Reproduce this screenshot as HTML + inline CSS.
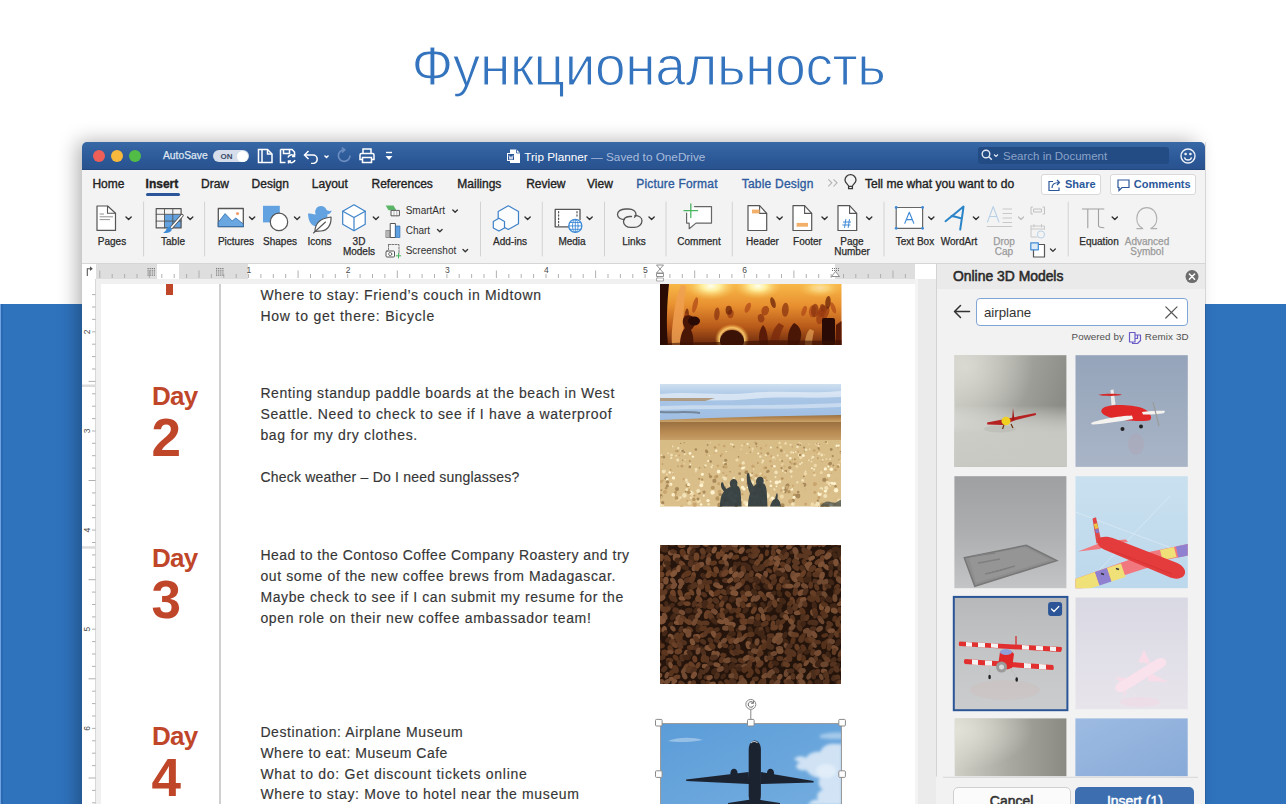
<!DOCTYPE html>
<html><head><meta charset="utf-8">
<style>
*{margin:0;padding:0;box-sizing:border-box}
html,body{width:1286px;height:804px;overflow:hidden;background:#fff;font-family:"Liberation Sans",sans-serif}
.a{position:absolute}
.t{position:absolute;white-space:nowrap;line-height:1}
#band{left:0;top:304px;width:1286px;height:500px;background:#2f73bd}
#title{left:0;top:39px;width:1286px;text-align:center;font-size:55px;color:#3473bd;line-height:55px;letter-spacing:-0.4px;-webkit-text-stroke:1.2px #fff;padding-left:11px}
#win{left:82px;top:142px;width:1123px;height:700px;border-radius:5px 5px 0 0;background:#f3f3f3;box-shadow:-7px -3px 20px -3px rgba(0,0,0,.32);overflow:hidden}
#tb{left:0;top:0;width:1123px;height:28px;background:linear-gradient(#3868a6,#2b5796 70%,#29538f);border-bottom:1px solid #22487f}
.tab{font-size:12px;color:#222;-webkit-text-stroke:0.35px #222}
.rl{font-size:10px;color:#2a2a2a;text-align:center;-webkit-text-stroke:0.25px #2a2a2a}
.sep{width:1px;background:#d4d4d4;top:60px;height:54px}
.chev{width:5px;height:5px;border-right:1.4px solid #444;border-bottom:1.4px solid #444;transform:rotate(45deg)}
.body{font-size:14px;color:#363636;line-height:20.9px;white-space:nowrap;-webkit-text-stroke:0.15px #363636}
.day{font-size:26px;font-weight:bold;color:#c0462a;letter-spacing:-0.8px;line-height:1}
.dig{font-size:53px;font-weight:bold;color:#c0462a;line-height:1}
</style></head>
<body>
<div id="band" class="a"></div>
<div class="a" style="left:0;top:304px;width:1px;height:500px;background:#6fa3e2"></div>
<div class="a" style="left:1px;top:304px;width:1.5px;height:500px;background:#2b68b2"></div>
<div id="title" class="a">Функциональность</div>

<div id="win" class="a">
  <!-- title bar -->
  <div id="tb" class="a"></div>
  <!-- tabs row + ribbon share bg #f3f3f3 -->
  <div class="a" style="left:0;top:121px;width:1123px;height:1px;background:#d9d9d9"></div>
</div>

<!-- ===== TITLE BAR ===== -->
<div class="a" style="left:93px;top:150px;width:12px;height:12px;border-radius:50%;background:#ee5f58"></div>
<div class="a" style="left:110.5px;top:150px;width:12px;height:12px;border-radius:50%;background:#f6b83d"></div>
<div class="a" style="left:128.5px;top:150px;width:12px;height:12px;border-radius:50%;background:#52bd46"></div>
<div class="t" style="left:163px;top:151px;font-size:10.3px;color:#dfe6f1;-webkit-text-stroke:0.25px #dfe6f1">AutoSave</div>
<div class="a" style="left:212.5px;top:150.3px;width:36px;height:12px;border-radius:6px;background:#d5deea"></div>
<div class="t" style="left:220.5px;top:152.5px;font-size:8px;font-weight:bold;color:#3a4a66">ON</div>
<div class="a" style="left:236.5px;top:150.5px;width:11.5px;height:11.5px;border-radius:50%;background:#fff"></div>
<svg class="a" style="left:255px;top:146px" width="145" height="18" viewBox="0 0 145 18" fill="none" stroke="#fff" stroke-width="1.5">
  <!-- sidebar icon x 258-272.7 -->
  <path d="M3.5 3.5h9l4.5 4.5v8.5h-13.5z M7 3.5v13"/>
  <path d="M12.5 3.5v4.5h4.5"/>
  <!-- save icon 280-296 -->
  <path d="M25.5 3.5h11.5l2.5 2.5v3 M25.5 3.5v13h5 M28.5 3.5v4h6v-4"/>
  <path d="M33 11.5a3.5 3.5 0 0 1 6.2 -1.2 M40 14a3.5 3.5 0 0 1 -6.2 1.2"/>
  <path d="M39.5 8v2.5h-2.5 M33.5 17.5v-2.5h2.5"/>
  <!-- undo 304.5-318 -->
  <path d="M50 9h8a4.2 4.2 0 0 1 0 8.4h-2" />
  <path d="M53.5 5l-4 4l4 4"/>
  <path d="M69.5 9.5l2 2l2 -2" stroke-width="1.3"/>
  <!-- redo faded 337-350 -->
  <path d="M89.5 3.8A5.8 5.8 0 1 0 95 9.5" stroke="#6a8cc0" stroke-width="1.7"/>
  <path d="M86.8 1.6l2.9 2.2l-2.6 2.7" stroke="#6a8cc0" stroke-width="1.7"/>
  <!-- print 360-374 -->
  <path d="M108 7.5v-4.5h8v4.5 M106.5 7.5h11a1.5 1.5 0 0 1 1.5 1.5v4.5h-2.5 M106.5 7.5a1.5 1.5 0 0 0 -1.5 1.5v4.5h2.5 M107.5 11.5h9v5h-9z"/>
  <!-- customize -->
  <path d="M131 6.5h6" stroke-width="1.4"/>
  <path d="M130.5 10h7l-3.5 4z" fill="#fff" stroke="none"/>
</svg>
<svg class="a" style="left:506px;top:148px" width="16" height="16" viewBox="0 0 16 16">
  <path d="M4 1.5h6.5l3.5 3.5v10h-10z" fill="#fff"/>
  <path d="M10.5 1.5v3.5h3.5" fill="none" stroke="#2b579a" stroke-width="0.8"/>
  <rect x="1.5" y="5.5" width="7" height="7" fill="#2b579a" stroke="#fff" stroke-width="1"/>
  <path d="M3 7.5l1 4l1-3l1 3l1-4" fill="none" stroke="#fff" stroke-width="0.8"/>
</svg>
<div class="t" style="left:524.2px;top:150.5px;font-size:11.75px;color:#fff">Trip Planner <span style="color:#a9bcdb">— Saved to OneDrive</span></div>
<div class="a" style="left:977.8px;top:147.4px;width:191.4px;height:16.8px;border-radius:3px;background:#234b84"></div>
<svg class="a" style="left:980px;top:148px" width="22" height="15" viewBox="0 0 22 15" fill="none" stroke="#dfe7f3" stroke-width="1.4">
  <circle cx="6" cy="6" r="3.8"/><path d="M8.8 8.8l3 3"/>
  <path d="M14 6.5l2 2l2-2" stroke-width="1.1"/>
</svg>
<div class="t" style="left:1003px;top:150.5px;font-size:11.5px;color:#8aa3c8">Search in Document</div>
<svg class="a" style="left:1179px;top:146.5px" width="18" height="18" viewBox="0 0 18 18" fill="none" stroke="#eef2f8" stroke-width="1.4">
  <circle cx="9" cy="9" r="7"/><circle cx="6.6" cy="7" r="0.6" fill="#fff"/><circle cx="11.4" cy="7" r="0.6" fill="#fff"/>
  <path d="M5.5 10.3a3.6 3.6 0 0 0 7 0"/>
</svg>

<!-- ===== TABS ===== -->
<div class="t tab" style="left:92.4px;top:178.3px">Home</div>
<div class="t tab" style="left:145.6px;top:178.3px;font-weight:bold">Insert</div>
<div class="a" style="left:145.6px;top:192.6px;width:34.6px;height:3px;border-radius:1.5px;background:#2b579a"></div>
<div class="t tab" style="left:201px;top:178.3px">Draw</div>
<div class="t tab" style="left:251.6px;top:178.3px">Design</div>
<div class="t tab" style="left:311.8px;top:178.3px">Layout</div>
<div class="t tab" style="left:371.5px;top:178.3px">References</div>
<div class="t tab" style="left:457.3px;top:178.3px">Mailings</div>
<div class="t tab" style="left:526.2px;top:178.3px">Review</div>
<div class="t tab" style="left:587px;top:178.3px">View</div>
<div class="t tab" style="left:636.2px;top:178.3px;color:#2e5c9e;-webkit-text-stroke-color:#2e5c9e;letter-spacing:0.2px">Picture Format</div>
<div class="t tab" style="left:741.8px;top:178.3px;color:#2e5c9e;-webkit-text-stroke-color:#2e5c9e;letter-spacing:0.2px">Table Design</div>
<svg class="a" style="left:824px;top:172px" width="36" height="20" viewBox="0 0 36 20" fill="none" stroke="#b5b5b5" stroke-width="1.2">
  <path d="M4.3 7.3l3.5 3.5l-3.5 3.5 M9.5 7.3l3.5 3.5l-3.5 3.5"/>
  <path d="M24.6 16.6v-2.4c0-1.4-3.6-3.4-3.6-6a5.5 5.5 0 0 1 11 0c0 2.6-3.6 4.6-3.6 6v2.4z M24.6 14.4h3.8" stroke="#3a3a3a" stroke-width="1.3"/>
</svg>
<div class="t tab" style="left:864.9px;top:178.3px;font-size:12.1px">Tell me what you want to do</div>
<div class="a" style="left:1041.3px;top:174px;width:60px;height:21.3px;border:1px solid #d8d8d8;border-radius:3px;background:#fff"></div>
<svg class="a" style="left:1047px;top:178px" width="16" height="14" viewBox="0 0 16 14" fill="none" stroke="#2b579a" stroke-width="1.2">
  <path d="M6 3.5h-4v9h10v-3"/><path d="M5 10c0-4 3-5.5 7-5.5 M10 2l2.5 2.5l-2.5 2.5"/>
</svg>
<div class="t" style="left:1065px;top:179px;font-size:11px;font-weight:bold;color:#2b579a">Share</div>
<div class="a" style="left:1110.1px;top:174px;width:86.3px;height:21.3px;border:1px solid #d8d8d8;border-radius:3px;background:#fff"></div>
<svg class="a" style="left:1116px;top:178px" width="16" height="14" viewBox="0 0 16 14" fill="none" stroke="#2b579a" stroke-width="1.2">
  <path d="M2 2h11v7.5h-7l-3 3v-3h-1z"/>
</svg>
<div class="t" style="left:1133.8px;top:179px;font-size:11px;font-weight:bold;color:#2b579a">Comments</div>

<!-- ===== RIBBON ===== -->
<svg class="a" style="left:82px;top:198px" width="1123" height="65" viewBox="82 198 1123 65" fill="none" stroke-linejoin="round" stroke-linecap="round">
 <g stroke="#d2d2d2" stroke-width="1">
  <path d="M143.6 202v54 M204.6 202v54 M480.5 202v54 M542.3 202v54 M604.5 202v54 M666 202v54 M732.3 202v54 M884 202v54 M1068.2 202v54"/>
 </g>
 <g stroke="#333" stroke-width="1.4">
  <path d="M126 217l2.6 2.6l2.6-2.6 M187.6 217l2.6 2.6l2.6-2.6 M249.5 217l2.6 2.6l2.6-2.6 M294.5 217l2.6 2.6l2.6-2.6 M373.3 217l2.6 2.6l2.6-2.6 M525 217l2.6 2.6l2.6-2.6 M587 217l2.6 2.6l2.6-2.6 M649 217l2.6 2.6l2.6-2.6 M777 217l2.6 2.6l2.6-2.6 M822 217l2.6 2.6l2.6-2.6 M866.6 217l2.6 2.6l2.6-2.6 M928.7 217l2.6 2.6l2.6-2.6 M973.4 217l2.6 2.6l2.6-2.6 M1112.2 217l2.6 2.6l2.6-2.6" />
  <path d="M452.8 210l2.3 2.3l2.3-2.3 M437.5 229.5l2.3 2.3l2.3-2.3 M463 249.5l2.3 2.3l2.3-2.3 M1050.5 249l2.4 2.4l2.4-2.4" stroke-width="1.3"/>
  <path d="M1018.5 217l2.5 2.5l2.5-2.5" stroke="#bbb" stroke-width="1.2"/>
 </g>
 <!-- Pages -->
 <path d="M97 206h10.7l7.8 7.2v17.2h-18.5z" fill="#fff" stroke="#555" stroke-width="1.2"/>
 <path d="M107.5 206.3v7h7.8" stroke="#555" stroke-width="1.1"/>
 <path d="M100 214h3.6 M100 216.8h12.6 M100 219.6h9.6" stroke="#888" stroke-width="0.9"/>
 <!-- Table -->
 <rect x="164.3" y="214.3" width="16.8" height="13.6" fill="#62a2e0"/>
 <path d="M156.2 208.6h24.9v19.3h-24.9z" fill="none" stroke="#555" stroke-width="1.2"/>
 <path d="M156.2 214.3h24.9 M156.2 221.1h24.9 M164.5 208.6v19.3 M172.8 208.6v19.3" stroke="#555" stroke-width="0.9"/>
 <path d="M182 215.5l-10.5 12" stroke="#555" stroke-width="3.4"/>
 <path d="M182 215.5l-10.5 12" stroke="#fff" stroke-width="1.6"/>
 <path d="M170.5 226.5c-3 0-4 2-4.5 3.5c-0.6 1.6-2 2.3-3 2.4c3 1.2 7.5 0.5 8.8-2.3z" fill="#3f8ad3" stroke="none"/>
 <!-- Pictures -->
 <rect x="218.3" y="208.5" width="25" height="18.2" fill="#fff" stroke="#555" stroke-width="1.3"/>
 <path d="M218.5 222l6.6-8.4l7 7.4l3.7-3l7.5 6v2.6h-24.8z" fill="#6aa6e0" stroke="#2f6fb3" stroke-width="0.8"/>
 <circle cx="237.5" cy="213.6" r="1.6" fill="#f0a070"/>
 <!-- Shapes -->
 <rect x="263" y="205.8" width="16.8" height="16.6" fill="#62a2e0"/>
 <circle cx="279" cy="221.9" r="8.7" fill="#fff" stroke="#555" stroke-width="1.2"/>
 <!-- Icons -->
 <path d="M308 213.5c2 0 5 .5 8 1c-1.5-2-1-6 2.5-8c3-1.6 7 .2 7.7 2.8c.5 1.6 2.5 1.8 5.5 1.5c-.5 2.5-3 3.5-4.5 3.7c1 4 -1 9-4.5 10.5l-6 1.5c-5 0-8.5-5-8.7-13z" fill="#62a2e0" stroke="none"/>
 <path d="M315 231.5c0-7 4-13 16-14.5c0.5 8-3.5 13.5-10 14c-2.5.2-4.5 0-6 .5z" fill="#fff" stroke="#555" stroke-width="1.2"/>
 <path d="M313.5 233l12-11" stroke="#555" stroke-width="1.1"/>
 <!-- 3D Models cube -->
 <path d="M354 204.8l11.2 6.4v13l-11.2 6.5l-11.3-6.5v-13z" fill="#fff" stroke="#3d82c8" stroke-width="1.2"/>
 <path d="M342.8 211.2l11.2 6.3l11.2-6.3 M354 217.5v13" stroke="#3d82c8" stroke-width="1.2"/>
 <!-- SmartArt -->
 <path d="M385.7 205.6h7.8l2.8 4.7h-7.8z" fill="#5ab567"/>
 <rect x="391.4" y="210.4" width="8" height="5.4" fill="#fff" stroke="#555" stroke-width="1"/>
 <path d="M394 210.4v5.4 M396.8 210.4v5.4" stroke="#888" stroke-width="0.7"/>
 <!-- Chart -->
 <rect x="386.2" y="230.5" width="4.1" height="7" fill="#b5b5b5" stroke="#777" stroke-width="0.7"/>
 <rect x="390.6" y="223.5" width="4.8" height="14" fill="#fff" stroke="#555" stroke-width="1"/>
 <rect x="395.8" y="226" width="4.1" height="11.5" fill="#5ea0e0" stroke="#2f6fb3" stroke-width="0.7"/>
 <!-- Screenshot -->
 <path d="M388.5 244.5h10.5v9.5" stroke="#777" stroke-width="1" stroke-dasharray="2 1.3"/>
 <path d="M388.5 244.5v5" stroke="#777" stroke-width="1" stroke-dasharray="2 1.3"/>
 <rect x="386" y="251" width="8.5" height="6" rx="1" fill="#fff" stroke="#555" stroke-width="1"/>
 <circle cx="390.2" cy="254" r="1.6" stroke="#555" stroke-width="0.8"/>
 <path d="M398.5 253.5v4.5 M396.3 255.8h4.4" stroke="#4bb35c" stroke-width="1"/>
 <!-- Add-ins -->
 <path d="M508.3 205.8l10.2 5.8v12.1l-10.2 5.8l-10.1-5.8v-12.1z" fill="#fafcfe" stroke="#3d82c8" stroke-width="1.2"/>
 <path d="M498.9 218.3l5.6 3.2v6.4l-5.6 3.2l-5.6-3.2v-6.4z" fill="#fafcfe" stroke="#3d82c8" stroke-width="1.2"/>
 <!-- Media -->
 <path d="M570 226.8h-14.8v-17.4h24.8v10" fill="#fff" stroke="#555" stroke-width="1.3"/>
 <path d="M558.6 211.5v14 M577 211.5v5" stroke="#555" stroke-width="1.2" stroke-dasharray="1.3 2"/>
 <circle cx="575.3" cy="225.9" r="6.5" fill="#fff" stroke="#3e8ad6" stroke-width="1.3"/>
 <path d="M568.8 225.9h13 M575.3 219.4v13 M569.8 222.5h11 M569.8 229.3h11" stroke="#3e8ad6" stroke-width="0.9"/>
 <ellipse cx="575.3" cy="225.9" rx="2.8" ry="6.5" stroke="#3e8ad6" stroke-width="0.9"/>
 <!-- Links -->
 <path d="M624.5 219.5c-3.5 0-7-1.8-7-5c0-3 3-5.5 8-5.5h3c4.5 0 7.5 2.4 7.5 5.2c0 1.5-0.5 2.2-1.5 3" stroke="#555" stroke-width="1.3"/>
 <path d="M635 215.5c3.8 0 7 2 7 5.3c0 3.5-3.5 6.6-8 6.6h-3c-4.5 0-7.5-2.7-7.5-5.7c0-3 2.5-5 6-5.2h2" stroke="#555" stroke-width="1.3"/>
 <!-- Comment -->
 <path d="M694.5 206.6h17v16.5h-15.5l-6.8 5.6v-5.6h-2.6v-10" fill="#fff" stroke="#666" stroke-width="1.2"/>
 <path d="M690.8 203.8v13.8 M684 210.7h13.6" stroke="#4cb560" stroke-width="1.3"/>
 <!-- Header -->
 <path d="M748 205.6h11.6l7.1 7.8v17.1h-18.7z" fill="#fff" stroke="#555" stroke-width="1.2"/>
 <path d="M759.6 205.8v7.6h7" stroke="#555" stroke-width="1.1"/>
 <rect x="752" y="209.6" width="7.6" height="3.8" fill="#f2b06b"/>
 <!-- Footer -->
 <path d="M793 205.6h11.6l7.1 7.8v17.1h-18.7z" fill="#fff" stroke="#555" stroke-width="1.2"/>
 <path d="M804.6 205.8v7.6h7" stroke="#555" stroke-width="1.1"/>
 <rect x="796.6" y="222.9" width="11.4" height="3.8" fill="#f2b06b"/>
 <!-- Page number -->
 <path d="M838 205.6h11.6l7.1 7.8v17.1h-18.7z" fill="#fff" stroke="#555" stroke-width="1.2"/>
 <path d="M849.6 205.8v7.6h7" stroke="#555" stroke-width="1.1"/>
 <path d="M845.8 219.5l-1.2 8 M849.4 219.5l-1.2 8 M843.4 222h7.2 M842.8 225h7.2" stroke="#3e8ad6" stroke-width="1"/>
 <!-- Text box -->
 <rect x="896.2" y="207.5" width="26.4" height="20.8" fill="#fff" stroke="#666" stroke-width="1.2"/>
 <circle cx="896.2" cy="207.5" r="1.4" fill="#3e8ad6"/><circle cx="922.6" cy="207.5" r="1.4" fill="#3e8ad6"/>
 <circle cx="896.2" cy="228.3" r="1.4" fill="#3e8ad6"/><circle cx="922.6" cy="228.3" r="1.4" fill="#3e8ad6"/>
 <path d="M904.8 223.3l4.5-11l4.5 11 M906.3 219.6h6" stroke="#3e8ad6" stroke-width="1.1"/>
 <!-- WordArt -->
 <path d="M945.5 221.2c4-3 12-9.5 18-14.6c-1 8-2.3 16-3.3 23 M951.5 216c3 0.5 6 1.3 9.3 2.2" stroke="#2a84c8" stroke-width="2"/>
 <!-- Drop cap -->
 <path d="M987.5 222l5.7-15.5l5.7 15.5 M989.8 216.5h6.8" stroke="#b8d0e6" stroke-width="1.1"/>
 <path d="M1003 209h8.6 M1003 213.5h8.6 M1003 218h8.6 M1003 222.5h8.6 M987.2 226.5h24.6" stroke="#c8c8c8" stroke-width="1"/>
 <!-- small 3 icons -->
 <path d="M1032.5 207h-1.5v7h1.5 M1043 207h1.5v7h-1.5" stroke="#c0c0c0" stroke-width="1"/>
 <rect x="1034" y="209" width="7.5" height="3" stroke="#c0c0c0" stroke-width="1"/>
 <path d="M1031 226h13.5v3 M1031 226v11h6 M1031 229h13.5 M1034 224.5v2.5 M1041.5 224.5v2.5" stroke="#c8c8c8" stroke-width="1"/>
 <circle cx="1041" cy="234.5" r="3.6" stroke="#b8d0e6" stroke-width="1" fill="#f3f3f3"/>
 <rect x="1033.5" y="244.5" width="11" height="12.5" fill="#fff" stroke="#555" stroke-width="1.2"/>
 <rect x="1030.8" y="242.8" width="7.5" height="7" fill="#dceaf7" stroke="#3e8ad6" stroke-width="1.2"/>
 <!-- Equation -->
 <path d="M1082.4 209h21.5 M1087.8 209v18.7 M1098.5 209v16.5c0 1.6 1.5 2.2 5.4 2.2" stroke="#a0a0a0" stroke-width="1.1"/>
 <!-- Omega -->
 <path d="M1136.8 228.6h6c-4-2-6-5.5-6-10c0-6.3 4.5-11 10-11s10 4.7 10 11c0 4.5-2 8-6 10h6" stroke="#b0b0b0" stroke-width="1.1"/>
</svg>
<div class="t rl" style="left:96px;width:32px;top:236.5px">Pages</div>
<div class="t rl" style="left:157px;width:32px;top:236.5px">Table</div>
<div class="t rl" style="left:210px;width:52px;top:236.5px">Pictures</div>
<div class="t rl" style="left:260px;width:40px;top:236.5px">Shapes</div>
<div class="t rl" style="left:302px;width:35px;top:236.5px">Icons</div>
<div class="t rl" style="left:339px;width:40px;top:236.5px;line-height:10.4px">3D<br>Models</div>
<div class="t" style="left:405.7px;top:206px;font-size:10px;color:#303030">SmartArt</div>
<div class="t" style="left:405.7px;top:225.5px;font-size:10px;color:#303030">Chart</div>
<div class="t" style="left:405.7px;top:245.5px;font-size:10px;color:#303030">Screenshot</div>
<div class="t rl" style="left:490px;width:40px;top:236.5px">Add-ins</div>
<div class="t rl" style="left:552px;width:40px;top:236.5px">Media</div>
<div class="t rl" style="left:614px;width:40px;top:236.5px">Links</div>
<div class="t rl" style="left:674px;width:50px;top:236.5px">Comment</div>
<div class="t rl" style="left:742px;width:41px;top:236.5px">Header</div>
<div class="t rl" style="left:787px;width:41px;top:236.5px">Footer</div>
<div class="t rl" style="left:830px;width:44px;top:236.5px;line-height:10.4px">Page<br>Number</div>
<div class="t rl" style="left:890px;width:50px;top:236.5px">Text Box</div>
<div class="t rl" style="left:936px;width:46px;top:236.5px">WordArt</div>
<div class="t rl" style="left:983px;width:42px;top:236.5px;line-height:10.4px;color:#9a9a9a;-webkit-text-stroke-color:#9a9a9a">Drop<br>Cap</div>
<div class="t rl" style="left:1074px;width:50px;top:236.5px">Equation</div>
<div class="t rl" style="left:1121px;width:52px;top:236.5px;line-height:10.4px;color:#9a9a9a;-webkit-text-stroke-color:#9a9a9a">Advanced<br>Symbol</div>

<!-- ===== RULER ===== -->
<div class="a" style="left:82px;top:263px;width:1123px;height:1px;background:#d6d6d6"></div>
<div class="a" style="left:82px;top:264px;width:854px;height:14.5px;background:#fff"></div>
<div class="a" style="left:96px;top:264px;width:61px;height:14.5px;background:#dedede"></div>
<div class="a" style="left:179px;top:264px;width:68.5px;height:14.5px;background:#dedede"></div>
<div class="a" style="left:835px;top:264px;width:80px;height:14.5px;background:#dedede"></div>
<div class="a" style="left:82px;top:278.5px;width:854px;height:526px;background:#f0f0f0"></div>
<div class="a" style="left:82px;top:278.5px;width:14px;height:526px;background:#fff"></div>
<div class="a" style="left:95.3px;top:278.5px;width:0.8px;height:526px;background:#d8d8d8"></div>
<!-- page -->
<div class="a" style="left:101px;top:284px;width:814px;height:520px;background:#fff"></div>
<div class="a" style="left:915px;top:278.5px;width:21px;height:526px;background:#ebebeb"></div>
<div class="a" style="left:915px;top:278.5px;width:3px;height:526px;background:#f4f4f4"></div>
<svg class="a" style="left:82px;top:262px" width="854" height="542" viewBox="82 262 854 542">
 <path d="M99.8 270.5v7.5 M112.2 274v4 M124.6 274v4 M137.0 274v4 M149.4 270.5v7.5 M161.8 274v4 M174.2 274v4 M186.6 274v4 M199.0 270.5v7.5 M211.4 274v4 M223.8 274v4 M236.2 274v4 M248.6 274v4 M260.9 274v4 M273.3 274v4 M285.7 274v4 M298.1 270.5v7.5 M310.5 274v4 M322.9 274v4 M335.3 274v4 M347.7 274v4 M360.1 274v4 M372.5 274v4 M384.9 274v4 M397.3 270.5v7.5 M409.7 274v4 M422.1 274v4 M434.5 274v4 M446.9 274v4 M459.2 274v4 M471.6 274v4 M484.0 274v4 M496.4 270.5v7.5 M508.8 274v4 M521.2 274v4 M533.6 274v4 M546.0 274v4 M558.4 274v4 M570.8 274v4 M583.2 274v4 M595.6 270.5v7.5 M608.0 274v4 M620.4 274v4 M632.8 274v4 M645.1 274v4 M657.5 274v4 M669.9 274v4 M682.3 274v4 M694.7 270.5v7.5 M707.1 274v4 M719.5 274v4 M731.9 274v4 M744.3 274v4 M756.7 274v4 M769.1 274v4 M781.5 274v4 M793.9 270.5v7.5 M806.3 274v4 M818.7 274v4 M831.1 274v4 M843.5 274v4 M855.8 274v4 M868.2 274v4 M880.6 274v4 M893.0 270.5v7.5 M905.4 274v4" stroke="#a8a8a8" stroke-width="0.9"/>
 <g font-family="Liberation Sans" font-size="8.5" fill="#4a4a4a"><text x="246.6" y="272.8">1</text><text x="345.7" y="272.8">2</text><text x="444.9" y="272.8">3</text><text x="544.0" y="272.8">4</text><text x="643.1" y="272.8">5</text><text x="742.3" y="272.8">6</text></g>
 <path d="M92 294.6h3.5 M92 307.0h3.5 M92 319.4h3.5 M92 331.8h3.5 M92 344.2h3.5 M92 356.6h3.5 M92 369.0h3.5 M88.5 381.4h7 M92 393.8h3.5 M92 406.2h3.5 M92 418.6h3.5 M92 431.0h3.5 M92 443.3h3.5 M92 455.7h3.5 M92 468.1h3.5 M88.5 480.5h7 M92 492.9h3.5 M92 505.3h3.5 M92 517.7h3.5 M92 530.1h3.5 M92 542.5h3.5 M92 554.9h3.5 M92 567.3h3.5 M88.5 579.7h7 M92 592.1h3.5 M92 604.5h3.5 M92 616.9h3.5 M92 629.2h3.5 M92 641.6h3.5 M92 654.0h3.5 M92 666.4h3.5 M88.5 678.8h7 M92 691.2h3.5 M92 703.6h3.5 M92 716.0h3.5 M92 728.4h3.5 M92 740.8h3.5 M92 753.2h3.5 M92 765.6h3.5 M88.5 778.0h7 M92 790.4h3.5 M92 802.8h3.5" stroke="#a8a8a8" stroke-width="0.9"/>
 <g font-family="Liberation Sans" font-size="8.5" fill="#4a4a4a"><text transform="translate(87.5 331.8) rotate(-90)" text-anchor="middle" y="2.5">2</text><text transform="translate(87.5 431.0) rotate(-90)" text-anchor="middle" y="2.5">3</text><text transform="translate(87.5 530.1) rotate(-90)" text-anchor="middle" y="2.5">4</text><text transform="translate(87.5 629.2) rotate(-90)" text-anchor="middle" y="2.5">5</text><text transform="translate(87.5 728.4) rotate(-90)" text-anchor="middle" y="2.5">6</text><text transform="translate(87.5 827.6) rotate(-90)" text-anchor="middle" y="2.5">7</text></g>
 <!-- margin markers -->
 <g fill="#777">
  <path d="M147.5 268h1.2v1.2h-1.2z M149.6 268h1.2v1.2h-1.2z M151.7 268h1.2v1.2h-1.2z M153.8 268h1.2v1.2h-1.2z M147.5 270.2h1.2v1.2h-1.2z M149.6 270.2h1.2v1.2h-1.2z M151.7 270.2h1.2v1.2h-1.2z M153.8 270.2h1.2v1.2h-1.2z M147.5 272.4h1.2v1.2h-1.2z M149.6 272.4h1.2v1.2h-1.2z M151.7 272.4h1.2v1.2h-1.2z M153.8 272.4h1.2v1.2h-1.2z M147.5 274.6h1.2v1.2h-1.2z M149.6 274.6h1.2v1.2h-1.2z M151.7 274.6h1.2v1.2h-1.2z M153.8 274.6h1.2v1.2h-1.2z"/>
  <path d="M216 268h1.2v1.2h-1.2z M218.1 268h1.2v1.2h-1.2z M220.2 268h1.2v1.2h-1.2z M222.3 268h1.2v1.2h-1.2z M216 270.2h1.2v1.2h-1.2z M218.1 270.2h1.2v1.2h-1.2z M220.2 270.2h1.2v1.2h-1.2z M222.3 270.2h1.2v1.2h-1.2z M216 272.4h1.2v1.2h-1.2z M218.1 272.4h1.2v1.2h-1.2z M220.2 272.4h1.2v1.2h-1.2z M222.3 272.4h1.2v1.2h-1.2z M216 274.6h1.2v1.2h-1.2z M218.1 274.6h1.2v1.2h-1.2z M220.2 274.6h1.2v1.2h-1.2z M222.3 274.6h1.2v1.2h-1.2z"/>
 </g>
 <path d="M87.3 276v-7.3h3" stroke="#555" stroke-width="1.1" fill="none"/><path d="M90 266.3l2.8 2.4l-2.8 2.4z" fill="#555"/>
 <!-- indent markers at 660 and 835 -->
 <path d="M656.5 265h7l-3.5 4l3.5 4h-7l3.5-4z" fill="#fff" stroke="#777" stroke-width="0.8"/>
 <path d="M656.5 273.5h7v3h-7z" fill="#fff" stroke="#777" stroke-width="0.8"/>
 <path d="M656.5 278h7v3h-7z" fill="#fff" stroke="#999" stroke-width="0.8"/>
 <path d="M832 268h1v1h-1z M834 268h1v1h-1z M836 268h1v1h-1z M838 268h1v1h-1z M832 270h1v1h-1z M834 270h1v1h-1z M836 270h1v1h-1z M838 270h1v1h-1z" fill="#777"/>
 <path d="M835.5 271.5l4 5h-8z" fill="#fff" stroke="#777" stroke-width="0.8"/>
 <!-- left ruler margin markers -->
 <rect x="82" y="384.5" width="14" height="2.5" fill="#dcdcdc"/><rect x="82" y="546.2" width="14" height="2.5" fill="#dcdcdc"/>
</svg>

<!-- ===== DOCUMENT CONTENT ===== -->
<div class="body a" style="left:260.4px;top:284.6px;letter-spacing:0.636px">Where to stay: Friend’s couch in Midtown</div>
<div class="body a" style="left:260.4px;top:305.5px;letter-spacing:0.792px">How to get there: Bicycle</div>
<div class="body a" style="left:260.4px;top:383.0px;letter-spacing:0.573px">Renting standup paddle boards at the beach in West</div>
<div class="body a" style="left:260.4px;top:403.9px;letter-spacing:0.661px">Seattle. Need to check to see if I have a waterproof</div>
<div class="body a" style="left:260.4px;top:424.8px;letter-spacing:0.691px">bag for my dry clothes.</div>
<div class="body a" style="left:260.4px;top:466.6px;letter-spacing:0.206px">Check weather – Do I need sunglasses?</div>
<div class="body a" style="left:260.4px;top:545.2px;letter-spacing:0.5px">Head to the Contoso Coffee Company Roastery and try</div>
<div class="body a" style="left:260.4px;top:566.1px;letter-spacing:0.623px">out some of the new coffee brews from Madagascar.</div>
<div class="body a" style="left:260.4px;top:587.0px;letter-spacing:0.614px">Maybe check to see if I can submit my resume for the</div>
<div class="body a" style="left:260.4px;top:607.9px;letter-spacing:0.673px">open role on their new coffee ambassador team!</div>
<div class="body a" style="left:260.4px;top:721.7px;letter-spacing:0.604px">Destination: Airplane Museum</div>
<div class="body a" style="left:260.4px;top:742.6px;letter-spacing:0.496px">Where to eat: Museum Cafe</div>
<div class="body a" style="left:260.4px;top:763.5px;letter-spacing:0.724px">What to do: Get discount tickets online</div>
<div class="body a" style="left:260.4px;top:784.4px;letter-spacing:0.64px">Where to stay: Move to hotel near the museum</div>
<div class="a" style="left:219.3px;top:284px;width:2px;height:520px;background:#d0d0d0"></div>
<div class="a" style="left:166px;top:284px;width:7px;height:11px;background:#c0462a"></div>
<div class="t day" style="left:152px;top:382.9px">Day</div>
<div class="t dig" style="left:151.5px;top:410.8px">2</div>
<div class="t day" style="left:152px;top:544.5px">Day</div>
<div class="t dig" style="left:151.5px;top:572.5px">3</div>
<div class="t day" style="left:152px;top:722.9px">Day</div>
<div class="t dig" style="left:151.5px;top:751px">4</div>

<!-- ===== PANEL ===== -->
<div class="a" style="left:936px;top:264px;width:269px;height:540px;background:#f2f2f2"></div>
<div class="a" style="left:936px;top:264px;width:269px;height:24.5px;background:#eaeaea"></div>
<div class="a" style="left:935.5px;top:264px;width:1px;height:540px;background:#d3d3d3"></div>
<div class="t" style="left:953px;top:270.2px;font-size:13.9px;color:#2a2a2a;-webkit-text-stroke:0.55px #2a2a2a">Online 3D Models</div>
<svg class="a" style="left:1185px;top:270px" width="14" height="14" viewBox="0 0 14 14">
 <circle cx="7" cy="6.6" r="6.5" fill="#6d6d6d"/>
 <path d="M4.4 4l5.2 5.2 M9.6 4l-5.2 5.2" stroke="#fff" stroke-width="1.5" stroke-linecap="round"/>
</svg>
<svg class="a" style="left:950px;top:302px" width="24" height="20" viewBox="0 0 24 20" fill="none" stroke="#333" stroke-width="1.5" stroke-linecap="round" stroke-linejoin="round">
 <path d="M19.5 9.5h-14.5 M10.5 3.5l-6 6l6 6"/>
</svg>
<div class="a" style="left:976px;top:297.8px;width:211.5px;height:28.4px;border:1.6px solid #80a6d6;border-radius:4px;background:#fff"></div>
<div class="t" style="left:983.9px;top:305.8px;font-size:13.3px;color:#333">airplane</div>
<svg class="a" style="left:1164px;top:304.5px" width="15" height="15" viewBox="0 0 15 15">
 <path d="M1.8 1.8l11.2 11.2 M13 1.8l-11.2 11.2" stroke="#555" stroke-width="1.2" stroke-linecap="round"/>
</svg>
<div class="t" style="left:1071.6px;top:332.4px;font-size:9.8px;color:#505050;letter-spacing:0.05px">Powered by</div>
<svg class="a" style="left:1128px;top:330.5px" width="14" height="14" viewBox="0 0 14 14" fill="none" stroke="#6a5cc8" stroke-width="1.2" stroke-linejoin="round">
 <path d="M1.5 1.5h5.5v9.5h-5.5z M7 4l5.5 0v5.5l-3 3h-5v-2"/>
 <path d="M9.5 4v3.5h-2.5"/>
</svg>
<div class="t" style="left:1144.8px;top:332.4px;font-size:9.8px;color:#505050;letter-spacing:0.1px">Remix 3D</div>

<svg class="a" style="left:936px;top:345px" width="269" height="459" viewBox="936 345 269 459">
 <defs>
  <linearGradient id="t1" x1="0" y1="0" x2="1" y2="0.3"><stop offset="0" stop-color="#c6c6c0"/><stop offset="1" stop-color="#8c8c86"/></linearGradient>
  <linearGradient id="t1b" x1="0" y1="0" x2="0" y2="1"><stop offset="0" stop-color="#fff" stop-opacity="0"/><stop offset="0.45" stop-color="#fff" stop-opacity="0"/><stop offset="0.7" stop-color="#cfcfca" stop-opacity="0.9"/><stop offset="1" stop-color="#c9c9c4" stop-opacity="1"/></linearGradient>
  <radialGradient id="t1c" cx="0.1" cy="0.1" r="0.6"><stop offset="0" stop-color="#e0e0d8" stop-opacity=".8"/><stop offset="1" stop-color="#e0e0d8" stop-opacity="0"/></radialGradient>
  <linearGradient id="t2" x1="0" y1="0" x2="0" y2="1"><stop offset="0" stop-color="#95a4ba"/><stop offset="1" stop-color="#a9b5c7"/></linearGradient>
  <linearGradient id="t3" x1="0" y1="0" x2="0" y2="1"><stop offset="0" stop-color="#9ea0a2"/><stop offset="0.5" stop-color="#acaeb0"/><stop offset="1" stop-color="#c2c4c5"/></linearGradient>
  <linearGradient id="t4" x1="0" y1="0" x2="0" y2="1"><stop offset="0" stop-color="#c9e0ef"/><stop offset="1" stop-color="#bcd8ec"/></linearGradient>
  <linearGradient id="t5" x1="0" y1="0" x2="0" y2="1"><stop offset="0" stop-color="#b6b8ba"/><stop offset="0.5" stop-color="#c3c5c6"/><stop offset="1" stop-color="#cbcccd"/></linearGradient>
  <linearGradient id="t6" x1="0" y1="0" x2="0" y2="1"><stop offset="0" stop-color="#d9d9e3"/><stop offset="1" stop-color="#e8e4ec"/></linearGradient>
  <linearGradient id="t7" x1="0" y1="0" x2="1" y2="0"><stop offset="0" stop-color="#cfcfc6"/><stop offset="0.5" stop-color="#a8a8a0"/><stop offset="1" stop-color="#8a8a82"/></linearGradient>
  <radialGradient id="t7b" cx="0" cy="0.2" r="0.7"><stop offset="0" stop-color="#e4e4da" stop-opacity=".9"/><stop offset="1" stop-color="#e4e4da" stop-opacity="0"/></radialGradient>
  <linearGradient id="t8" x1="0" y1="0" x2="1" y2="1"><stop offset="0" stop-color="#9dbbe2"/><stop offset="1" stop-color="#88aad8"/></linearGradient>
 </defs>
 <!-- thumb1 -->
 <rect x="954.4" y="355.2" width="112" height="111.7" fill="url(#t1)"/>
 <rect x="954.4" y="355.2" width="112" height="111.7" fill="url(#t1c)"/>
 <rect x="954.4" y="355.2" width="112" height="111.7" fill="url(#t1b)"/>
 <ellipse cx="1000" cy="429" rx="16" ry="3.5" fill="#a8a8a2" opacity=".3"/>
 <path d="M987 422.5l48.7-9.5l.3 2l-20 5l-13 5l-15.6 -0.5z" fill="#b52222"/>
 <path d="M1013 408l1.5 12l-2.5 0z" fill="#a01818"/>
 <ellipse cx="1006" cy="421" rx="4.5" ry="4.2" fill="#f0d020"/>
 <path d="M1004 425l-1.5 4 M1011 424l2 4" stroke="#6a3010" stroke-width="1.2"/>
 <!-- thumb2 -->
 <rect x="1075.5" y="355.2" width="112.3" height="111.7" fill="url(#t2)"/>
 <ellipse cx="1136" cy="444" rx="8" ry="11" fill="#c89098" opacity=".14"/>
 <path d="M1110.5 390l3-.5l2 15l-4 1z" fill="#ecebe8"/>
 <path d="M1098 394.8c4-1.3 20-1.7 24 0c-4 1.5-20 1.6-24 0z" fill="#d42a2a"/>
 <path d="M1102 409c6-6 30-4 40-1c8 3 11 10 8 12c-3 2-28 1-38-2c-10-3-12-6-10-9z" fill="#e02828"/>
 <path d="M1091 423c6-3 28-7 41-7.5l1 3.5c-12 2-28 5-41 5.5z" fill="#f4f2ee"/>
 <path d="M1142 412c6-1 17-1.5 23-1.3l-1 2.5c-6 1-15 1.5-21 1.3z" fill="#f4f2ee"/>
 <path d="M1153 402l6 24" stroke="#9a9a9a" stroke-width="1.2"/>
 <circle cx="1122.5" cy="429" r="2" fill="#222"/><circle cx="1141" cy="426.5" r="2" fill="#222"/>
 <!-- thumb3 -->
 <rect x="954.4" y="476.2" width="112" height="112" fill="url(#t3)"/>
 <path d="M964.3 557.7l62-12.4l30.5 15.3l-82 25.7z" fill="#8d8d8d" stroke="#777" stroke-width="1.5"/>
 <path d="M969 558l56-11l25 13l-74 23z" fill="#959595"/>
 <path d="M975 556c5-1 12-2 20-3 M978 563c8-1 15-3 22-4 M985 574c10-2 20-5 30-8" stroke="#808080" stroke-width="1.5"/>
 <!-- thumb4 -->
 <clipPath id="c4"><rect x="1075.5" y="476.2" width="112.3" height="112"/></clipPath>
 <rect x="1075.5" y="476.2" width="112.3" height="112" fill="url(#t4)"/>
 <g clip-path="url(#c4)">
 <path d="M1075.5 512l112 42 M1082 588l88-92" stroke="#e8f3fb" stroke-width="0.6" opacity=".8"/>
 <path d="M1092.5 518.5l3.5-1.2l5.5 25l-5 1.2z" fill="#e04848"/>
 <path d="M1093.8 524l3.2-.8l1.3 5l-3.2.8z" fill="#e8c840"/>
 <path d="M1095 529.5l3.2-.8l1.1 3.8l-3.2.8z" fill="#8a78c8"/>
 <path d="M1078 551.5l22-8.5l6 .5l-6 5.5z" fill="#f07a80"/>
 <path d="M1106 541l20-1.5l2 2.5l-20 2z" fill="#f07a80"/>
 <path d="M1144 553l43.8-9v11.5l-40 8z" fill="#f07a80"/>
 <path d="M1160 550l14-3l2.5 10l-14 3z" fill="#f0e078"/>
 <path d="M1176 546.5l11.8-2.5v11.5l-9.5 2z" fill="#9080d0"/>
 <path d="M1072 580l68-24l10 11l-78 25z" fill="#f27880"/>
 <path d="M1072 580l23-8l4.5 13.5l-27.5 8.5z" fill="#f0e078"/>
 <path d="M1095 572l12-4l4.5 13.5l-12 4z" fill="#9080d0"/>
 <path d="M1107 568l14-4.5l4.5 13.5l-14 4.5z" fill="#f0e078"/>
 <path d="M1101 573.5l3 1 M1116 568.5l3 1" stroke="#333" stroke-width="1.5"/>
 <path d="M1098 539c3-3 10-3 16-.5l62 24c8 3 11 9 8 13c-3 4-10 4-16 1l-64-27c-5-2-8-7-6-10.5z" fill="#e43c3c"/>
 <path d="M1110 550l62 24" stroke="#c82828" stroke-width="1" opacity=".5"/>
 </g>
 <!-- thumb5 selected -->
 <rect x="953.8" y="596.9" width="113.6" height="113.3" fill="url(#t5)"/>
 <ellipse cx="1005" cy="690" rx="35" ry="10" fill="#d8b4b4" opacity=".18"/>
 <path d="M959.5 641.5l102 5.5c1 2 0 4-1 5l-101-6c-1-1-1-3 0-4.5z" fill="#e23030"/>
 <path d="M966 642l6 .4v4.4l-6-.4z M978 642.6l7 .4v4.4l-7-.4z M991 643.3l7 .4v4.3l-7-.4z M1022 645l7 .4v4.4l-7-.4z M1036 645.8l7 .4v4.3l-7-.4z M1050 646.5l6 .4v4.3l-6-.4z" fill="#f4f4f4"/>
 <path d="M965 659l88 6c1 2 1 4 0 5l-88-6c-1.5-1-1.5-3.5 0-5z" fill="#e23030"/>
 <path d="M972 659.5l6 .4v5l-6-.4z M985 660.4l7 .4v5l-7-.4z M1024 663l7 .4v5l-7-.4z M1039 664l7 .4v5l-7-.4z" fill="#f4f4f4"/>
 <path d="M1000 652c4-3 12-2 14 2l-2 14c-4 2-12 2-14-2z" fill="#e02828"/>
 <ellipse cx="1006" cy="652" rx="6" ry="3" fill="#8fa0d8"/>
 <circle cx="1001.5" cy="667" r="5.5" fill="#9a9a9a"/>
 <circle cx="1001.5" cy="667" r="2.5" fill="#d8d8d8"/>
 <path d="M1016 636v9" stroke="#d04040" stroke-width="1.5"/>
 <path d="M990 668l-1 9 M1010 668l7 10" stroke="#bbb" stroke-width="0.9"/>
 <ellipse cx="989.6" cy="677" rx="1.3" ry="2.2" fill="#222"/><ellipse cx="1016.7" cy="679.5" rx="1.3" ry="2.2" fill="#222"/>
 <rect x="953.8" y="596.9" width="113.6" height="113.3" fill="none" stroke="#2b5597" stroke-width="2"/>
 <rect x="1048.1" y="601.9" width="14" height="14" rx="3" fill="#2b5597"/>
 <path d="M1051.5 609l2.5 2.5l4.8-5" fill="none" stroke="#fff" stroke-width="1.2" stroke-linecap="round" stroke-linejoin="round"/>
 <!-- thumb6 -->
 <rect x="1075.5" y="597.5" width="112.3" height="111.8" fill="url(#t6)"/>
 <ellipse cx="1140" cy="702" rx="20" ry="5" fill="#f0d8e4" opacity=".6"/>
 <path d="M1138 662l6-12l7 14z M1148 672l20 10l-20-1z M1128 686l-5 13l1-13z M1115 677l11 1l-6 4z" fill="#f8dce8"/>
 <path d="M1116 690c-2-3 0-6 4-8l37-23c4-2 8-1 9 2c1 3-1 5-4 7l-37 23c-4 2-8 1-9-1z" fill="#fae2ec"/>
 <!-- thumb7 -->
 <rect x="954.7" y="718.4" width="111.7" height="58" fill="url(#t7)"/>
 <rect x="954.7" y="718.4" width="111.7" height="58" fill="url(#t7b)"/>
 <!-- thumb8 -->
 <rect x="1075.4" y="718.4" width="112.3" height="58" fill="url(#t8)"/>
 <!-- separator -->
 <rect x="936" y="776.5" width="269" height="28" fill="#f2f2f2"/>
 <path d="M943 777.3h255" stroke="#d6d6d6" stroke-width="1"/>
</svg>
<div class="a" style="left:952.6px;top:787.3px;width:118px;height:30px;border:1px solid #d0d0d0;border-radius:5px;background:#fbfbfb"></div>
<div class="t" style="left:952.6px;width:118px;text-align:center;top:793.5px;font-size:14px;color:#333;-webkit-text-stroke:0.55px #333">Cancel</div>
<div class="a" style="left:1075.4px;top:786.9px;width:119px;height:30px;border-radius:5px;background:#3d6fb0"></div>
<div class="t" style="left:1075.4px;width:119px;text-align:center;top:793.5px;font-size:14px;color:#fff;-webkit-text-stroke:0.5px #fff">Insert (1)</div>
<div class="a" style="left:1204.5px;top:142px;width:1px;height:662px;background:rgba(0,0,0,0.12)"></div>

<!-- images -->
<svg class="a" style="left:660px;top:284px" width="181.5" height="61" viewBox="0 0 181.5 61">
<defs>
<linearGradient id="cg" x1="0" y1="0" x2="0" y2="1"><stop offset="0" stop-color="#f8b848"/><stop offset="0.35" stop-color="#e89030"/><stop offset="0.7" stop-color="#b85a1a"/><stop offset="1" stop-color="#6a2a0e"/></linearGradient>
<radialGradient id="l1"><stop offset="0" stop-color="#fffff0"/><stop offset="0.35" stop-color="#fff0a0" stop-opacity=".95"/><stop offset="1" stop-color="#f8c050" stop-opacity="0"/></radialGradient>
<radialGradient id="rim"><stop offset="0.55" stop-color="#ffe090" stop-opacity="0"/><stop offset="0.75" stop-color="#ffd070" stop-opacity=".9"/><stop offset="1" stop-color="#ffb040" stop-opacity="0"/></radialGradient>
</defs>
<rect width="181.5" height="61" fill="url(#cg)"/>
<ellipse cx="51" cy="2" rx="26" ry="14" fill="url(#l1)"/>
<ellipse cx="98" cy="2" rx="24" ry="13" fill="url(#l1)"/>
<ellipse cx="160" cy="4" rx="22" ry="10" fill="url(#l1)" opacity=".55"/>
<ellipse cx="56.9" cy="30.0" rx="2.7" ry="6.4" transform="rotate(5 56.9 30.0)" fill="#8a3410" opacity=".75"/><ellipse cx="160.9" cy="28.3" rx="3.1" ry="4.8" transform="rotate(2 160.9 28.3)" fill="#b04a18" opacity=".75"/><ellipse cx="105.2" cy="26.7" rx="3.7" ry="4.9" transform="rotate(18 105.2 26.7)" fill="#9a3c12" opacity=".75"/><ellipse cx="101.1" cy="34.3" rx="3.3" ry="4.3" transform="rotate(-10 101.1 34.3)" fill="#8a3410" opacity=".75"/><ellipse cx="24.8" cy="37.0" rx="2.9" ry="6.9" transform="rotate(11 24.8 37.0)" fill="#b04a18" opacity=".75"/><ellipse cx="162.8" cy="26.7" rx="3.6" ry="5.8" transform="rotate(19 162.8 26.7)" fill="#9a3c12" opacity=".75"/><ellipse cx="35.1" cy="21.0" rx="2.4" ry="7.9" transform="rotate(14 35.1 21.0)" fill="#b04a18" opacity=".75"/><ellipse cx="152.6" cy="27.3" rx="3.7" ry="6.3" transform="rotate(4 152.6 27.3)" fill="#b04a18" opacity=".75"/><ellipse cx="160.2" cy="33.0" rx="3.9" ry="7.4" transform="rotate(10 160.2 33.0)" fill="#9a3c12" opacity=".75"/><ellipse cx="70.6" cy="29.9" rx="3.1" ry="4.4" transform="rotate(7 70.6 29.9)" fill="#9a3c12" opacity=".75"/><ellipse cx="173.2" cy="23.9" rx="2.2" ry="5.9" transform="rotate(-21 173.2 23.9)" fill="#b04a18" opacity=".75"/><ellipse cx="144.1" cy="27.0" rx="2.3" ry="5.2" transform="rotate(19 144.1 27.0)" fill="#b04a18" opacity=".75"/><ellipse cx="26.8" cy="31.5" rx="2.1" ry="6.9" transform="rotate(3 26.8 31.5)" fill="#6a2208" opacity=".75"/><ellipse cx="162.9" cy="24.1" rx="2.5" ry="4.1" transform="rotate(-21 162.9 24.1)" fill="#8a3410" opacity=".75"/><ellipse cx="113.0" cy="18.7" rx="2.4" ry="5.6" transform="rotate(-17 113.0 18.7)" fill="#6a2208" opacity=".75"/><ellipse cx="26.6" cy="37.1" rx="2.6" ry="7.8" transform="rotate(-6 26.6 37.1)" fill="#b04a18" opacity=".75"/><ellipse cx="154.8" cy="26.5" rx="3.7" ry="6.7" transform="rotate(6 154.8 26.5)" fill="#8a3410" opacity=".75"/><ellipse cx="165.8" cy="29.2" rx="2.9" ry="6.9" transform="rotate(22 165.8 29.2)" fill="#9a3c12" opacity=".75"/><ellipse cx="87.8" cy="23.7" rx="2.6" ry="5.4" transform="rotate(24 87.8 23.7)" fill="#b04a18" opacity=".75"/><ellipse cx="68.8" cy="26.3" rx="3.2" ry="4.5" transform="rotate(-2 68.8 26.3)" fill="#6a2208" opacity=".75"/><ellipse cx="125.3" cy="25.8" rx="3.4" ry="7.0" transform="rotate(4 125.3 25.8)" fill="#8a3410" opacity=".75"/><ellipse cx="168.0" cy="18.5" rx="2.7" ry="6.5" transform="rotate(5 168.0 18.5)" fill="#6a2208" opacity=".75"/>
<path d="M0 0h9c-2 20-3 40-1 61h-8z" fill="#2a0c04"/>
<path d="M12 61c-1-12 1-25 3-38c1-8 3-15 6-22l5 1c-2 12-3 30-2 59z" fill="#f0a050" opacity=".85"/>
<path d="M20 61c0-8 2-14 5-17c-3-4-3-9 0-12c5-2 10 1 10 6c0 4-2 6-4 8c2 4 3 10 2 15z" fill="#4a1606"/>
<ellipse cx="34" cy="37" rx="6" ry="4.5" fill="#2a0a04"/>
<ellipse cx="72" cy="55" rx="17" ry="15" fill="url(#rim)"/>
<ellipse cx="72" cy="57" rx="12" ry="11" fill="#3a1206"/>
<path d="M100 61c-2-8-1-15 3-20c3 3 5 9 5 20z" fill="#5a1c08"/>
<path d="M110 61c1-10 4-18 9-22l5 3c-3 5-5 11-5 19z" fill="#7a2a0c" opacity=".8"/>
<path d="M128 61c-1-10 1-17 6-22c5 2 8 8 7 14l-2 8z" fill="#4a1606"/>
<path d="M145 61c0-8 2-13 5-16l4 2c-1 5-2 9-2 14z" fill="#f0b060" opacity=".6"/>
<rect x="162" y="34" width="13" height="27" rx="2" fill="#2a0a04"/>
<path d="M176 61v-20l5.5-4v24z" fill="#5a1a06"/>
<path d="M0 61h181.5v-5c-30 2-60-1-90 1s-60 0-91 3z" fill="#3a1004" opacity=".6"/>
</svg>
<svg class="a" style="left:660px;top:384px" width="181" height="122.5" viewBox="0 0 181 122.5">
<defs>
<linearGradient id="sea" x1="0" y1="0" x2="0" y2="1"><stop offset="0" stop-color="#cfe0f0"/><stop offset="0.3" stop-color="#a9c6e6"/><stop offset="1" stop-color="#9dbde2"/></linearGradient>
<linearGradient id="sand" x1="0" y1="0" x2="0" y2="1"><stop offset="0" stop-color="#9a7040"/><stop offset="0.5" stop-color="#b88a52"/><stop offset="1" stop-color="#c9a46c"/></linearGradient>
<linearGradient id="peb" x1="0" y1="0" x2="0" y2="1"><stop offset="0" stop-color="#d8bc86"/><stop offset="1" stop-color="#dcc08c"/></linearGradient>
</defs>
<rect width="181" height="40" fill="url(#sea)"/>
<path d="M0 10c30-3 60 2 90-1s60 1 91-2v6c-30 2-60-1-91 2s-60 0-90 2z" fill="#e8f0f8" opacity=".7"/>
<path d="M0 22c40-2 80 1 181-3v4c-60 3-120 1-181 3z" fill="#dfe9f5" opacity=".6"/>
<path d="M0 14h55l-10 3h-45z" fill="#a88b68" opacity=".8"/>
<path d="M0 28c15 1 25-1 40 1" stroke="#56606a" stroke-width="2" opacity=".6"/>
<path d="M0 36c60-3 120-4 181-5v7h-181z" fill="url(#sand)"/>
<rect y="38" width="181" height="20" fill="url(#sand)"/>
<rect y="56" width="181" height="66.5" fill="url(#peb)"/>
<circle cx="143.3" cy="71.6" r="1.5" fill="#fff3d0"/><circle cx="165.4" cy="84.9" r="1.6" fill="#fff3d0"/><circle cx="111.4" cy="72.2" r="1.1" fill="#c9a670"/><circle cx="171.3" cy="85.3" r="1.8" fill="#fff3d0"/><circle cx="91.1" cy="102.4" r="2.0" fill="#fff3d0"/><circle cx="82.0" cy="61.5" r="1.1" fill="#efd9a8"/><circle cx="121.8" cy="112.6" r="2.1" fill="#efd9a8"/><circle cx="137.9" cy="60.8" r="1.1" fill="#a88a5a"/><circle cx="101.2" cy="69.3" r="0.7" fill="#a88a5a"/><circle cx="115.4" cy="93.1" r="1.1" fill="#f2e2b8"/><circle cx="30.4" cy="80.4" r="0.8" fill="#fff3d0"/><circle cx="56.2" cy="66.8" r="1.2" fill="#fff3d0"/><circle cx="87.4" cy="103.5" r="0.8" fill="#fff3d0"/><circle cx="80.6" cy="118.4" r="1.5" fill="#c9a670"/><circle cx="24.1" cy="103.6" r="1.7" fill="#d9bd88"/><circle cx="60.4" cy="110.6" r="1.7" fill="#a88a5a"/><circle cx="170.4" cy="101.7" r="1.0" fill="#efd9a8"/><circle cx="151.9" cy="84.2" r="0.9" fill="#fff3d0"/><circle cx="52.4" cy="81.3" r="0.9" fill="#f2e2b8"/><circle cx="162.1" cy="77.6" r="0.7" fill="#c9a670"/><circle cx="81.1" cy="65.3" r="0.8" fill="#efd9a8"/><circle cx="103.0" cy="76.7" r="1.2" fill="#f2e2b8"/><circle cx="2.0" cy="122.0" r="2.2" fill="#f2e2b8"/><circle cx="135.3" cy="79.4" r="1.5" fill="#c9a670"/><circle cx="19.7" cy="89.5" r="1.3" fill="#d9bd88"/><circle cx="141.9" cy="78.8" r="1.0" fill="#f2e2b8"/><circle cx="116.7" cy="98.5" r="2.1" fill="#fff3d0"/><circle cx="126.6" cy="100.1" r="0.9" fill="#fff3d0"/><circle cx="5.0" cy="108.0" r="2.1" fill="#c9a670"/><circle cx="66.6" cy="120.1" r="1.8" fill="#fff3d0"/><circle cx="30.5" cy="108.6" r="2.1" fill="#fff3d0"/><circle cx="111.6" cy="82.5" r="1.4" fill="#c9a670"/><circle cx="57.9" cy="81.8" r="1.3" fill="#c9a670"/><circle cx="151.6" cy="74.4" r="0.7" fill="#f2e2b8"/><circle cx="102.6" cy="98.5" r="1.9" fill="#fff3d0"/><circle cx="73.0" cy="61.3" r="0.7" fill="#efd9a8"/><circle cx="90.4" cy="68.2" r="0.8" fill="#b89660"/><circle cx="113.4" cy="67.2" r="0.8" fill="#d9bd88"/><circle cx="80.2" cy="120.6" r="1.1" fill="#f2e2b8"/><circle cx="154.0" cy="88.9" r="1.0" fill="#c9a670"/><circle cx="0.5" cy="112.2" r="2.2" fill="#a88a5a"/><circle cx="92.5" cy="67.2" r="0.6" fill="#f2e2b8"/><circle cx="93.1" cy="85.2" r="1.1" fill="#efd9a8"/><circle cx="1.6" cy="119.7" r="1.2" fill="#fff3d0"/><circle cx="29.8" cy="77.1" r="1.1" fill="#b89660"/><circle cx="122.2" cy="94.6" r="1.4" fill="#b89660"/><circle cx="58.6" cy="87.7" r="1.9" fill="#fff3d0"/><circle cx="156.6" cy="120.8" r="2.6" fill="#b89660"/><circle cx="14.7" cy="110.2" r="2.0" fill="#c9a670"/><circle cx="110.3" cy="77.2" r="1.2" fill="#c9a670"/><circle cx="87.0" cy="99.8" r="1.2" fill="#c9a670"/><circle cx="96.0" cy="98.9" r="2.0" fill="#d9bd88"/><circle cx="122.8" cy="86.9" r="0.8" fill="#fff3d0"/><circle cx="104.8" cy="93.8" r="2.0" fill="#c9a670"/><circle cx="95.9" cy="94.4" r="1.3" fill="#f2e2b8"/><circle cx="41.1" cy="120.5" r="1.3" fill="#fff3d0"/><circle cx="20.3" cy="113.6" r="1.3" fill="#f2e2b8"/><circle cx="33.9" cy="101.2" r="1.8" fill="#d9bd88"/><circle cx="100.3" cy="72.6" r="1.2" fill="#f2e2b8"/><circle cx="133.1" cy="116.6" r="1.8" fill="#a88a5a"/><circle cx="73.9" cy="62.7" r="0.9" fill="#a88a5a"/><circle cx="91.1" cy="90.7" r="1.8" fill="#f2e2b8"/><circle cx="113.4" cy="119.9" r="1.8" fill="#efd9a8"/><circle cx="150.3" cy="83.3" r="0.9" fill="#d9bd88"/><circle cx="101.9" cy="108.0" r="1.1" fill="#a88a5a"/><circle cx="112.0" cy="84.1" r="0.7" fill="#f2e2b8"/><circle cx="2.7" cy="96.3" r="1.1" fill="#c9a670"/><circle cx="21.8" cy="66.7" r="1.4" fill="#f2e2b8"/><circle cx="112.4" cy="114.3" r="1.8" fill="#fff3d0"/><circle cx="157.6" cy="68.8" r="1.3" fill="#c9a670"/><circle cx="145.5" cy="105.5" r="0.9" fill="#c9a670"/><circle cx="22.2" cy="82.1" r="1.5" fill="#c9a670"/><circle cx="130.6" cy="60.8" r="1.0" fill="#f2e2b8"/><circle cx="64.4" cy="79.1" r="1.3" fill="#f2e2b8"/><circle cx="167.5" cy="101.6" r="1.2" fill="#d9bd88"/><circle cx="125.6" cy="59.4" r="1.3" fill="#efd9a8"/><circle cx="20.6" cy="59.4" r="0.6" fill="#a88a5a"/><circle cx="46.8" cy="67.7" r="1.5" fill="#a88a5a"/><circle cx="124.4" cy="82.6" r="0.8" fill="#c9a670"/><circle cx="97.5" cy="102.5" r="2.0" fill="#efd9a8"/><circle cx="2.5" cy="80.1" r="0.8" fill="#b89660"/><circle cx="87.6" cy="60.0" r="1.2" fill="#f2e2b8"/><circle cx="33.0" cy="110.8" r="1.9" fill="#efd9a8"/><circle cx="152.6" cy="120.4" r="2.1" fill="#efd9a8"/><circle cx="71.2" cy="114.3" r="1.9" fill="#f2e2b8"/><circle cx="65.3" cy="92.1" r="1.1" fill="#d9bd88"/><circle cx="106.6" cy="60.8" r="0.6" fill="#c9a670"/><circle cx="131.6" cy="79.4" r="1.2" fill="#c9a670"/><circle cx="56.9" cy="79.6" r="1.2" fill="#d9bd88"/><circle cx="3.7" cy="87.6" r="1.9" fill="#f2e2b8"/><circle cx="114.2" cy="104.9" r="1.0" fill="#efd9a8"/><circle cx="49.5" cy="90.3" r="1.1" fill="#b89660"/><circle cx="103.8" cy="95.7" r="0.9" fill="#fff3d0"/><circle cx="6.2" cy="94.2" r="1.8" fill="#a88a5a"/><circle cx="36.1" cy="85.5" r="1.4" fill="#f2e2b8"/><circle cx="65.7" cy="76.2" r="1.5" fill="#a88a5a"/><circle cx="144.2" cy="67.1" r="0.6" fill="#a88a5a"/><circle cx="61.8" cy="81.4" r="1.6" fill="#d9bd88"/><circle cx="63.4" cy="93.5" r="1.3" fill="#f2e2b8"/><circle cx="127.5" cy="101.3" r="2.0" fill="#a88a5a"/><circle cx="87.1" cy="81.7" r="0.9" fill="#d9bd88"/><circle cx="180.4" cy="67.7" r="0.8" fill="#a88a5a"/><circle cx="121.5" cy="84.1" r="1.1" fill="#a88a5a"/><circle cx="54.7" cy="68.9" r="0.6" fill="#c9a670"/><circle cx="130.3" cy="74.3" r="1.2" fill="#fff3d0"/><circle cx="169.7" cy="80.0" r="1.7" fill="#b89660"/><circle cx="167.4" cy="95.7" r="1.2" fill="#c9a670"/><circle cx="178.7" cy="81.0" r="1.5" fill="#efd9a8"/><circle cx="130.5" cy="117.5" r="2.3" fill="#c9a670"/><circle cx="162.7" cy="75.8" r="0.9" fill="#f2e2b8"/><circle cx="137.3" cy="98.4" r="1.1" fill="#f2e2b8"/><circle cx="39.5" cy="83.8" r="0.9" fill="#b89660"/><circle cx="51.2" cy="90.4" r="0.8" fill="#d9bd88"/><circle cx="132.8" cy="120.1" r="1.9" fill="#f2e2b8"/><circle cx="13.3" cy="110.7" r="1.8" fill="#fff3d0"/><circle cx="24.7" cy="70.1" r="1.1" fill="#f2e2b8"/><circle cx="115.8" cy="117.5" r="1.3" fill="#c9a670"/><circle cx="157.1" cy="59.7" r="0.9" fill="#b89660"/><circle cx="122.9" cy="79.8" r="0.7" fill="#efd9a8"/><circle cx="144.1" cy="63.6" r="1.1" fill="#a88a5a"/><circle cx="89.5" cy="96.6" r="1.1" fill="#efd9a8"/><circle cx="158.1" cy="59.7" r="0.8" fill="#fff3d0"/><circle cx="178.7" cy="61.6" r="1.1" fill="#fff3d0"/><circle cx="151.1" cy="68.1" r="0.6" fill="#d9bd88"/><circle cx="25.8" cy="107.5" r="1.0" fill="#a88a5a"/><circle cx="65.5" cy="80.2" r="1.4" fill="#a88a5a"/><circle cx="100.5" cy="100.4" r="1.6" fill="#c9a670"/><circle cx="41.6" cy="97.9" r="1.9" fill="#efd9a8"/><circle cx="138.2" cy="108.1" r="1.3" fill="#a88a5a"/><circle cx="99.5" cy="103.6" r="1.6" fill="#c9a670"/><circle cx="94.7" cy="118.7" r="1.2" fill="#f2e2b8"/><circle cx="101.0" cy="64.4" r="1.3" fill="#c9a670"/><circle cx="27.3" cy="98.6" r="1.3" fill="#f2e2b8"/><circle cx="169.6" cy="98.3" r="0.9" fill="#b89660"/><circle cx="90.8" cy="93.8" r="1.0" fill="#b89660"/><circle cx="66.2" cy="67.6" r="0.7" fill="#fff3d0"/><circle cx="154.9" cy="108.3" r="1.6" fill="#c9a670"/><circle cx="140.8" cy="73.6" r="1.6" fill="#efd9a8"/><circle cx="38.6" cy="116.8" r="2.4" fill="#efd9a8"/><circle cx="83.3" cy="78.9" r="1.6" fill="#f2e2b8"/><circle cx="119.5" cy="59.0" r="1.2" fill="#efd9a8"/><circle cx="122.0" cy="80.6" r="0.9" fill="#efd9a8"/><circle cx="74.2" cy="117.3" r="2.5" fill="#fff3d0"/><circle cx="155.7" cy="60.0" r="0.5" fill="#fff3d0"/><circle cx="78.5" cy="72.9" r="0.8" fill="#a88a5a"/><circle cx="77.0" cy="76.0" r="1.6" fill="#efd9a8"/><circle cx="39.2" cy="94.7" r="1.0" fill="#a88a5a"/><circle cx="169.0" cy="107.6" r="2.3" fill="#d9bd88"/><circle cx="148.9" cy="76.2" r="1.0" fill="#efd9a8"/><circle cx="157.9" cy="74.1" r="0.9" fill="#b89660"/><circle cx="108.2" cy="87.2" r="1.4" fill="#a88a5a"/><circle cx="38.0" cy="115.0" r="1.5" fill="#a88a5a"/><circle cx="140.1" cy="86.3" r="1.2" fill="#d9bd88"/><circle cx="180.1" cy="77.2" r="0.7" fill="#f2e2b8"/><circle cx="27.5" cy="116.9" r="1.1" fill="#c9a670"/><circle cx="27.3" cy="105.5" r="1.0" fill="#d9bd88"/><circle cx="84.1" cy="83.6" r="1.2" fill="#fff3d0"/><circle cx="166.2" cy="104.2" r="2.1" fill="#f2e2b8"/><circle cx="105.9" cy="71.0" r="1.2" fill="#f2e2b8"/><circle cx="6.9" cy="90.6" r="1.0" fill="#efd9a8"/><circle cx="126.4" cy="105.0" r="0.9" fill="#c9a670"/><circle cx="11.7" cy="65.1" r="1.4" fill="#d9bd88"/><circle cx="95.1" cy="58.2" r="0.7" fill="#b89660"/><circle cx="26.8" cy="105.6" r="1.6" fill="#f2e2b8"/><circle cx="95.9" cy="112.2" r="2.4" fill="#f2e2b8"/><circle cx="63.2" cy="71.9" r="1.6" fill="#d9bd88"/><circle cx="132.4" cy="75.6" r="0.8" fill="#c9a670"/><circle cx="48.7" cy="120.3" r="1.3" fill="#f2e2b8"/><circle cx="73.9" cy="93.9" r="1.2" fill="#f2e2b8"/><circle cx="59.0" cy="60.7" r="0.9" fill="#c9a670"/><circle cx="99.3" cy="102.5" r="2.2" fill="#a88a5a"/><circle cx="134.9" cy="75.3" r="1.1" fill="#b89660"/><circle cx="75.9" cy="120.8" r="1.6" fill="#efd9a8"/><circle cx="159.6" cy="109.8" r="2.2" fill="#fff3d0"/><circle cx="1.0" cy="97.2" r="2.0" fill="#c9a670"/><circle cx="125.6" cy="105.1" r="2.3" fill="#a88a5a"/><circle cx="35.9" cy="65.5" r="1.3" fill="#a88a5a"/><circle cx="6.1" cy="104.2" r="1.4" fill="#b89660"/><circle cx="58.7" cy="99.7" r="1.6" fill="#c9a670"/><circle cx="82.4" cy="95.3" r="1.4" fill="#fff3d0"/><circle cx="154.5" cy="90.9" r="1.5" fill="#efd9a8"/><circle cx="42.4" cy="98.6" r="1.8" fill="#efd9a8"/><circle cx="64.3" cy="62.1" r="1.4" fill="#c9a670"/><circle cx="110.9" cy="101.7" r="1.3" fill="#fff3d0"/><circle cx="144.3" cy="100.8" r="2.1" fill="#a88a5a"/><circle cx="48.0" cy="116.6" r="1.7" fill="#fff3d0"/><circle cx="62.9" cy="96.0" r="1.5" fill="#d9bd88"/><circle cx="11.9" cy="106.8" r="1.4" fill="#d9bd88"/><circle cx="95.5" cy="110.5" r="1.2" fill="#d9bd88"/><circle cx="27.6" cy="100.7" r="1.0" fill="#a88a5a"/><circle cx="154.9" cy="100.1" r="2.1" fill="#c9a670"/><circle cx="69.0" cy="111.7" r="2.1" fill="#f2e2b8"/><circle cx="74.2" cy="103.3" r="1.4" fill="#c9a670"/><circle cx="64.6" cy="109.8" r="1.7" fill="#efd9a8"/><circle cx="119.9" cy="75.7" r="0.9" fill="#efd9a8"/><circle cx="125.8" cy="87.0" r="1.3" fill="#a88a5a"/><circle cx="31.6" cy="91.4" r="0.7" fill="#d9bd88"/><circle cx="66.4" cy="91.6" r="1.0" fill="#c9a670"/><circle cx="94.7" cy="109.7" r="1.3" fill="#b89660"/><circle cx="36.4" cy="94.8" r="0.8" fill="#d9bd88"/><circle cx="55.5" cy="93.1" r="1.9" fill="#c9a670"/><circle cx="43.8" cy="111.8" r="1.0" fill="#fff3d0"/><circle cx="89.3" cy="63.7" r="0.6" fill="#a88a5a"/><circle cx="52.6" cy="108.4" r="2.2" fill="#fff3d0"/><circle cx="80.1" cy="81.7" r="1.5" fill="#c9a670"/><circle cx="175.5" cy="85.8" r="1.4" fill="#c9a670"/><circle cx="63.8" cy="82.9" r="1.3" fill="#b89660"/><circle cx="34.7" cy="120.7" r="2.1" fill="#c9a670"/><circle cx="11.5" cy="71.1" r="1.4" fill="#f2e2b8"/><circle cx="136.8" cy="82.5" r="1.3" fill="#efd9a8"/><circle cx="169.4" cy="99.5" r="1.9" fill="#f2e2b8"/><circle cx="107.3" cy="87.8" r="1.3" fill="#a88a5a"/><circle cx="78.9" cy="122.2" r="1.3" fill="#f2e2b8"/><circle cx="79.6" cy="89.7" r="1.4" fill="#a88a5a"/><circle cx="1.7" cy="73.0" r="0.8" fill="#b89660"/><circle cx="7.3" cy="101.8" r="1.6" fill="#a88a5a"/><circle cx="70.1" cy="87.7" r="0.8" fill="#a88a5a"/><circle cx="14.0" cy="110.7" r="1.0" fill="#f2e2b8"/><circle cx="153.5" cy="71.9" r="1.0" fill="#a88a5a"/><circle cx="123.3" cy="103.9" r="1.5" fill="#f2e2b8"/><circle cx="99.6" cy="106.2" r="2.1" fill="#d9bd88"/><circle cx="180.7" cy="110.7" r="2.2" fill="#d9bd88"/><circle cx="58.0" cy="70.3" r="1.6" fill="#d9bd88"/><circle cx="179.0" cy="75.7" r="0.9" fill="#c9a670"/><circle cx="69.5" cy="100.8" r="1.2" fill="#efd9a8"/><circle cx="92.5" cy="85.1" r="0.7" fill="#c9a670"/><circle cx="45.0" cy="82.5" r="1.2" fill="#b89660"/><circle cx="46.5" cy="71.0" r="0.6" fill="#b89660"/><circle cx="118.1" cy="118.1" r="2.0" fill="#fff3d0"/><circle cx="105.7" cy="81.6" r="1.6" fill="#d9bd88"/><circle cx="82.6" cy="103.6" r="1.8" fill="#fff3d0"/><circle cx="56.9" cy="92.4" r="1.3" fill="#b89660"/><circle cx="149.0" cy="60.3" r="0.7" fill="#efd9a8"/><circle cx="52.8" cy="103.8" r="2.0" fill="#b89660"/><circle cx="110.5" cy="84.2" r="1.5" fill="#d9bd88"/><circle cx="158.9" cy="61.7" r="0.9" fill="#fff3d0"/><circle cx="22.5" cy="66.8" r="1.4" fill="#a88a5a"/><circle cx="107.9" cy="69.6" r="1.5" fill="#b89660"/><circle cx="133.4" cy="68.6" r="0.8" fill="#fff3d0"/><circle cx="122.2" cy="77.0" r="0.9" fill="#a88a5a"/><circle cx="28.8" cy="108.2" r="1.9" fill="#b89660"/><circle cx="18.3" cy="64.1" r="1.2" fill="#f2e2b8"/><circle cx="75.1" cy="100.5" r="1.2" fill="#efd9a8"/><circle cx="124.2" cy="68.0" r="0.6" fill="#fff3d0"/><circle cx="24.1" cy="68.3" r="1.0" fill="#a88a5a"/><circle cx="42.1" cy="95.5" r="1.2" fill="#b89660"/><circle cx="130.2" cy="78.0" r="0.9" fill="#b89660"/><circle cx="152.3" cy="67.8" r="1.3" fill="#d9bd88"/><circle cx="70.9" cy="60.1" r="0.8" fill="#fff3d0"/><circle cx="52.7" cy="100.2" r="1.8" fill="#d9bd88"/><circle cx="84.1" cy="105.0" r="1.5" fill="#fff3d0"/><circle cx="72.6" cy="60.5" r="0.8" fill="#fff3d0"/><circle cx="167.1" cy="122.3" r="2.5" fill="#b89660"/><circle cx="13.2" cy="89.6" r="0.7" fill="#a88a5a"/><circle cx="89.9" cy="118.0" r="1.1" fill="#efd9a8"/><circle cx="50.7" cy="77.5" r="1.3" fill="#a88a5a"/><circle cx="16.0" cy="67.0" r="0.8" fill="#a88a5a"/><circle cx="153.0" cy="72.7" r="1.5" fill="#f2e2b8"/><circle cx="105.0" cy="64.5" r="0.5" fill="#d9bd88"/><circle cx="170.9" cy="100.3" r="0.9" fill="#c9a670"/><circle cx="63.4" cy="89.0" r="1.1" fill="#c9a670"/><circle cx="32.4" cy="108.8" r="1.3" fill="#f2e2b8"/><circle cx="131.0" cy="87.3" r="1.6" fill="#f2e2b8"/><circle cx="142.6" cy="96.4" r="1.4" fill="#f2e2b8"/><circle cx="7.2" cy="95.4" r="1.3" fill="#fff3d0"/><circle cx="23.9" cy="95.3" r="1.2" fill="#c9a670"/><circle cx="131.7" cy="105.4" r="1.4" fill="#fff3d0"/><circle cx="170.4" cy="79.4" r="1.6" fill="#a88a5a"/><circle cx="151.5" cy="77.6" r="0.9" fill="#f2e2b8"/><circle cx="159.1" cy="65.6" r="1.0" fill="#b89660"/><circle cx="97.9" cy="78.9" r="0.9" fill="#b89660"/><circle cx="96.9" cy="90.7" r="1.2" fill="#d9bd88"/><circle cx="51.3" cy="93.8" r="2.0" fill="#d9bd88"/><circle cx="131.5" cy="92.5" r="1.0" fill="#f2e2b8"/><circle cx="2.7" cy="118.8" r="1.7" fill="#a88a5a"/><circle cx="127.0" cy="71.6" r="1.3" fill="#f2e2b8"/><circle cx="135.8" cy="67.9" r="0.8" fill="#f2e2b8"/><circle cx="76.7" cy="98.3" r="0.9" fill="#b89660"/><circle cx="161.2" cy="63.4" r="1.0" fill="#d9bd88"/><circle cx="44.1" cy="108.0" r="1.6" fill="#a88a5a"/><circle cx="11.2" cy="73.9" r="1.2" fill="#f2e2b8"/><circle cx="7.5" cy="97.9" r="1.7" fill="#a88a5a"/><circle cx="55.0" cy="63.4" r="1.2" fill="#b89660"/><circle cx="166.7" cy="58.7" r="1.3" fill="#efd9a8"/><circle cx="142.4" cy="60.1" r="1.2" fill="#d9bd88"/><circle cx="132.8" cy="101.8" r="1.0" fill="#c9a670"/><circle cx="139.4" cy="71.1" r="1.5" fill="#fff3d0"/><circle cx="59.9" cy="121.0" r="2.6" fill="#a88a5a"/><circle cx="159.4" cy="60.4" r="1.0" fill="#c9a670"/><circle cx="164.4" cy="106.5" r="1.8" fill="#d9bd88"/><circle cx="156.9" cy="61.2" r="0.8" fill="#efd9a8"/><circle cx="16.7" cy="104.3" r="1.3" fill="#d9bd88"/><circle cx="145.4" cy="89.8" r="1.7" fill="#efd9a8"/><circle cx="24.4" cy="111.4" r="2.3" fill="#f2e2b8"/><circle cx="134.8" cy="111.7" r="2.1" fill="#b89660"/><circle cx="29.8" cy="82.9" r="1.4" fill="#a88a5a"/><circle cx="92.8" cy="106.2" r="1.7" fill="#fff3d0"/><circle cx="171.2" cy="65.5" r="1.4" fill="#a88a5a"/><circle cx="145.2" cy="106.4" r="2.1" fill="#d9bd88"/><circle cx="35.8" cy="87.5" r="1.0" fill="#efd9a8"/><circle cx="104.1" cy="118.2" r="2.4" fill="#f2e2b8"/><circle cx="71.0" cy="108.6" r="2.1" fill="#fff3d0"/><circle cx="140.1" cy="80.1" r="1.1" fill="#f2e2b8"/><circle cx="41.3" cy="101.3" r="1.9" fill="#fff3d0"/><circle cx="107.7" cy="111.9" r="2.1" fill="#f2e2b8"/><circle cx="54.4" cy="96.9" r="2.1" fill="#a88a5a"/><circle cx="86.0" cy="84.5" r="1.0" fill="#d9bd88"/><circle cx="60.7" cy="71.8" r="0.9" fill="#a88a5a"/><circle cx="84.3" cy="60.1" r="0.8" fill="#c9a670"/><circle cx="33.9" cy="115.4" r="1.6" fill="#b89660"/><circle cx="146.1" cy="65.8" r="1.2" fill="#f2e2b8"/><circle cx="68.0" cy="115.8" r="1.5" fill="#c9a670"/><circle cx="173.3" cy="81.4" r="0.9" fill="#a88a5a"/><circle cx="110.5" cy="115.7" r="1.5" fill="#efd9a8"/><circle cx="57.6" cy="114.5" r="2.2" fill="#b89660"/><circle cx="34.3" cy="111.6" r="1.1" fill="#b89660"/><circle cx="1.6" cy="113.1" r="1.1" fill="#d9bd88"/><circle cx="82.3" cy="110.2" r="1.3" fill="#c9a670"/><circle cx="122.4" cy="121.5" r="2.2" fill="#a88a5a"/><circle cx="93.0" cy="82.3" r="1.7" fill="#c9a670"/><circle cx="120.6" cy="62.9" r="1.1" fill="#efd9a8"/><circle cx="48.2" cy="77.1" r="1.0" fill="#fff3d0"/><circle cx="114.4" cy="82.2" r="1.3" fill="#fff3d0"/><circle cx="10.8" cy="100.2" r="1.5" fill="#fff3d0"/><circle cx="176.7" cy="61.7" r="1.2" fill="#fff3d0"/><circle cx="21.5" cy="82.3" r="1.0" fill="#b89660"/><circle cx="161.3" cy="105.0" r="1.9" fill="#f2e2b8"/><circle cx="171.6" cy="89.1" r="0.7" fill="#c9a670"/><circle cx="26.2" cy="95.9" r="1.5" fill="#f2e2b8"/><circle cx="180.6" cy="69.2" r="1.1" fill="#c9a670"/><circle cx="113.5" cy="73.6" r="1.4" fill="#f2e2b8"/><circle cx="76.1" cy="121.1" r="2.0" fill="#a88a5a"/><circle cx="172.0" cy="99.2" r="1.5" fill="#fff3d0"/><circle cx="65.2" cy="116.2" r="1.4" fill="#a88a5a"/><circle cx="104.1" cy="111.3" r="2.1" fill="#c9a670"/><circle cx="161.8" cy="71.0" r="1.4" fill="#f2e2b8"/><circle cx="29.3" cy="105.6" r="1.1" fill="#c9a670"/><circle cx="164.3" cy="95.9" r="2.1" fill="#a88a5a"/><circle cx="175.0" cy="120.1" r="1.3" fill="#c9a670"/><circle cx="161.3" cy="88.6" r="1.5" fill="#efd9a8"/><circle cx="73.0" cy="102.0" r="1.3" fill="#c9a670"/><circle cx="69.8" cy="120.2" r="1.4" fill="#d9bd88"/><circle cx="167.6" cy="98.2" r="1.5" fill="#efd9a8"/><circle cx="115.3" cy="108.2" r="1.3" fill="#d9bd88"/><circle cx="50.5" cy="92.6" r="1.6" fill="#a88a5a"/><circle cx="121.4" cy="106.5" r="1.3" fill="#c9a670"/><circle cx="129.8" cy="83.5" r="1.6" fill="#a88a5a"/><circle cx="114.1" cy="74.8" r="1.4" fill="#f2e2b8"/><circle cx="96.3" cy="103.0" r="1.3" fill="#b89660"/><circle cx="170.1" cy="75.1" r="0.9" fill="#f2e2b8"/><circle cx="158.5" cy="64.2" r="1.1" fill="#a88a5a"/><circle cx="74.7" cy="110.1" r="1.0" fill="#c9a670"/><circle cx="30.0" cy="69.4" r="1.3" fill="#fff3d0"/><circle cx="125.3" cy="108.0" r="1.4" fill="#a88a5a"/><circle cx="134.4" cy="80.0" r="1.1" fill="#a88a5a"/><circle cx="61.0" cy="113.8" r="2.0" fill="#d9bd88"/><circle cx="96.3" cy="91.6" r="1.6" fill="#c9a670"/><circle cx="24.2" cy="79.8" r="0.7" fill="#efd9a8"/><circle cx="12.1" cy="58.2" r="1.0" fill="#d9bd88"/><circle cx="104.6" cy="84.0" r="1.4" fill="#c9a670"/><circle cx="142.1" cy="101.8" r="2.0" fill="#d9bd88"/><circle cx="27.4" cy="101.3" r="1.9" fill="#b89660"/><circle cx="22.6" cy="76.2" r="0.7" fill="#a88a5a"/><circle cx="168.4" cy="82.6" r="1.0" fill="#fff3d0"/><circle cx="127.4" cy="103.4" r="1.7" fill="#c9a670"/><circle cx="128.9" cy="107.8" r="1.8" fill="#b89660"/><circle cx="49.4" cy="71.7" r="0.8" fill="#f2e2b8"/><circle cx="65.1" cy="94.7" r="1.9" fill="#f2e2b8"/><circle cx="65.1" cy="103.1" r="0.9" fill="#a88a5a"/><circle cx="172.7" cy="72.1" r="1.1" fill="#a88a5a"/><circle cx="25.1" cy="75.7" r="0.7" fill="#efd9a8"/><circle cx="106.8" cy="96.4" r="0.8" fill="#b89660"/><circle cx="149.8" cy="65.1" r="0.7" fill="#fff3d0"/><circle cx="169.5" cy="120.2" r="1.8" fill="#d9bd88"/><circle cx="39.4" cy="109.2" r="1.2" fill="#a88a5a"/><circle cx="176.3" cy="95.3" r="1.7" fill="#d9bd88"/><circle cx="140.8" cy="59.8" r="0.9" fill="#efd9a8"/><circle cx="67.8" cy="119.6" r="1.4" fill="#f2e2b8"/><circle cx="105.9" cy="83.8" r="1.3" fill="#b89660"/><circle cx="74.0" cy="101.0" r="2.0" fill="#f2e2b8"/><circle cx="145.6" cy="120.0" r="1.5" fill="#c9a670"/><circle cx="12.9" cy="88.8" r="0.9" fill="#efd9a8"/><circle cx="175.4" cy="114.8" r="1.9" fill="#d9bd88"/><circle cx="61.8" cy="70.2" r="1.0" fill="#c9a670"/><circle cx="137.5" cy="62.9" r="1.3" fill="#f2e2b8"/><circle cx="79.4" cy="70.8" r="1.3" fill="#d9bd88"/><circle cx="140.0" cy="71.0" r="1.3" fill="#a88a5a"/><circle cx="176.1" cy="106.2" r="2.2" fill="#fff3d0"/><circle cx="130.8" cy="104.4" r="0.9" fill="#d9bd88"/><circle cx="75.6" cy="111.9" r="1.9" fill="#fff3d0"/><circle cx="114.1" cy="75.0" r="1.0" fill="#d9bd88"/><circle cx="102.3" cy="78.4" r="1.0" fill="#f2e2b8"/><circle cx="8.0" cy="69.3" r="0.9" fill="#f2e2b8"/><circle cx="145.6" cy="87.4" r="0.8" fill="#f2e2b8"/><circle cx="155.3" cy="81.5" r="1.7" fill="#efd9a8"/><circle cx="179.3" cy="116.8" r="2.2" fill="#efd9a8"/><circle cx="162.4" cy="121.0" r="2.4" fill="#b89660"/><circle cx="102.0" cy="90.8" r="1.0" fill="#c9a670"/><circle cx="118.8" cy="118.5" r="1.2" fill="#c9a670"/><circle cx="171.1" cy="121.2" r="1.7" fill="#fff3d0"/><circle cx="131.4" cy="68.4" r="1.4" fill="#efd9a8"/><circle cx="24.2" cy="58.8" r="0.7" fill="#b89660"/><circle cx="96.2" cy="59.8" r="1.2" fill="#a88a5a"/><circle cx="15.6" cy="108.3" r="1.2" fill="#b89660"/><circle cx="96.7" cy="62.6" r="0.8" fill="#b89660"/><circle cx="101.3" cy="87.8" r="1.6" fill="#d9bd88"/><circle cx="1.3" cy="71.2" r="0.9" fill="#f2e2b8"/><circle cx="17.7" cy="114.6" r="2.4" fill="#efd9a8"/><circle cx="82.6" cy="95.8" r="1.6" fill="#fff3d0"/><circle cx="165.4" cy="107.1" r="1.7" fill="#fff3d0"/><circle cx="9.7" cy="88.4" r="1.2" fill="#fff3d0"/><circle cx="156.0" cy="121.9" r="2.2" fill="#efd9a8"/><circle cx="125.3" cy="88.4" r="0.9" fill="#efd9a8"/><circle cx="108.4" cy="62.0" r="0.7" fill="#d9bd88"/><circle cx="0.9" cy="94.5" r="1.7" fill="#d9bd88"/><circle cx="114.7" cy="105.8" r="0.9" fill="#f2e2b8"/><circle cx="164.3" cy="70.9" r="0.6" fill="#efd9a8"/><circle cx="8.8" cy="73.5" r="1.6" fill="#d9bd88"/><circle cx="140.3" cy="60.9" r="1.0" fill="#b89660"/><circle cx="166.4" cy="75.0" r="0.8" fill="#f2e2b8"/><circle cx="86.7" cy="119.7" r="2.2" fill="#fff3d0"/><circle cx="17.5" cy="67.2" r="1.1" fill="#b89660"/><circle cx="92.7" cy="64.8" r="1.3" fill="#efd9a8"/><circle cx="165.9" cy="58.1" r="1.2" fill="#b89660"/><circle cx="117.3" cy="63.5" r="1.0" fill="#b89660"/><circle cx="107.6" cy="109.6" r="1.0" fill="#f2e2b8"/><circle cx="119.7" cy="97.7" r="1.4" fill="#fff3d0"/><circle cx="1.4" cy="106.1" r="0.9" fill="#a88a5a"/><circle cx="91.8" cy="112.0" r="1.2" fill="#fff3d0"/><circle cx="117.7" cy="71.4" r="1.0" fill="#f2e2b8"/><circle cx="110.9" cy="63.6" r="1.0" fill="#fff3d0"/><circle cx="17.0" cy="105.1" r="2.1" fill="#a88a5a"/><circle cx="178.0" cy="63.8" r="0.8" fill="#c9a670"/><circle cx="138.0" cy="67.5" r="1.1" fill="#c9a670"/><circle cx="139.2" cy="58.4" r="0.5" fill="#f2e2b8"/><circle cx="123.6" cy="107.5" r="1.2" fill="#efd9a8"/><circle cx="82.5" cy="84.3" r="1.4" fill="#fff3d0"/><circle cx="38.2" cy="106.9" r="2.0" fill="#f2e2b8"/><circle cx="165.2" cy="112.0" r="2.0" fill="#f2e2b8"/><circle cx="121.3" cy="66.7" r="1.4" fill="#a88a5a"/><circle cx="158.9" cy="69.6" r="1.5" fill="#efd9a8"/><circle cx="46.2" cy="66.7" r="1.3" fill="#a88a5a"/><circle cx="63.1" cy="78.9" r="0.7" fill="#efd9a8"/><circle cx="29.5" cy="119.1" r="2.0" fill="#efd9a8"/><circle cx="138.0" cy="112.0" r="2.4" fill="#a88a5a"/><circle cx="59.0" cy="109.8" r="0.9" fill="#b89660"/><circle cx="3.8" cy="72.9" r="1.5" fill="#a88a5a"/><circle cx="59.5" cy="107.7" r="2.0" fill="#c9a670"/><circle cx="143.8" cy="92.3" r="0.9" fill="#a88a5a"/><circle cx="154.1" cy="85.4" r="1.1" fill="#f2e2b8"/><circle cx="97.2" cy="120.3" r="1.2" fill="#b89660"/><circle cx="9.7" cy="100.8" r="1.1" fill="#efd9a8"/><circle cx="168.6" cy="91.5" r="1.7" fill="#fff3d0"/><circle cx="16.2" cy="71.7" r="0.9" fill="#f2e2b8"/><circle cx="129.3" cy="85.8" r="0.8" fill="#d9bd88"/><circle cx="110.5" cy="97.6" r="1.0" fill="#fff3d0"/><circle cx="51.5" cy="83.2" r="1.1" fill="#f2e2b8"/><circle cx="16.6" cy="113.9" r="1.9" fill="#b89660"/><circle cx="174.5" cy="99.5" r="1.6" fill="#fff3d0"/><circle cx="12.6" cy="62.4" r="0.9" fill="#f2e2b8"/><circle cx="11.6" cy="62.3" r="0.5" fill="#c9a670"/><circle cx="13.5" cy="93.9" r="1.7" fill="#fff3d0"/><circle cx="175.5" cy="102.3" r="1.2" fill="#a88a5a"/><circle cx="81.5" cy="116.0" r="1.3" fill="#efd9a8"/><circle cx="74.0" cy="102.5" r="1.4" fill="#fff3d0"/><circle cx="158.9" cy="113.6" r="1.6" fill="#c9a670"/><circle cx="150.6" cy="60.0" r="1.2" fill="#d9bd88"/><circle cx="19.3" cy="71.5" r="0.9" fill="#c9a670"/><circle cx="50.3" cy="58.6" r="0.6" fill="#f2e2b8"/><circle cx="28.6" cy="100.5" r="1.6" fill="#fff3d0"/><circle cx="47.6" cy="60.9" r="0.9" fill="#a88a5a"/><circle cx="177.9" cy="82.7" r="1.4" fill="#b89660"/><circle cx="105.6" cy="62.0" r="0.8" fill="#c9a670"/><circle cx="154.3" cy="66.4" r="1.5" fill="#c9a670"/><circle cx="98.1" cy="69.4" r="0.9" fill="#fff3d0"/><circle cx="45.5" cy="81.6" r="1.3" fill="#f2e2b8"/><circle cx="157.9" cy="116.6" r="1.2" fill="#a88a5a"/><circle cx="68.9" cy="107.3" r="1.2" fill="#d9bd88"/><circle cx="160.5" cy="107.2" r="2.1" fill="#d9bd88"/><circle cx="116.1" cy="88.4" r="1.8" fill="#f2e2b8"/><circle cx="18.0" cy="82.3" r="1.1" fill="#c9a670"/><circle cx="5.3" cy="86.3" r="0.8" fill="#efd9a8"/><circle cx="100.5" cy="89.7" r="1.2" fill="#efd9a8"/><circle cx="86.8" cy="69.2" r="0.8" fill="#efd9a8"/><circle cx="11.0" cy="70.3" r="0.8" fill="#efd9a8"/><circle cx="84.9" cy="118.4" r="1.8" fill="#f2e2b8"/><circle cx="92.2" cy="89.2" r="1.0" fill="#b89660"/><circle cx="157.5" cy="120.1" r="2.4" fill="#f2e2b8"/><circle cx="10.8" cy="85.9" r="0.8" fill="#b89660"/><circle cx="30.9" cy="113.8" r="1.2" fill="#f2e2b8"/><circle cx="86.4" cy="88.2" r="1.9" fill="#a88a5a"/><circle cx="132.4" cy="62.8" r="0.9" fill="#c9a670"/><circle cx="17.7" cy="76.1" r="1.5" fill="#f2e2b8"/><circle cx="21.7" cy="121.5" r="1.8" fill="#d9bd88"/><circle cx="92.2" cy="98.5" r="1.9" fill="#f2e2b8"/><circle cx="116.5" cy="102.3" r="0.9" fill="#fff3d0"/><circle cx="42.4" cy="90.2" r="1.5" fill="#fff3d0"/><circle cx="66.0" cy="83.0" r="1.7" fill="#c9a670"/><circle cx="134.0" cy="113.3" r="1.5" fill="#fff3d0"/><circle cx="32.9" cy="72.6" r="1.2" fill="#fff3d0"/>
<g fill="#2e3a3e" opacity=".92">
<path d="M60 122.5c0-6 1-12 4-15c-2-2-3.5-5-3-8c.6-2 2-1.5 2.6 0.5c.6 2 1.5 4 3 5c1-1 2.5-2 4-2c-1.5-3-1-7 2.5-8c3.5-.5 5 3 4 6.5c2 1 3 3 3.5 6c.5 5 .5 10 1 15z"/>
<path d="M88 122.5c0-6 1-10 2-13c-2-5-4-13-3-19c.3-2 2-2 2.4 0c.8 5 2 9 4.5 12c.5-1 1.5-2 2.5-2.5c-1-3 0-7 3.5-7.3c3.5-.2 4.5 3.5 3.5 6.5c2 1 3 4 3.3 8c.3 5 .5 10 .8 15.3z"/>
<path d="M110 122.5c1-4 3-7 5-7.5c.5-2 1-5 2-6c1 1 .8 4 .5 6c2 1 3 4 3.5 7.5z"/>
<path d="M160 122.5c2-3 5-5 8-5s6 2 8 1l5-3v7z" opacity=".7"/>
</g>
</svg>
<svg class="a" style="left:660px;top:545px" width="181" height="139" viewBox="0 0 181 139"><rect width="181" height="139" fill="#2a170d"/><ellipse cx="-0.2" cy="0.2" rx="4.2" ry="2.8" transform="rotate(91 -0.2 0.2)" fill="#86573a"/><ellipse cx="4.8" cy="1.2" rx="3.8" ry="2.6" transform="rotate(34 4.8 1.2)" fill="#4e2d1a"/><ellipse cx="11.8" cy="-1.6" rx="4.1" ry="2.9" transform="rotate(8 11.8 -1.6)" fill="#4e2d1a"/><ellipse cx="21.5" cy="0.6" rx="3.9" ry="2.4" transform="rotate(3 21.5 0.6)" fill="#86573a"/><ellipse cx="23.4" cy="-1.9" rx="4.2" ry="2.9" transform="rotate(140 23.4 -1.9)" fill="#7a4a2c"/><ellipse cx="31.7" cy="1.4" rx="3.8" ry="2.7" transform="rotate(90 31.7 1.4)" fill="#693d22"/><ellipse cx="36.3" cy="0.6" rx="3.7" ry="2.5" transform="rotate(168 36.3 0.6)" fill="#5e3822"/><ellipse cx="45.8" cy="-0.7" rx="3.5" ry="2.3" transform="rotate(13 45.8 -0.7)" fill="#925f3e"/><ellipse cx="49.2" cy="-1.6" rx="3.6" ry="2.2" transform="rotate(3 49.2 -1.6)" fill="#693d22"/><ellipse cx="55.1" cy="-1.2" rx="4.2" ry="2.8" transform="rotate(176 55.1 -1.2)" fill="#4e2d1a"/><ellipse cx="63.6" cy="0.3" rx="3.5" ry="2.5" transform="rotate(61 63.6 0.3)" fill="#7a4a2c"/><ellipse cx="69.6" cy="1.9" rx="4.1" ry="2.5" transform="rotate(44 69.6 1.9)" fill="#5e3822"/><ellipse cx="74.4" cy="-0.1" rx="3.8" ry="2.7" transform="rotate(34 74.4 -0.1)" fill="#86573a"/><ellipse cx="81.7" cy="0.9" rx="3.4" ry="2.4" transform="rotate(21 81.7 0.9)" fill="#4e2d1a"/><ellipse cx="92.1" cy="-2.0" rx="4.2" ry="3.1" transform="rotate(107 92.1 -2.0)" fill="#5e3822"/><ellipse cx="94.6" cy="-0.4" rx="4.2" ry="2.9" transform="rotate(18 94.6 -0.4)" fill="#6b4026"/><ellipse cx="101.0" cy="-1.0" rx="4.1" ry="2.6" transform="rotate(53 101.0 -1.0)" fill="#5e3822"/><ellipse cx="106.7" cy="-1.2" rx="3.9" ry="2.4" transform="rotate(66 106.7 -1.2)" fill="#86573a"/><ellipse cx="115.0" cy="1.8" rx="3.8" ry="2.6" transform="rotate(156 115.0 1.8)" fill="#6b4026"/><ellipse cx="122.2" cy="-0.8" rx="3.5" ry="2.4" transform="rotate(131 122.2 -0.8)" fill="#6b4026"/><ellipse cx="129.2" cy="1.8" rx="3.5" ry="2.6" transform="rotate(159 129.2 1.8)" fill="#86573a"/><ellipse cx="132.3" cy="-1.8" rx="3.4" ry="2.3" transform="rotate(46 132.3 -1.8)" fill="#693d22"/><ellipse cx="141.8" cy="-1.0" rx="4.1" ry="2.8" transform="rotate(53 141.8 -1.0)" fill="#6b4026"/><ellipse cx="149.3" cy="1.9" rx="3.4" ry="2.3" transform="rotate(118 149.3 1.9)" fill="#86573a"/><ellipse cx="154.2" cy="-0.9" rx="4.2" ry="2.7" transform="rotate(3 154.2 -0.9)" fill="#7a4a2c"/><ellipse cx="159.6" cy="-1.0" rx="3.3" ry="2.1" transform="rotate(96 159.6 -1.0)" fill="#6b4026"/><ellipse cx="164.4" cy="-1.4" rx="3.8" ry="2.4" transform="rotate(132 164.4 -1.4)" fill="#86573a"/><ellipse cx="173.2" cy="-1.4" rx="3.3" ry="2.0" transform="rotate(164 173.2 -1.4)" fill="#693d22"/><ellipse cx="178.3" cy="-1.9" rx="3.9" ry="2.4" transform="rotate(12 178.3 -1.9)" fill="#7a4a2c"/><ellipse cx="184.7" cy="2.0" rx="3.4" ry="2.3" transform="rotate(133 184.7 2.0)" fill="#693d22"/><ellipse cx="4.2" cy="4.5" rx="4.3" ry="2.8" transform="rotate(15 4.2 4.5)" fill="#4e2d1a"/><ellipse cx="11.4" cy="7.5" rx="3.7" ry="2.7" transform="rotate(155 11.4 7.5)" fill="#86573a"/><ellipse cx="13.4" cy="6.6" rx="3.7" ry="2.2" transform="rotate(13 13.4 6.6)" fill="#5e3822"/><ellipse cx="22.9" cy="8.0" rx="4.2" ry="3.0" transform="rotate(70 22.9 8.0)" fill="#693d22"/><ellipse cx="29.6" cy="5.8" rx="3.8" ry="2.6" transform="rotate(93 29.6 5.8)" fill="#86573a"/><ellipse cx="32.6" cy="6.4" rx="3.8" ry="2.4" transform="rotate(126 32.6 6.4)" fill="#4e2d1a"/><ellipse cx="42.8" cy="6.6" rx="3.8" ry="2.8" transform="rotate(66 42.8 6.6)" fill="#6b4026"/><ellipse cx="48.7" cy="4.8" rx="3.5" ry="2.6" transform="rotate(119 48.7 4.8)" fill="#4e2d1a"/><ellipse cx="54.2" cy="5.0" rx="3.7" ry="2.4" transform="rotate(114 54.2 5.0)" fill="#925f3e"/><ellipse cx="62.1" cy="7.7" rx="4.2" ry="2.7" transform="rotate(105 62.1 7.7)" fill="#7a4a2c"/><ellipse cx="65.5" cy="4.5" rx="3.7" ry="2.7" transform="rotate(7 65.5 4.5)" fill="#5e3822"/><ellipse cx="75.7" cy="5.1" rx="3.5" ry="2.3" transform="rotate(50 75.7 5.1)" fill="#6b4026"/><ellipse cx="81.5" cy="5.5" rx="3.8" ry="2.7" transform="rotate(129 81.5 5.5)" fill="#925f3e"/><ellipse cx="88.6" cy="5.8" rx="3.4" ry="2.0" transform="rotate(157 88.6 5.8)" fill="#5e3822"/><ellipse cx="93.5" cy="5.1" rx="3.7" ry="2.5" transform="rotate(102 93.5 5.1)" fill="#693d22"/><ellipse cx="97.2" cy="5.8" rx="3.3" ry="2.4" transform="rotate(43 97.2 5.8)" fill="#6b4026"/><ellipse cx="106.9" cy="7.9" rx="3.4" ry="2.1" transform="rotate(96 106.9 7.9)" fill="#693d22"/><ellipse cx="113.3" cy="7.8" rx="4.0" ry="2.5" transform="rotate(86 113.3 7.8)" fill="#6b4026"/><ellipse cx="119.3" cy="7.0" rx="3.8" ry="2.3" transform="rotate(41 119.3 7.0)" fill="#925f3e"/><ellipse cx="123.8" cy="6.8" rx="3.8" ry="2.6" transform="rotate(136 123.8 6.8)" fill="#4e2d1a"/><ellipse cx="132.7" cy="6.8" rx="3.5" ry="2.3" transform="rotate(161 132.7 6.8)" fill="#4e2d1a"/><ellipse cx="135.5" cy="5.8" rx="3.9" ry="2.9" transform="rotate(68 135.5 5.8)" fill="#86573a"/><ellipse cx="144.6" cy="6.0" rx="4.1" ry="2.7" transform="rotate(59 144.6 6.0)" fill="#6b4026"/><ellipse cx="148.2" cy="7.5" rx="4.1" ry="3.0" transform="rotate(22 148.2 7.5)" fill="#6b4026"/><ellipse cx="158.6" cy="7.9" rx="4.3" ry="2.9" transform="rotate(142 158.6 7.9)" fill="#7a4a2c"/><ellipse cx="161.8" cy="6.9" rx="3.3" ry="2.2" transform="rotate(7 161.8 6.9)" fill="#7a4a2c"/><ellipse cx="169.7" cy="7.1" rx="3.8" ry="2.3" transform="rotate(146 169.7 7.1)" fill="#5e3822"/><ellipse cx="175.4" cy="4.1" rx="3.8" ry="2.7" transform="rotate(165 175.4 4.1)" fill="#4e2d1a"/><ellipse cx="180.4" cy="6.1" rx="4.0" ry="2.9" transform="rotate(124 180.4 6.1)" fill="#4e2d1a"/><ellipse cx="189.0" cy="6.8" rx="4.1" ry="2.7" transform="rotate(101 189.0 6.8)" fill="#925f3e"/><ellipse cx="1.1" cy="12.6" rx="3.8" ry="2.8" transform="rotate(101 1.1 12.6)" fill="#7a4a2c"/><ellipse cx="7.3" cy="13.8" rx="4.2" ry="2.9" transform="rotate(55 7.3 13.8)" fill="#6b4026"/><ellipse cx="15.1" cy="12.1" rx="3.9" ry="2.4" transform="rotate(96 15.1 12.1)" fill="#86573a"/><ellipse cx="16.7" cy="11.5" rx="3.8" ry="2.3" transform="rotate(165 16.7 11.5)" fill="#86573a"/><ellipse cx="27.1" cy="12.3" rx="3.8" ry="2.7" transform="rotate(12 27.1 12.3)" fill="#86573a"/><ellipse cx="31.8" cy="13.7" rx="4.1" ry="2.7" transform="rotate(44 31.8 13.7)" fill="#4e2d1a"/><ellipse cx="36.5" cy="11.7" rx="4.1" ry="3.0" transform="rotate(86 36.5 11.7)" fill="#7a4a2c"/><ellipse cx="42.8" cy="11.7" rx="3.3" ry="2.1" transform="rotate(126 42.8 11.7)" fill="#5e3822"/><ellipse cx="48.9" cy="10.6" rx="3.3" ry="2.1" transform="rotate(130 48.9 10.6)" fill="#6b4026"/><ellipse cx="58.2" cy="10.4" rx="4.0" ry="2.5" transform="rotate(92 58.2 10.4)" fill="#7a4a2c"/><ellipse cx="65.1" cy="12.8" rx="4.2" ry="2.5" transform="rotate(114 65.1 12.8)" fill="#925f3e"/><ellipse cx="70.5" cy="10.6" rx="3.5" ry="2.4" transform="rotate(115 70.5 10.6)" fill="#86573a"/><ellipse cx="75.4" cy="12.2" rx="3.9" ry="2.4" transform="rotate(165 75.4 12.2)" fill="#693d22"/><ellipse cx="84.8" cy="13.6" rx="3.6" ry="2.3" transform="rotate(166 84.8 13.6)" fill="#6b4026"/><ellipse cx="91.0" cy="10.8" rx="3.4" ry="2.5" transform="rotate(24 91.0 10.8)" fill="#5e3822"/><ellipse cx="94.8" cy="10.4" rx="4.1" ry="2.7" transform="rotate(142 94.8 10.4)" fill="#6b4026"/><ellipse cx="100.9" cy="12.5" rx="4.1" ry="2.5" transform="rotate(103 100.9 12.5)" fill="#7a4a2c"/><ellipse cx="110.9" cy="13.9" rx="3.4" ry="2.3" transform="rotate(136 110.9 13.9)" fill="#86573a"/><ellipse cx="117.7" cy="13.3" rx="4.1" ry="2.8" transform="rotate(4 117.7 13.3)" fill="#925f3e"/><ellipse cx="121.9" cy="12.1" rx="3.9" ry="2.4" transform="rotate(33 121.9 12.1)" fill="#6b4026"/><ellipse cx="126.4" cy="10.6" rx="3.6" ry="2.5" transform="rotate(104 126.4 10.6)" fill="#6b4026"/><ellipse cx="136.7" cy="11.8" rx="4.1" ry="2.6" transform="rotate(84 136.7 11.8)" fill="#86573a"/><ellipse cx="140.1" cy="10.8" rx="3.7" ry="2.6" transform="rotate(7 140.1 10.8)" fill="#6b4026"/><ellipse cx="145.6" cy="11.8" rx="4.0" ry="2.7" transform="rotate(35 145.6 11.8)" fill="#6b4026"/><ellipse cx="151.6" cy="13.2" rx="3.6" ry="2.2" transform="rotate(152 151.6 13.2)" fill="#925f3e"/><ellipse cx="162.0" cy="13.8" rx="3.9" ry="2.4" transform="rotate(105 162.0 13.8)" fill="#7a4a2c"/><ellipse cx="167.9" cy="11.0" rx="4.2" ry="3.0" transform="rotate(140 167.9 11.0)" fill="#925f3e"/><ellipse cx="175.0" cy="10.5" rx="3.6" ry="2.5" transform="rotate(67 175.0 10.5)" fill="#4e2d1a"/><ellipse cx="180.5" cy="11.6" rx="4.0" ry="2.5" transform="rotate(62 180.5 11.6)" fill="#4e2d1a"/><ellipse cx="183.6" cy="13.6" rx="4.3" ry="3.2" transform="rotate(9 183.6 13.6)" fill="#7a4a2c"/><ellipse cx="5.2" cy="18.7" rx="3.6" ry="2.5" transform="rotate(103 5.2 18.7)" fill="#86573a"/><ellipse cx="7.3" cy="18.1" rx="3.8" ry="2.4" transform="rotate(22 7.3 18.1)" fill="#4e2d1a"/><ellipse cx="18.2" cy="16.1" rx="3.9" ry="2.8" transform="rotate(46 18.2 16.1)" fill="#4e2d1a"/><ellipse cx="22.2" cy="19.0" rx="3.9" ry="2.4" transform="rotate(47 22.2 19.0)" fill="#7a4a2c"/><ellipse cx="30.6" cy="18.2" rx="3.8" ry="2.8" transform="rotate(102 30.6 18.2)" fill="#5e3822"/><ellipse cx="35.7" cy="19.2" rx="3.4" ry="2.3" transform="rotate(137 35.7 19.2)" fill="#5e3822"/><ellipse cx="40.8" cy="19.8" rx="3.7" ry="2.7" transform="rotate(154 40.8 19.8)" fill="#86573a"/><ellipse cx="48.4" cy="16.2" rx="4.2" ry="2.8" transform="rotate(95 48.4 16.2)" fill="#86573a"/><ellipse cx="53.3" cy="18.1" rx="3.8" ry="2.4" transform="rotate(167 53.3 18.1)" fill="#693d22"/><ellipse cx="61.7" cy="17.2" rx="3.3" ry="2.1" transform="rotate(8 61.7 17.2)" fill="#6b4026"/><ellipse cx="66.5" cy="18.7" rx="3.4" ry="2.2" transform="rotate(72 66.5 18.7)" fill="#86573a"/><ellipse cx="75.8" cy="19.8" rx="3.4" ry="2.5" transform="rotate(77 75.8 19.8)" fill="#4e2d1a"/><ellipse cx="78.6" cy="19.0" rx="3.3" ry="2.1" transform="rotate(146 78.6 19.0)" fill="#4e2d1a"/><ellipse cx="84.4" cy="19.8" rx="3.5" ry="2.5" transform="rotate(9 84.4 19.8)" fill="#4e2d1a"/><ellipse cx="92.4" cy="16.8" rx="3.4" ry="2.3" transform="rotate(22 92.4 16.8)" fill="#4e2d1a"/><ellipse cx="97.2" cy="17.7" rx="3.9" ry="2.7" transform="rotate(123 97.2 17.7)" fill="#7a4a2c"/><ellipse cx="106.8" cy="18.1" rx="4.3" ry="3.2" transform="rotate(132 106.8 18.1)" fill="#6b4026"/><ellipse cx="111.7" cy="18.0" rx="3.6" ry="2.4" transform="rotate(152 111.7 18.0)" fill="#7a4a2c"/><ellipse cx="117.1" cy="18.7" rx="3.9" ry="2.7" transform="rotate(114 117.1 18.7)" fill="#925f3e"/><ellipse cx="123.3" cy="19.8" rx="3.8" ry="2.7" transform="rotate(35 123.3 19.8)" fill="#693d22"/><ellipse cx="128.7" cy="16.2" rx="3.6" ry="2.4" transform="rotate(112 128.7 16.2)" fill="#5e3822"/><ellipse cx="136.0" cy="17.1" rx="4.1" ry="3.0" transform="rotate(29 136.0 17.1)" fill="#6b4026"/><ellipse cx="144.5" cy="17.5" rx="3.8" ry="2.4" transform="rotate(62 144.5 17.5)" fill="#693d22"/><ellipse cx="148.4" cy="19.5" rx="4.1" ry="2.7" transform="rotate(148 148.4 19.5)" fill="#925f3e"/><ellipse cx="157.9" cy="16.9" rx="3.7" ry="2.4" transform="rotate(146 157.9 16.9)" fill="#7a4a2c"/><ellipse cx="161.3" cy="19.3" rx="3.9" ry="2.5" transform="rotate(137 161.3 19.3)" fill="#925f3e"/><ellipse cx="171.5" cy="17.7" rx="3.7" ry="2.3" transform="rotate(158 171.5 17.7)" fill="#5e3822"/><ellipse cx="176.0" cy="17.7" rx="3.9" ry="2.8" transform="rotate(83 176.0 17.7)" fill="#925f3e"/><ellipse cx="183.6" cy="16.3" rx="3.5" ry="2.5" transform="rotate(15 183.6 16.3)" fill="#7a4a2c"/><ellipse cx="188.6" cy="19.1" rx="3.6" ry="2.7" transform="rotate(39 188.6 19.1)" fill="#693d22"/><ellipse cx="1.1" cy="23.5" rx="3.4" ry="2.4" transform="rotate(102 1.1 23.5)" fill="#693d22"/><ellipse cx="8.5" cy="23.8" rx="4.1" ry="2.6" transform="rotate(57 8.5 23.8)" fill="#4e2d1a"/><ellipse cx="15.1" cy="24.9" rx="3.8" ry="2.3" transform="rotate(149 15.1 24.9)" fill="#5e3822"/><ellipse cx="18.5" cy="23.6" rx="3.7" ry="2.3" transform="rotate(101 18.5 23.6)" fill="#925f3e"/><ellipse cx="25.1" cy="22.6" rx="3.9" ry="2.4" transform="rotate(16 25.1 22.6)" fill="#4e2d1a"/><ellipse cx="33.9" cy="23.1" rx="3.3" ry="2.3" transform="rotate(98 33.9 23.1)" fill="#86573a"/><ellipse cx="37.4" cy="22.1" rx="4.1" ry="2.7" transform="rotate(105 37.4 22.1)" fill="#7a4a2c"/><ellipse cx="46.2" cy="22.3" rx="3.4" ry="2.4" transform="rotate(162 46.2 22.3)" fill="#5e3822"/><ellipse cx="48.8" cy="24.6" rx="3.4" ry="2.5" transform="rotate(76 48.8 24.6)" fill="#693d22"/><ellipse cx="56.2" cy="25.1" rx="3.8" ry="2.7" transform="rotate(71 56.2 25.1)" fill="#7a4a2c"/><ellipse cx="65.5" cy="23.3" rx="3.4" ry="2.3" transform="rotate(145 65.5 23.3)" fill="#5e3822"/><ellipse cx="71.4" cy="25.7" rx="3.7" ry="2.7" transform="rotate(120 71.4 25.7)" fill="#925f3e"/><ellipse cx="74.3" cy="23.5" rx="3.4" ry="2.3" transform="rotate(97 74.3 23.5)" fill="#5e3822"/><ellipse cx="83.3" cy="24.8" rx="4.1" ry="2.7" transform="rotate(76 83.3 24.8)" fill="#6b4026"/><ellipse cx="88.3" cy="22.6" rx="3.9" ry="2.8" transform="rotate(58 88.3 22.6)" fill="#4e2d1a"/><ellipse cx="95.6" cy="23.2" rx="4.3" ry="2.6" transform="rotate(56 95.6 23.2)" fill="#5e3822"/><ellipse cx="101.4" cy="22.6" rx="4.2" ry="3.1" transform="rotate(136 101.4 22.6)" fill="#5e3822"/><ellipse cx="109.2" cy="25.6" rx="3.3" ry="2.1" transform="rotate(33 109.2 25.6)" fill="#6b4026"/><ellipse cx="115.6" cy="24.4" rx="3.8" ry="2.6" transform="rotate(80 115.6 24.4)" fill="#7a4a2c"/><ellipse cx="121.1" cy="25.6" rx="4.2" ry="2.9" transform="rotate(170 121.1 25.6)" fill="#86573a"/><ellipse cx="127.9" cy="23.0" rx="4.2" ry="3.1" transform="rotate(62 127.9 23.0)" fill="#86573a"/><ellipse cx="135.8" cy="22.4" rx="4.2" ry="2.7" transform="rotate(39 135.8 22.4)" fill="#6b4026"/><ellipse cx="142.3" cy="23.5" rx="3.8" ry="2.6" transform="rotate(49 142.3 23.5)" fill="#5e3822"/><ellipse cx="148.0" cy="23.0" rx="3.3" ry="2.2" transform="rotate(67 148.0 23.0)" fill="#925f3e"/><ellipse cx="152.3" cy="23.7" rx="4.2" ry="2.8" transform="rotate(139 152.3 23.7)" fill="#6b4026"/><ellipse cx="158.8" cy="25.5" rx="3.8" ry="2.7" transform="rotate(179 158.8 25.5)" fill="#7a4a2c"/><ellipse cx="166.5" cy="22.2" rx="3.9" ry="2.4" transform="rotate(37 166.5 22.2)" fill="#925f3e"/><ellipse cx="171.0" cy="22.5" rx="3.7" ry="2.5" transform="rotate(95 171.0 22.5)" fill="#4e2d1a"/><ellipse cx="180.2" cy="22.3" rx="4.0" ry="2.8" transform="rotate(91 180.2 22.3)" fill="#5e3822"/><ellipse cx="187.0" cy="23.7" rx="4.2" ry="2.6" transform="rotate(149 187.0 23.7)" fill="#6b4026"/><ellipse cx="0.7" cy="29.7" rx="3.8" ry="2.8" transform="rotate(174 0.7 29.7)" fill="#7a4a2c"/><ellipse cx="8.5" cy="28.3" rx="3.6" ry="2.4" transform="rotate(129 8.5 28.3)" fill="#7a4a2c"/><ellipse cx="13.7" cy="28.6" rx="4.0" ry="2.8" transform="rotate(134 13.7 28.6)" fill="#925f3e"/><ellipse cx="23.8" cy="30.6" rx="3.3" ry="2.2" transform="rotate(128 23.8 30.6)" fill="#6b4026"/><ellipse cx="27.6" cy="28.5" rx="4.1" ry="3.0" transform="rotate(152 27.6 28.5)" fill="#693d22"/><ellipse cx="33.5" cy="30.5" rx="3.6" ry="2.4" transform="rotate(97 33.5 30.5)" fill="#7a4a2c"/><ellipse cx="43.7" cy="31.0" rx="3.9" ry="2.4" transform="rotate(34 43.7 31.0)" fill="#4e2d1a"/><ellipse cx="49.0" cy="29.3" rx="4.2" ry="2.9" transform="rotate(130 49.0 29.3)" fill="#7a4a2c"/><ellipse cx="53.9" cy="29.5" rx="3.4" ry="2.4" transform="rotate(24 53.9 29.5)" fill="#693d22"/><ellipse cx="61.6" cy="28.7" rx="3.7" ry="2.7" transform="rotate(107 61.6 28.7)" fill="#5e3822"/><ellipse cx="65.0" cy="28.1" rx="4.3" ry="2.9" transform="rotate(139 65.0 28.1)" fill="#7a4a2c"/><ellipse cx="75.5" cy="29.7" rx="3.8" ry="2.7" transform="rotate(138 75.5 29.7)" fill="#925f3e"/><ellipse cx="80.8" cy="29.9" rx="4.2" ry="2.9" transform="rotate(131 80.8 29.9)" fill="#86573a"/><ellipse cx="87.2" cy="31.9" rx="4.1" ry="2.9" transform="rotate(110 87.2 31.9)" fill="#5e3822"/><ellipse cx="91.4" cy="28.8" rx="3.6" ry="2.4" transform="rotate(100 91.4 28.8)" fill="#6b4026"/><ellipse cx="99.0" cy="31.2" rx="4.1" ry="2.9" transform="rotate(29 99.0 31.2)" fill="#925f3e"/><ellipse cx="105.6" cy="29.2" rx="3.5" ry="2.4" transform="rotate(92 105.6 29.2)" fill="#86573a"/><ellipse cx="112.9" cy="31.9" rx="3.8" ry="2.7" transform="rotate(150 112.9 31.9)" fill="#6b4026"/><ellipse cx="118.5" cy="28.1" rx="4.0" ry="2.8" transform="rotate(25 118.5 28.1)" fill="#4e2d1a"/><ellipse cx="125.0" cy="30.8" rx="3.6" ry="2.7" transform="rotate(65 125.0 30.8)" fill="#4e2d1a"/><ellipse cx="132.9" cy="29.8" rx="4.0" ry="2.6" transform="rotate(102 132.9 29.8)" fill="#86573a"/><ellipse cx="137.7" cy="30.2" rx="3.6" ry="2.6" transform="rotate(179 137.7 30.2)" fill="#925f3e"/><ellipse cx="143.0" cy="28.6" rx="4.2" ry="2.5" transform="rotate(123 143.0 28.6)" fill="#7a4a2c"/><ellipse cx="148.9" cy="30.3" rx="4.1" ry="2.6" transform="rotate(99 148.9 30.3)" fill="#5e3822"/><ellipse cx="156.4" cy="29.6" rx="4.1" ry="3.0" transform="rotate(180 156.4 29.6)" fill="#6b4026"/><ellipse cx="162.0" cy="30.7" rx="4.0" ry="2.7" transform="rotate(107 162.0 30.7)" fill="#925f3e"/><ellipse cx="170.7" cy="28.6" rx="3.7" ry="2.2" transform="rotate(95 170.7 28.6)" fill="#5e3822"/><ellipse cx="176.1" cy="28.7" rx="3.8" ry="2.4" transform="rotate(102 176.1 28.7)" fill="#7a4a2c"/><ellipse cx="180.0" cy="31.1" rx="4.0" ry="2.9" transform="rotate(73 180.0 31.1)" fill="#4e2d1a"/><ellipse cx="189.1" cy="29.9" rx="3.7" ry="2.6" transform="rotate(124 189.1 29.9)" fill="#925f3e"/><ellipse cx="-0.5" cy="35.1" rx="4.2" ry="2.8" transform="rotate(163 -0.5 35.1)" fill="#693d22"/><ellipse cx="5.9" cy="35.7" rx="3.9" ry="2.8" transform="rotate(95 5.9 35.7)" fill="#86573a"/><ellipse cx="12.9" cy="35.7" rx="3.3" ry="2.4" transform="rotate(53 12.9 35.7)" fill="#86573a"/><ellipse cx="21.2" cy="36.9" rx="3.9" ry="2.8" transform="rotate(55 21.2 36.9)" fill="#86573a"/><ellipse cx="27.5" cy="35.0" rx="4.1" ry="2.6" transform="rotate(157 27.5 35.0)" fill="#5e3822"/><ellipse cx="31.9" cy="34.4" rx="4.2" ry="2.9" transform="rotate(118 31.9 34.4)" fill="#6b4026"/><ellipse cx="40.3" cy="38.0" rx="4.0" ry="2.9" transform="rotate(66 40.3 38.0)" fill="#86573a"/><ellipse cx="44.4" cy="37.2" rx="3.5" ry="2.5" transform="rotate(102 44.4 37.2)" fill="#5e3822"/><ellipse cx="49.2" cy="37.2" rx="3.4" ry="2.3" transform="rotate(171 49.2 37.2)" fill="#5e3822"/><ellipse cx="56.6" cy="36.9" rx="3.3" ry="2.1" transform="rotate(79 56.6 36.9)" fill="#4e2d1a"/><ellipse cx="65.6" cy="35.6" rx="3.7" ry="2.5" transform="rotate(8 65.6 35.6)" fill="#5e3822"/><ellipse cx="70.2" cy="35.3" rx="3.6" ry="2.3" transform="rotate(140 70.2 35.3)" fill="#925f3e"/><ellipse cx="76.7" cy="34.8" rx="3.6" ry="2.7" transform="rotate(161 76.7 34.8)" fill="#6b4026"/><ellipse cx="82.3" cy="37.4" rx="4.2" ry="2.5" transform="rotate(114 82.3 37.4)" fill="#693d22"/><ellipse cx="92.1" cy="34.8" rx="3.9" ry="2.5" transform="rotate(158 92.1 34.8)" fill="#5e3822"/><ellipse cx="96.8" cy="35.2" rx="4.1" ry="3.1" transform="rotate(49 96.8 35.2)" fill="#4e2d1a"/><ellipse cx="103.5" cy="34.5" rx="4.0" ry="3.0" transform="rotate(80 103.5 34.5)" fill="#5e3822"/><ellipse cx="107.1" cy="37.4" rx="3.4" ry="2.4" transform="rotate(48 107.1 37.4)" fill="#693d22"/><ellipse cx="113.9" cy="36.7" rx="4.1" ry="2.7" transform="rotate(119 113.9 36.7)" fill="#5e3822"/><ellipse cx="122.0" cy="34.9" rx="3.6" ry="2.7" transform="rotate(120 122.0 34.9)" fill="#7a4a2c"/><ellipse cx="126.2" cy="36.7" rx="3.8" ry="2.3" transform="rotate(165 126.2 36.7)" fill="#5e3822"/><ellipse cx="134.6" cy="34.2" rx="3.9" ry="2.5" transform="rotate(45 134.6 34.2)" fill="#925f3e"/><ellipse cx="141.1" cy="34.7" rx="4.3" ry="2.7" transform="rotate(32 141.1 34.7)" fill="#693d22"/><ellipse cx="147.4" cy="34.7" rx="4.2" ry="3.1" transform="rotate(6 147.4 34.7)" fill="#4e2d1a"/><ellipse cx="155.7" cy="36.3" rx="3.3" ry="2.4" transform="rotate(11 155.7 36.3)" fill="#5e3822"/><ellipse cx="160.3" cy="36.6" rx="3.7" ry="2.6" transform="rotate(141 160.3 36.6)" fill="#86573a"/><ellipse cx="165.4" cy="37.3" rx="3.9" ry="2.9" transform="rotate(134 165.4 37.3)" fill="#86573a"/><ellipse cx="171.2" cy="37.1" rx="3.5" ry="2.4" transform="rotate(42 171.2 37.1)" fill="#4e2d1a"/><ellipse cx="179.4" cy="35.0" rx="4.0" ry="2.8" transform="rotate(47 179.4 35.0)" fill="#86573a"/><ellipse cx="184.2" cy="36.3" rx="3.8" ry="2.3" transform="rotate(107 184.2 36.3)" fill="#693d22"/><ellipse cx="0.8" cy="41.8" rx="4.2" ry="2.7" transform="rotate(109 0.8 41.8)" fill="#86573a"/><ellipse cx="9.4" cy="41.7" rx="3.7" ry="2.4" transform="rotate(144 9.4 41.7)" fill="#5e3822"/><ellipse cx="13.9" cy="40.7" rx="3.9" ry="2.7" transform="rotate(130 13.9 40.7)" fill="#86573a"/><ellipse cx="20.4" cy="41.2" rx="3.3" ry="2.2" transform="rotate(112 20.4 41.2)" fill="#86573a"/><ellipse cx="30.0" cy="43.1" rx="3.8" ry="2.6" transform="rotate(92 30.0 43.1)" fill="#4e2d1a"/><ellipse cx="33.8" cy="40.6" rx="4.0" ry="2.9" transform="rotate(142 33.8 40.6)" fill="#5e3822"/><ellipse cx="40.5" cy="41.9" rx="4.0" ry="2.8" transform="rotate(172 40.5 41.9)" fill="#6b4026"/><ellipse cx="47.7" cy="43.0" rx="4.3" ry="2.7" transform="rotate(82 47.7 43.0)" fill="#693d22"/><ellipse cx="56.6" cy="40.0" rx="3.7" ry="2.5" transform="rotate(16 56.6 40.0)" fill="#86573a"/><ellipse cx="59.6" cy="41.7" rx="3.4" ry="2.0" transform="rotate(179 59.6 41.7)" fill="#925f3e"/><ellipse cx="69.4" cy="42.4" rx="3.6" ry="2.2" transform="rotate(154 69.4 42.4)" fill="#4e2d1a"/><ellipse cx="73.2" cy="43.7" rx="3.7" ry="2.4" transform="rotate(177 73.2 43.7)" fill="#86573a"/><ellipse cx="78.4" cy="40.6" rx="3.9" ry="2.9" transform="rotate(133 78.4 40.6)" fill="#86573a"/><ellipse cx="87.2" cy="43.5" rx="3.9" ry="2.9" transform="rotate(83 87.2 43.5)" fill="#4e2d1a"/><ellipse cx="94.8" cy="40.9" rx="3.7" ry="2.2" transform="rotate(75 94.8 40.9)" fill="#6b4026"/><ellipse cx="97.4" cy="42.2" rx="3.5" ry="2.2" transform="rotate(39 97.4 42.2)" fill="#4e2d1a"/><ellipse cx="106.7" cy="41.9" rx="3.8" ry="2.6" transform="rotate(33 106.7 41.9)" fill="#4e2d1a"/><ellipse cx="110.3" cy="41.5" rx="3.4" ry="2.4" transform="rotate(65 110.3 41.5)" fill="#7a4a2c"/><ellipse cx="118.8" cy="42.1" rx="4.0" ry="2.7" transform="rotate(102 118.8 42.1)" fill="#693d22"/><ellipse cx="125.7" cy="41.1" rx="3.7" ry="2.3" transform="rotate(169 125.7 41.1)" fill="#7a4a2c"/><ellipse cx="129.2" cy="41.0" rx="4.1" ry="2.6" transform="rotate(180 129.2 41.0)" fill="#925f3e"/><ellipse cx="136.8" cy="40.3" rx="4.2" ry="2.7" transform="rotate(139 136.8 40.3)" fill="#86573a"/><ellipse cx="144.6" cy="41.2" rx="3.9" ry="2.6" transform="rotate(34 144.6 41.2)" fill="#86573a"/><ellipse cx="150.7" cy="40.1" rx="3.6" ry="2.4" transform="rotate(98 150.7 40.1)" fill="#6b4026"/><ellipse cx="156.7" cy="42.2" rx="3.6" ry="2.4" transform="rotate(68 156.7 42.2)" fill="#6b4026"/><ellipse cx="164.7" cy="42.1" rx="3.7" ry="2.3" transform="rotate(93 164.7 42.1)" fill="#7a4a2c"/><ellipse cx="168.0" cy="41.2" rx="3.6" ry="2.3" transform="rotate(7 168.0 41.2)" fill="#5e3822"/><ellipse cx="177.0" cy="41.9" rx="3.3" ry="2.4" transform="rotate(134 177.0 41.9)" fill="#693d22"/><ellipse cx="183.1" cy="43.7" rx="3.5" ry="2.5" transform="rotate(120 183.1 43.7)" fill="#925f3e"/><ellipse cx="190.4" cy="40.9" rx="3.9" ry="2.4" transform="rotate(77 190.4 40.9)" fill="#4e2d1a"/><ellipse cx="-0.0" cy="48.0" rx="4.2" ry="2.7" transform="rotate(127 -0.0 48.0)" fill="#6b4026"/><ellipse cx="4.7" cy="47.6" rx="3.8" ry="2.4" transform="rotate(120 4.7 47.6)" fill="#6b4026"/><ellipse cx="12.9" cy="49.0" rx="4.2" ry="3.0" transform="rotate(86 12.9 49.0)" fill="#7a4a2c"/><ellipse cx="20.2" cy="48.2" rx="4.0" ry="2.4" transform="rotate(70 20.2 48.2)" fill="#7a4a2c"/><ellipse cx="27.6" cy="49.6" rx="3.6" ry="2.3" transform="rotate(152 27.6 49.6)" fill="#7a4a2c"/><ellipse cx="31.8" cy="47.3" rx="3.6" ry="2.1" transform="rotate(62 31.8 47.3)" fill="#7a4a2c"/><ellipse cx="38.7" cy="47.0" rx="4.0" ry="2.5" transform="rotate(84 38.7 47.0)" fill="#86573a"/><ellipse cx="44.0" cy="49.6" rx="3.3" ry="2.4" transform="rotate(39 44.0 49.6)" fill="#5e3822"/><ellipse cx="51.8" cy="48.5" rx="3.7" ry="2.5" transform="rotate(50 51.8 48.5)" fill="#925f3e"/><ellipse cx="57.4" cy="47.8" rx="4.3" ry="2.8" transform="rotate(145 57.4 47.8)" fill="#693d22"/><ellipse cx="64.0" cy="47.2" rx="3.7" ry="2.7" transform="rotate(27 64.0 47.2)" fill="#6b4026"/><ellipse cx="69.2" cy="47.0" rx="3.5" ry="2.4" transform="rotate(167 69.2 47.0)" fill="#4e2d1a"/><ellipse cx="74.3" cy="48.2" rx="4.1" ry="3.0" transform="rotate(14 74.3 48.2)" fill="#925f3e"/><ellipse cx="83.5" cy="49.3" rx="4.3" ry="2.8" transform="rotate(62 83.5 49.3)" fill="#5e3822"/><ellipse cx="88.7" cy="48.9" rx="4.0" ry="2.8" transform="rotate(174 88.7 48.9)" fill="#925f3e"/><ellipse cx="94.3" cy="47.3" rx="4.0" ry="2.9" transform="rotate(53 94.3 47.3)" fill="#4e2d1a"/><ellipse cx="101.3" cy="49.0" rx="3.8" ry="2.4" transform="rotate(45 101.3 49.0)" fill="#7a4a2c"/><ellipse cx="109.8" cy="49.7" rx="4.0" ry="3.0" transform="rotate(178 109.8 49.7)" fill="#925f3e"/><ellipse cx="113.2" cy="48.8" rx="3.4" ry="2.3" transform="rotate(139 113.2 48.8)" fill="#4e2d1a"/><ellipse cx="119.3" cy="48.5" rx="3.7" ry="2.5" transform="rotate(62 119.3 48.5)" fill="#4e2d1a"/><ellipse cx="128.0" cy="49.2" rx="3.7" ry="2.6" transform="rotate(45 128.0 49.2)" fill="#693d22"/><ellipse cx="135.3" cy="46.7" rx="4.2" ry="2.6" transform="rotate(101 135.3 46.7)" fill="#6b4026"/><ellipse cx="141.1" cy="47.7" rx="4.0" ry="2.8" transform="rotate(150 141.1 47.7)" fill="#925f3e"/><ellipse cx="145.5" cy="46.8" rx="3.9" ry="2.5" transform="rotate(117 145.5 46.8)" fill="#5e3822"/><ellipse cx="153.5" cy="48.8" rx="4.1" ry="3.0" transform="rotate(48 153.5 48.8)" fill="#7a4a2c"/><ellipse cx="159.6" cy="48.5" rx="3.7" ry="2.7" transform="rotate(178 159.6 48.5)" fill="#5e3822"/><ellipse cx="164.7" cy="50.0" rx="4.2" ry="2.6" transform="rotate(64 164.7 50.0)" fill="#86573a"/><ellipse cx="175.3" cy="46.5" rx="3.6" ry="2.2" transform="rotate(98 175.3 46.5)" fill="#4e2d1a"/><ellipse cx="177.6" cy="46.3" rx="3.7" ry="2.7" transform="rotate(117 177.6 46.3)" fill="#6b4026"/><ellipse cx="185.1" cy="48.5" rx="4.1" ry="3.0" transform="rotate(70 185.1 48.5)" fill="#693d22"/><ellipse cx="1.6" cy="53.1" rx="4.2" ry="2.8" transform="rotate(150 1.6 53.1)" fill="#86573a"/><ellipse cx="11.6" cy="53.0" rx="3.8" ry="2.3" transform="rotate(58 11.6 53.0)" fill="#5e3822"/><ellipse cx="14.7" cy="54.3" rx="3.6" ry="2.4" transform="rotate(58 14.7 54.3)" fill="#5e3822"/><ellipse cx="22.1" cy="53.5" rx="3.6" ry="2.2" transform="rotate(12 22.1 53.5)" fill="#925f3e"/><ellipse cx="27.6" cy="52.3" rx="3.5" ry="2.3" transform="rotate(179 27.6 52.3)" fill="#6b4026"/><ellipse cx="37.5" cy="53.6" rx="3.3" ry="2.2" transform="rotate(101 37.5 53.6)" fill="#86573a"/><ellipse cx="39.2" cy="54.2" rx="4.0" ry="2.7" transform="rotate(50 39.2 54.2)" fill="#7a4a2c"/><ellipse cx="49.6" cy="56.0" rx="3.7" ry="2.7" transform="rotate(130 49.6 56.0)" fill="#6b4026"/><ellipse cx="56.0" cy="55.8" rx="3.8" ry="2.7" transform="rotate(49 56.0 55.8)" fill="#5e3822"/><ellipse cx="61.9" cy="53.2" rx="3.8" ry="2.3" transform="rotate(38 61.9 53.2)" fill="#7a4a2c"/><ellipse cx="64.6" cy="54.1" rx="4.1" ry="3.0" transform="rotate(132 64.6 54.1)" fill="#4e2d1a"/><ellipse cx="72.4" cy="54.1" rx="4.0" ry="2.9" transform="rotate(138 72.4 54.1)" fill="#4e2d1a"/><ellipse cx="79.3" cy="54.8" rx="3.6" ry="2.6" transform="rotate(4 79.3 54.8)" fill="#86573a"/><ellipse cx="84.4" cy="53.3" rx="4.0" ry="2.7" transform="rotate(50 84.4 53.3)" fill="#7a4a2c"/><ellipse cx="93.2" cy="53.8" rx="3.6" ry="2.2" transform="rotate(118 93.2 53.8)" fill="#86573a"/><ellipse cx="97.0" cy="53.3" rx="4.0" ry="2.6" transform="rotate(134 97.0 53.3)" fill="#86573a"/><ellipse cx="104.4" cy="52.8" rx="3.6" ry="2.3" transform="rotate(67 104.4 52.8)" fill="#6b4026"/><ellipse cx="111.5" cy="52.0" rx="3.8" ry="2.5" transform="rotate(58 111.5 52.0)" fill="#86573a"/><ellipse cx="119.9" cy="55.0" rx="3.3" ry="2.1" transform="rotate(12 119.9 55.0)" fill="#86573a"/><ellipse cx="122.6" cy="56.0" rx="3.7" ry="2.8" transform="rotate(40 122.6 56.0)" fill="#4e2d1a"/><ellipse cx="132.4" cy="55.6" rx="4.1" ry="2.5" transform="rotate(70 132.4 55.6)" fill="#7a4a2c"/><ellipse cx="139.3" cy="55.1" rx="3.8" ry="2.3" transform="rotate(131 139.3 55.1)" fill="#693d22"/><ellipse cx="143.2" cy="54.6" rx="3.5" ry="2.4" transform="rotate(160 143.2 54.6)" fill="#925f3e"/><ellipse cx="151.3" cy="53.7" rx="4.3" ry="3.2" transform="rotate(22 151.3 53.7)" fill="#693d22"/><ellipse cx="157.5" cy="53.8" rx="4.0" ry="2.6" transform="rotate(69 157.5 53.8)" fill="#6b4026"/><ellipse cx="162.4" cy="54.2" rx="3.3" ry="2.5" transform="rotate(95 162.4 54.2)" fill="#4e2d1a"/><ellipse cx="169.1" cy="54.4" rx="3.9" ry="2.9" transform="rotate(27 169.1 54.4)" fill="#4e2d1a"/><ellipse cx="174.9" cy="53.0" rx="3.9" ry="2.5" transform="rotate(84 174.9 53.0)" fill="#86573a"/><ellipse cx="181.7" cy="55.5" rx="3.4" ry="2.6" transform="rotate(88 181.7 55.5)" fill="#6b4026"/><ellipse cx="187.0" cy="55.7" rx="4.1" ry="2.5" transform="rotate(21 187.0 55.7)" fill="#5e3822"/><ellipse cx="0.1" cy="62.0" rx="3.4" ry="2.5" transform="rotate(128 0.1 62.0)" fill="#7a4a2c"/><ellipse cx="6.5" cy="59.4" rx="3.5" ry="2.1" transform="rotate(77 6.5 59.4)" fill="#4e2d1a"/><ellipse cx="11.7" cy="60.6" rx="3.4" ry="2.3" transform="rotate(142 11.7 60.6)" fill="#4e2d1a"/><ellipse cx="21.1" cy="58.3" rx="3.8" ry="2.3" transform="rotate(157 21.1 58.3)" fill="#5e3822"/><ellipse cx="27.1" cy="58.6" rx="3.7" ry="2.3" transform="rotate(7 27.1 58.6)" fill="#7a4a2c"/><ellipse cx="34.3" cy="58.9" rx="3.6" ry="2.4" transform="rotate(111 34.3 58.9)" fill="#5e3822"/><ellipse cx="40.1" cy="60.5" rx="4.2" ry="2.6" transform="rotate(178 40.1 60.5)" fill="#6b4026"/><ellipse cx="45.0" cy="59.3" rx="4.3" ry="3.2" transform="rotate(101 45.0 59.3)" fill="#4e2d1a"/><ellipse cx="50.6" cy="61.3" rx="4.0" ry="2.9" transform="rotate(170 50.6 61.3)" fill="#693d22"/><ellipse cx="58.1" cy="60.8" rx="3.5" ry="2.2" transform="rotate(125 58.1 60.8)" fill="#4e2d1a"/><ellipse cx="61.7" cy="59.1" rx="3.6" ry="2.3" transform="rotate(112 61.7 59.1)" fill="#7a4a2c"/><ellipse cx="68.9" cy="62.0" rx="4.0" ry="2.8" transform="rotate(65 68.9 62.0)" fill="#7a4a2c"/><ellipse cx="78.1" cy="58.8" rx="3.4" ry="2.2" transform="rotate(67 78.1 58.8)" fill="#86573a"/><ellipse cx="82.7" cy="59.8" rx="3.8" ry="2.8" transform="rotate(62 82.7 59.8)" fill="#693d22"/><ellipse cx="89.2" cy="60.0" rx="3.4" ry="2.1" transform="rotate(158 89.2 60.0)" fill="#925f3e"/><ellipse cx="93.9" cy="60.6" rx="3.5" ry="2.4" transform="rotate(36 93.9 60.6)" fill="#4e2d1a"/><ellipse cx="102.9" cy="59.8" rx="3.4" ry="2.2" transform="rotate(51 102.9 59.8)" fill="#4e2d1a"/><ellipse cx="109.6" cy="59.1" rx="4.0" ry="2.4" transform="rotate(110 109.6 59.1)" fill="#5e3822"/><ellipse cx="114.8" cy="58.5" rx="4.2" ry="2.7" transform="rotate(76 114.8 58.5)" fill="#7a4a2c"/><ellipse cx="119.6" cy="61.5" rx="4.1" ry="2.5" transform="rotate(118 119.6 61.5)" fill="#4e2d1a"/><ellipse cx="130.0" cy="58.4" rx="3.7" ry="2.4" transform="rotate(130 130.0 58.4)" fill="#693d22"/><ellipse cx="135.4" cy="62.0" rx="4.1" ry="3.0" transform="rotate(120 135.4 62.0)" fill="#6b4026"/><ellipse cx="140.6" cy="59.4" rx="3.8" ry="2.4" transform="rotate(121 140.6 59.4)" fill="#86573a"/><ellipse cx="145.0" cy="58.9" rx="3.3" ry="2.4" transform="rotate(78 145.0 58.9)" fill="#6b4026"/><ellipse cx="154.3" cy="60.8" rx="4.3" ry="2.6" transform="rotate(83 154.3 60.8)" fill="#4e2d1a"/><ellipse cx="161.5" cy="61.7" rx="3.8" ry="2.6" transform="rotate(90 161.5 61.7)" fill="#925f3e"/><ellipse cx="164.6" cy="59.6" rx="4.0" ry="2.5" transform="rotate(30 164.6 59.6)" fill="#693d22"/><ellipse cx="173.8" cy="61.1" rx="4.2" ry="2.9" transform="rotate(175 173.8 61.1)" fill="#4e2d1a"/><ellipse cx="180.6" cy="58.5" rx="3.8" ry="2.3" transform="rotate(155 180.6 58.5)" fill="#925f3e"/><ellipse cx="187.6" cy="58.1" rx="3.7" ry="2.5" transform="rotate(96 187.6 58.1)" fill="#5e3822"/><ellipse cx="4.4" cy="64.4" rx="4.3" ry="2.9" transform="rotate(12 4.4 64.4)" fill="#6b4026"/><ellipse cx="7.5" cy="64.4" rx="3.8" ry="2.5" transform="rotate(140 7.5 64.4)" fill="#6b4026"/><ellipse cx="16.3" cy="65.9" rx="4.3" ry="3.0" transform="rotate(31 16.3 65.9)" fill="#5e3822"/><ellipse cx="22.0" cy="67.4" rx="3.4" ry="2.5" transform="rotate(28 22.0 67.4)" fill="#86573a"/><ellipse cx="28.7" cy="65.6" rx="3.9" ry="2.9" transform="rotate(173 28.7 65.6)" fill="#4e2d1a"/><ellipse cx="36.6" cy="64.9" rx="4.1" ry="2.5" transform="rotate(133 36.6 64.9)" fill="#4e2d1a"/><ellipse cx="39.7" cy="66.1" rx="3.3" ry="2.1" transform="rotate(54 39.7 66.1)" fill="#86573a"/><ellipse cx="48.5" cy="67.4" rx="3.3" ry="2.2" transform="rotate(14 48.5 67.4)" fill="#7a4a2c"/><ellipse cx="54.4" cy="66.6" rx="3.7" ry="2.7" transform="rotate(37 54.4 66.6)" fill="#86573a"/><ellipse cx="62.8" cy="66.3" rx="3.8" ry="2.8" transform="rotate(71 62.8 66.3)" fill="#7a4a2c"/><ellipse cx="65.8" cy="66.4" rx="3.5" ry="2.2" transform="rotate(143 65.8 66.4)" fill="#4e2d1a"/><ellipse cx="72.7" cy="65.7" rx="3.8" ry="2.3" transform="rotate(150 72.7 65.7)" fill="#5e3822"/><ellipse cx="78.1" cy="65.5" rx="3.6" ry="2.6" transform="rotate(122 78.1 65.5)" fill="#693d22"/><ellipse cx="85.6" cy="65.3" rx="3.8" ry="2.4" transform="rotate(135 85.6 65.3)" fill="#4e2d1a"/><ellipse cx="93.8" cy="65.5" rx="3.9" ry="2.4" transform="rotate(124 93.8 65.5)" fill="#7a4a2c"/><ellipse cx="101.3" cy="65.5" rx="3.9" ry="2.6" transform="rotate(54 101.3 65.5)" fill="#86573a"/><ellipse cx="106.7" cy="64.2" rx="3.5" ry="2.2" transform="rotate(137 106.7 64.2)" fill="#7a4a2c"/><ellipse cx="109.6" cy="64.4" rx="3.6" ry="2.3" transform="rotate(143 109.6 64.4)" fill="#4e2d1a"/><ellipse cx="118.9" cy="65.5" rx="3.4" ry="2.3" transform="rotate(18 118.9 65.5)" fill="#4e2d1a"/><ellipse cx="127.0" cy="67.3" rx="3.6" ry="2.3" transform="rotate(147 127.0 67.3)" fill="#925f3e"/><ellipse cx="129.9" cy="65.1" rx="4.3" ry="2.9" transform="rotate(71 129.9 65.1)" fill="#5e3822"/><ellipse cx="137.7" cy="67.7" rx="3.9" ry="2.4" transform="rotate(168 137.7 67.7)" fill="#925f3e"/><ellipse cx="142.4" cy="66.2" rx="4.1" ry="2.8" transform="rotate(60 142.4 66.2)" fill="#693d22"/><ellipse cx="152.6" cy="67.7" rx="3.4" ry="2.4" transform="rotate(79 152.6 67.7)" fill="#925f3e"/><ellipse cx="154.8" cy="67.0" rx="4.0" ry="2.9" transform="rotate(80 154.8 67.0)" fill="#693d22"/><ellipse cx="164.1" cy="67.3" rx="4.3" ry="2.8" transform="rotate(150 164.1 67.3)" fill="#693d22"/><ellipse cx="167.5" cy="64.5" rx="3.6" ry="2.7" transform="rotate(101 167.5 64.5)" fill="#925f3e"/><ellipse cx="174.4" cy="65.7" rx="3.8" ry="2.8" transform="rotate(22 174.4 65.7)" fill="#925f3e"/><ellipse cx="181.1" cy="65.6" rx="4.2" ry="3.1" transform="rotate(36 181.1 65.6)" fill="#693d22"/><ellipse cx="190.7" cy="66.0" rx="4.0" ry="2.6" transform="rotate(140 190.7 66.0)" fill="#5e3822"/><ellipse cx="0.2" cy="73.4" rx="4.1" ry="2.6" transform="rotate(3 0.2 73.4)" fill="#925f3e"/><ellipse cx="4.7" cy="71.4" rx="3.9" ry="2.6" transform="rotate(70 4.7 71.4)" fill="#86573a"/><ellipse cx="13.2" cy="71.8" rx="4.1" ry="2.5" transform="rotate(127 13.2 71.8)" fill="#4e2d1a"/><ellipse cx="18.3" cy="72.8" rx="3.5" ry="2.3" transform="rotate(131 18.3 72.8)" fill="#86573a"/><ellipse cx="23.3" cy="73.7" rx="4.1" ry="2.6" transform="rotate(44 23.3 73.7)" fill="#6b4026"/><ellipse cx="31.7" cy="72.5" rx="3.9" ry="2.9" transform="rotate(164 31.7 72.5)" fill="#4e2d1a"/><ellipse cx="37.8" cy="70.5" rx="3.5" ry="2.4" transform="rotate(122 37.8 70.5)" fill="#86573a"/><ellipse cx="46.5" cy="70.1" rx="4.0" ry="2.7" transform="rotate(99 46.5 70.1)" fill="#7a4a2c"/><ellipse cx="51.1" cy="71.8" rx="4.3" ry="2.8" transform="rotate(54 51.1 71.8)" fill="#6b4026"/><ellipse cx="59.0" cy="70.9" rx="3.5" ry="2.4" transform="rotate(110 59.0 70.9)" fill="#5e3822"/><ellipse cx="62.3" cy="70.8" rx="3.5" ry="2.6" transform="rotate(66 62.3 70.8)" fill="#7a4a2c"/><ellipse cx="69.7" cy="73.8" rx="4.0" ry="2.6" transform="rotate(154 69.7 73.8)" fill="#693d22"/><ellipse cx="79.2" cy="70.4" rx="3.7" ry="2.3" transform="rotate(160 79.2 70.4)" fill="#693d22"/><ellipse cx="82.2" cy="71.0" rx="3.4" ry="2.3" transform="rotate(49 82.2 71.0)" fill="#7a4a2c"/><ellipse cx="91.1" cy="73.8" rx="3.5" ry="2.3" transform="rotate(148 91.1 73.8)" fill="#86573a"/><ellipse cx="97.8" cy="72.4" rx="3.8" ry="2.7" transform="rotate(96 97.8 72.4)" fill="#693d22"/><ellipse cx="103.4" cy="72.4" rx="3.9" ry="2.5" transform="rotate(77 103.4 72.4)" fill="#925f3e"/><ellipse cx="108.1" cy="73.1" rx="3.5" ry="2.4" transform="rotate(67 108.1 73.1)" fill="#693d22"/><ellipse cx="113.8" cy="72.6" rx="3.6" ry="2.5" transform="rotate(159 113.8 72.6)" fill="#5e3822"/><ellipse cx="123.8" cy="70.4" rx="4.2" ry="3.0" transform="rotate(13 123.8 70.4)" fill="#5e3822"/><ellipse cx="126.0" cy="72.3" rx="3.4" ry="2.6" transform="rotate(56 126.0 72.3)" fill="#925f3e"/><ellipse cx="132.6" cy="73.8" rx="4.0" ry="2.5" transform="rotate(74 132.6 73.8)" fill="#6b4026"/><ellipse cx="143.2" cy="72.7" rx="4.2" ry="3.0" transform="rotate(94 143.2 72.7)" fill="#5e3822"/><ellipse cx="146.9" cy="72.7" rx="3.4" ry="2.4" transform="rotate(110 146.9 72.7)" fill="#6b4026"/><ellipse cx="155.5" cy="70.4" rx="3.4" ry="2.2" transform="rotate(125 155.5 70.4)" fill="#5e3822"/><ellipse cx="160.3" cy="73.9" rx="3.9" ry="2.4" transform="rotate(54 160.3 73.9)" fill="#7a4a2c"/><ellipse cx="165.0" cy="71.1" rx="3.5" ry="2.4" transform="rotate(157 165.0 71.1)" fill="#6b4026"/><ellipse cx="174.6" cy="73.7" rx="3.3" ry="2.2" transform="rotate(106 174.6 73.7)" fill="#693d22"/><ellipse cx="179.6" cy="73.6" rx="3.6" ry="2.3" transform="rotate(138 179.6 73.6)" fill="#6b4026"/><ellipse cx="187.9" cy="70.1" rx="3.4" ry="2.5" transform="rotate(172 187.9 70.1)" fill="#5e3822"/><ellipse cx="2.6" cy="76.6" rx="3.5" ry="2.4" transform="rotate(152 2.6 76.6)" fill="#925f3e"/><ellipse cx="10.7" cy="79.2" rx="3.3" ry="2.0" transform="rotate(143 10.7 79.2)" fill="#4e2d1a"/><ellipse cx="17.5" cy="77.6" rx="3.6" ry="2.4" transform="rotate(3 17.5 77.6)" fill="#925f3e"/><ellipse cx="20.9" cy="76.2" rx="3.7" ry="2.6" transform="rotate(94 20.9 76.2)" fill="#7a4a2c"/><ellipse cx="28.4" cy="76.9" rx="4.2" ry="2.6" transform="rotate(27 28.4 76.9)" fill="#7a4a2c"/><ellipse cx="34.8" cy="76.9" rx="4.2" ry="2.6" transform="rotate(122 34.8 76.9)" fill="#86573a"/><ellipse cx="40.2" cy="78.1" rx="3.6" ry="2.6" transform="rotate(33 40.2 78.1)" fill="#6b4026"/><ellipse cx="45.6" cy="78.0" rx="4.0" ry="2.5" transform="rotate(6 45.6 78.0)" fill="#6b4026"/><ellipse cx="54.4" cy="76.3" rx="4.1" ry="2.6" transform="rotate(39 54.4 76.3)" fill="#4e2d1a"/><ellipse cx="60.9" cy="76.6" rx="4.0" ry="2.4" transform="rotate(13 60.9 76.6)" fill="#925f3e"/><ellipse cx="66.4" cy="76.5" rx="4.1" ry="2.9" transform="rotate(61 66.4 76.5)" fill="#925f3e"/><ellipse cx="71.9" cy="79.6" rx="3.9" ry="2.9" transform="rotate(12 71.9 79.6)" fill="#925f3e"/><ellipse cx="81.9" cy="76.2" rx="3.3" ry="2.5" transform="rotate(76 81.9 76.2)" fill="#6b4026"/><ellipse cx="84.4" cy="76.8" rx="4.2" ry="3.1" transform="rotate(168 84.4 76.8)" fill="#7a4a2c"/><ellipse cx="90.8" cy="76.5" rx="4.1" ry="2.7" transform="rotate(8 90.8 76.5)" fill="#6b4026"/><ellipse cx="97.2" cy="78.7" rx="4.2" ry="3.0" transform="rotate(171 97.2 78.7)" fill="#4e2d1a"/><ellipse cx="104.7" cy="78.9" rx="4.2" ry="2.6" transform="rotate(157 104.7 78.9)" fill="#6b4026"/><ellipse cx="112.9" cy="78.7" rx="3.4" ry="2.2" transform="rotate(105 112.9 78.7)" fill="#7a4a2c"/><ellipse cx="118.3" cy="78.2" rx="3.9" ry="2.8" transform="rotate(95 118.3 78.2)" fill="#5e3822"/><ellipse cx="122.5" cy="76.9" rx="3.4" ry="2.2" transform="rotate(137 122.5 76.9)" fill="#693d22"/><ellipse cx="131.0" cy="76.6" rx="3.6" ry="2.5" transform="rotate(53 131.0 76.6)" fill="#925f3e"/><ellipse cx="139.4" cy="78.4" rx="3.7" ry="2.7" transform="rotate(88 139.4 78.4)" fill="#5e3822"/><ellipse cx="142.3" cy="79.8" rx="4.3" ry="2.6" transform="rotate(137 142.3 79.8)" fill="#4e2d1a"/><ellipse cx="150.4" cy="77.1" rx="3.3" ry="2.2" transform="rotate(148 150.4 77.1)" fill="#5e3822"/><ellipse cx="154.2" cy="77.7" rx="4.3" ry="2.9" transform="rotate(11 154.2 77.7)" fill="#5e3822"/><ellipse cx="161.4" cy="76.1" rx="3.6" ry="2.2" transform="rotate(47 161.4 76.1)" fill="#86573a"/><ellipse cx="169.7" cy="78.8" rx="3.6" ry="2.5" transform="rotate(30 169.7 78.8)" fill="#6b4026"/><ellipse cx="177.7" cy="78.3" rx="3.7" ry="2.5" transform="rotate(83 177.7 78.3)" fill="#7a4a2c"/><ellipse cx="184.4" cy="78.0" rx="4.0" ry="2.8" transform="rotate(160 184.4 78.0)" fill="#693d22"/><ellipse cx="186.9" cy="78.0" rx="4.3" ry="2.8" transform="rotate(31 186.9 78.0)" fill="#693d22"/><ellipse cx="-0.9" cy="84.2" rx="3.7" ry="2.6" transform="rotate(61 -0.9 84.2)" fill="#693d22"/><ellipse cx="4.4" cy="84.7" rx="3.6" ry="2.5" transform="rotate(90 4.4 84.7)" fill="#925f3e"/><ellipse cx="12.9" cy="83.5" rx="3.3" ry="2.2" transform="rotate(48 12.9 83.5)" fill="#86573a"/><ellipse cx="20.9" cy="84.3" rx="3.4" ry="2.2" transform="rotate(115 20.9 84.3)" fill="#5e3822"/><ellipse cx="26.3" cy="85.9" rx="3.6" ry="2.4" transform="rotate(15 26.3 85.9)" fill="#925f3e"/><ellipse cx="29.8" cy="84.3" rx="3.7" ry="2.2" transform="rotate(35 29.8 84.3)" fill="#693d22"/><ellipse cx="38.4" cy="83.7" rx="3.9" ry="2.9" transform="rotate(88 38.4 83.7)" fill="#4e2d1a"/><ellipse cx="43.1" cy="83.3" rx="4.0" ry="2.7" transform="rotate(167 43.1 83.3)" fill="#693d22"/><ellipse cx="49.8" cy="85.3" rx="4.1" ry="3.1" transform="rotate(165 49.8 85.3)" fill="#693d22"/><ellipse cx="56.3" cy="84.9" rx="3.6" ry="2.3" transform="rotate(159 56.3 84.9)" fill="#5e3822"/><ellipse cx="65.6" cy="83.2" rx="3.5" ry="2.6" transform="rotate(4 65.6 83.2)" fill="#86573a"/><ellipse cx="71.2" cy="83.9" rx="3.9" ry="2.8" transform="rotate(72 71.2 83.9)" fill="#693d22"/><ellipse cx="78.6" cy="85.9" rx="3.5" ry="2.2" transform="rotate(52 78.6 85.9)" fill="#4e2d1a"/><ellipse cx="82.3" cy="82.7" rx="4.0" ry="2.9" transform="rotate(177 82.3 82.7)" fill="#86573a"/><ellipse cx="90.3" cy="85.0" rx="4.0" ry="2.6" transform="rotate(73 90.3 85.0)" fill="#4e2d1a"/><ellipse cx="97.4" cy="85.5" rx="3.9" ry="2.9" transform="rotate(115 97.4 85.5)" fill="#4e2d1a"/><ellipse cx="101.0" cy="84.8" rx="3.3" ry="2.4" transform="rotate(90 101.0 84.8)" fill="#6b4026"/><ellipse cx="107.5" cy="84.5" rx="3.4" ry="2.1" transform="rotate(78 107.5 84.5)" fill="#4e2d1a"/><ellipse cx="114.1" cy="82.7" rx="3.9" ry="2.8" transform="rotate(170 114.1 82.7)" fill="#7a4a2c"/><ellipse cx="120.7" cy="82.2" rx="3.3" ry="2.3" transform="rotate(105 120.7 82.2)" fill="#7a4a2c"/><ellipse cx="130.3" cy="85.1" rx="3.6" ry="2.3" transform="rotate(94 130.3 85.1)" fill="#4e2d1a"/><ellipse cx="132.2" cy="82.4" rx="4.0" ry="2.4" transform="rotate(136 132.2 82.4)" fill="#86573a"/><ellipse cx="139.5" cy="82.8" rx="3.9" ry="2.5" transform="rotate(59 139.5 82.8)" fill="#5e3822"/><ellipse cx="146.4" cy="85.8" rx="3.6" ry="2.6" transform="rotate(154 146.4 85.8)" fill="#86573a"/><ellipse cx="153.2" cy="83.6" rx="3.5" ry="2.4" transform="rotate(173 153.2 83.6)" fill="#5e3822"/><ellipse cx="159.6" cy="83.9" rx="3.7" ry="2.6" transform="rotate(146 159.6 83.9)" fill="#86573a"/><ellipse cx="168.4" cy="83.0" rx="3.8" ry="2.9" transform="rotate(95 168.4 83.0)" fill="#6b4026"/><ellipse cx="171.2" cy="85.9" rx="3.9" ry="2.5" transform="rotate(174 171.2 85.9)" fill="#925f3e"/><ellipse cx="180.3" cy="84.9" rx="3.6" ry="2.6" transform="rotate(117 180.3 84.9)" fill="#693d22"/><ellipse cx="183.4" cy="82.2" rx="4.3" ry="3.2" transform="rotate(35 183.4 82.2)" fill="#7a4a2c"/><ellipse cx="4.9" cy="88.2" rx="3.4" ry="2.2" transform="rotate(125 4.9 88.2)" fill="#4e2d1a"/><ellipse cx="11.2" cy="92.0" rx="3.8" ry="2.7" transform="rotate(44 11.2 92.0)" fill="#925f3e"/><ellipse cx="16.5" cy="90.7" rx="3.9" ry="2.4" transform="rotate(128 16.5 90.7)" fill="#6b4026"/><ellipse cx="20.9" cy="90.3" rx="3.7" ry="2.4" transform="rotate(134 20.9 90.3)" fill="#693d22"/><ellipse cx="28.4" cy="88.4" rx="4.3" ry="3.1" transform="rotate(88 28.4 88.4)" fill="#86573a"/><ellipse cx="36.9" cy="91.7" rx="3.9" ry="2.6" transform="rotate(4 36.9 91.7)" fill="#925f3e"/><ellipse cx="43.2" cy="90.0" rx="3.7" ry="2.4" transform="rotate(160 43.2 90.0)" fill="#7a4a2c"/><ellipse cx="45.5" cy="88.4" rx="3.6" ry="2.3" transform="rotate(119 45.5 88.4)" fill="#6b4026"/><ellipse cx="54.0" cy="89.3" rx="3.9" ry="2.6" transform="rotate(55 54.0 89.3)" fill="#925f3e"/><ellipse cx="58.5" cy="90.9" rx="3.9" ry="2.7" transform="rotate(119 58.5 90.9)" fill="#693d22"/><ellipse cx="69.0" cy="91.9" rx="4.1" ry="2.7" transform="rotate(121 69.0 91.9)" fill="#693d22"/><ellipse cx="72.0" cy="88.9" rx="3.9" ry="2.7" transform="rotate(179 72.0 88.9)" fill="#4e2d1a"/><ellipse cx="79.5" cy="90.6" rx="3.5" ry="2.5" transform="rotate(97 79.5 90.6)" fill="#693d22"/><ellipse cx="85.4" cy="90.8" rx="3.3" ry="2.2" transform="rotate(138 85.4 90.8)" fill="#7a4a2c"/><ellipse cx="90.6" cy="89.5" rx="4.2" ry="2.7" transform="rotate(172 90.6 89.5)" fill="#693d22"/><ellipse cx="101.1" cy="88.2" rx="3.9" ry="2.8" transform="rotate(151 101.1 88.2)" fill="#4e2d1a"/><ellipse cx="103.2" cy="91.9" rx="4.0" ry="2.6" transform="rotate(66 103.2 91.9)" fill="#4e2d1a"/><ellipse cx="110.6" cy="90.8" rx="3.9" ry="2.6" transform="rotate(178 110.6 90.8)" fill="#6b4026"/><ellipse cx="119.5" cy="90.3" rx="4.1" ry="2.8" transform="rotate(4 119.5 90.3)" fill="#925f3e"/><ellipse cx="124.9" cy="90.1" rx="3.8" ry="2.4" transform="rotate(113 124.9 90.1)" fill="#4e2d1a"/><ellipse cx="131.8" cy="89.2" rx="4.1" ry="2.7" transform="rotate(26 131.8 89.2)" fill="#86573a"/><ellipse cx="135.1" cy="89.9" rx="3.9" ry="2.6" transform="rotate(4 135.1 89.9)" fill="#7a4a2c"/><ellipse cx="143.1" cy="91.0" rx="3.4" ry="2.2" transform="rotate(125 143.1 91.0)" fill="#693d22"/><ellipse cx="149.5" cy="88.9" rx="4.0" ry="2.5" transform="rotate(104 149.5 88.9)" fill="#86573a"/><ellipse cx="154.2" cy="89.5" rx="4.0" ry="2.5" transform="rotate(56 154.2 89.5)" fill="#925f3e"/><ellipse cx="164.7" cy="90.4" rx="3.5" ry="2.1" transform="rotate(164 164.7 90.4)" fill="#693d22"/><ellipse cx="170.9" cy="91.0" rx="3.6" ry="2.4" transform="rotate(125 170.9 91.0)" fill="#5e3822"/><ellipse cx="176.6" cy="89.2" rx="3.6" ry="2.5" transform="rotate(65 176.6 89.2)" fill="#7a4a2c"/><ellipse cx="181.4" cy="91.5" rx="3.5" ry="2.4" transform="rotate(56 181.4 91.5)" fill="#4e2d1a"/><ellipse cx="190.7" cy="91.2" rx="3.6" ry="2.4" transform="rotate(65 190.7 91.2)" fill="#86573a"/><ellipse cx="-1.4" cy="96.5" rx="3.5" ry="2.6" transform="rotate(61 -1.4 96.5)" fill="#4e2d1a"/><ellipse cx="8.3" cy="94.7" rx="3.5" ry="2.4" transform="rotate(137 8.3 94.7)" fill="#4e2d1a"/><ellipse cx="12.1" cy="96.8" rx="3.5" ry="2.6" transform="rotate(157 12.1 96.8)" fill="#6b4026"/><ellipse cx="19.1" cy="94.2" rx="3.8" ry="2.7" transform="rotate(153 19.1 94.2)" fill="#693d22"/><ellipse cx="23.4" cy="97.4" rx="3.8" ry="2.6" transform="rotate(17 23.4 97.4)" fill="#5e3822"/><ellipse cx="32.5" cy="97.0" rx="3.8" ry="2.6" transform="rotate(70 32.5 97.0)" fill="#925f3e"/><ellipse cx="36.4" cy="94.1" rx="4.0" ry="2.5" transform="rotate(49 36.4 94.1)" fill="#693d22"/><ellipse cx="43.1" cy="96.7" rx="3.4" ry="2.4" transform="rotate(40 43.1 96.7)" fill="#5e3822"/><ellipse cx="50.5" cy="95.4" rx="3.5" ry="2.3" transform="rotate(47 50.5 95.4)" fill="#5e3822"/><ellipse cx="56.9" cy="95.7" rx="3.5" ry="2.2" transform="rotate(29 56.9 95.7)" fill="#5e3822"/><ellipse cx="63.8" cy="96.0" rx="3.6" ry="2.6" transform="rotate(136 63.8 96.0)" fill="#86573a"/><ellipse cx="71.9" cy="95.8" rx="4.0" ry="2.6" transform="rotate(147 71.9 95.8)" fill="#7a4a2c"/><ellipse cx="76.8" cy="95.9" rx="3.8" ry="2.6" transform="rotate(142 76.8 95.9)" fill="#925f3e"/><ellipse cx="81.8" cy="94.1" rx="3.6" ry="2.2" transform="rotate(143 81.8 94.1)" fill="#86573a"/><ellipse cx="89.4" cy="96.1" rx="3.7" ry="2.7" transform="rotate(100 89.4 96.1)" fill="#4e2d1a"/><ellipse cx="97.0" cy="97.0" rx="3.8" ry="2.5" transform="rotate(100 97.0 97.0)" fill="#86573a"/><ellipse cx="104.9" cy="97.7" rx="4.1" ry="2.5" transform="rotate(44 104.9 97.7)" fill="#7a4a2c"/><ellipse cx="109.0" cy="96.1" rx="3.6" ry="2.6" transform="rotate(93 109.0 96.1)" fill="#5e3822"/><ellipse cx="115.4" cy="94.5" rx="4.2" ry="3.0" transform="rotate(129 115.4 94.5)" fill="#925f3e"/><ellipse cx="119.7" cy="96.2" rx="4.2" ry="2.8" transform="rotate(137 119.7 96.2)" fill="#86573a"/><ellipse cx="125.8" cy="96.8" rx="3.4" ry="2.4" transform="rotate(44 125.8 96.8)" fill="#4e2d1a"/><ellipse cx="133.0" cy="95.8" rx="3.8" ry="2.5" transform="rotate(104 133.0 95.8)" fill="#693d22"/><ellipse cx="141.4" cy="94.0" rx="4.0" ry="3.0" transform="rotate(109 141.4 94.0)" fill="#6b4026"/><ellipse cx="148.5" cy="95.3" rx="4.3" ry="2.9" transform="rotate(18 148.5 95.3)" fill="#693d22"/><ellipse cx="152.0" cy="94.8" rx="4.1" ry="2.6" transform="rotate(30 152.0 94.8)" fill="#7a4a2c"/><ellipse cx="157.7" cy="97.2" rx="3.4" ry="2.2" transform="rotate(5 157.7 97.2)" fill="#6b4026"/><ellipse cx="168.3" cy="96.6" rx="4.3" ry="3.1" transform="rotate(162 168.3 96.6)" fill="#693d22"/><ellipse cx="171.2" cy="96.5" rx="3.9" ry="2.9" transform="rotate(8 171.2 96.5)" fill="#86573a"/><ellipse cx="178.2" cy="97.5" rx="4.0" ry="2.6" transform="rotate(117 178.2 97.5)" fill="#4e2d1a"/><ellipse cx="185.6" cy="97.9" rx="3.5" ry="2.3" transform="rotate(165 185.6 97.9)" fill="#693d22"/><ellipse cx="0.9" cy="101.0" rx="4.0" ry="2.6" transform="rotate(168 0.9 101.0)" fill="#693d22"/><ellipse cx="10.4" cy="103.9" rx="4.0" ry="2.8" transform="rotate(69 10.4 103.9)" fill="#693d22"/><ellipse cx="14.9" cy="100.0" rx="3.7" ry="2.6" transform="rotate(22 14.9 100.0)" fill="#7a4a2c"/><ellipse cx="19.9" cy="100.1" rx="4.3" ry="2.8" transform="rotate(59 19.9 100.1)" fill="#6b4026"/><ellipse cx="30.8" cy="102.6" rx="3.9" ry="2.5" transform="rotate(2 30.8 102.6)" fill="#693d22"/><ellipse cx="36.3" cy="102.3" rx="3.5" ry="2.2" transform="rotate(130 36.3 102.3)" fill="#5e3822"/><ellipse cx="41.6" cy="103.8" rx="3.4" ry="2.3" transform="rotate(41 41.6 103.8)" fill="#4e2d1a"/><ellipse cx="48.4" cy="103.0" rx="4.1" ry="2.9" transform="rotate(9 48.4 103.0)" fill="#925f3e"/><ellipse cx="52.0" cy="101.1" rx="3.9" ry="2.9" transform="rotate(43 52.0 101.1)" fill="#693d22"/><ellipse cx="60.0" cy="100.3" rx="3.3" ry="2.4" transform="rotate(108 60.0 100.3)" fill="#925f3e"/><ellipse cx="64.7" cy="100.5" rx="3.6" ry="2.3" transform="rotate(20 64.7 100.5)" fill="#6b4026"/><ellipse cx="71.3" cy="102.1" rx="3.4" ry="2.4" transform="rotate(142 71.3 102.1)" fill="#4e2d1a"/><ellipse cx="78.0" cy="102.3" rx="3.8" ry="2.5" transform="rotate(85 78.0 102.3)" fill="#5e3822"/><ellipse cx="88.6" cy="100.1" rx="4.1" ry="3.0" transform="rotate(76 88.6 100.1)" fill="#925f3e"/><ellipse cx="93.0" cy="101.6" rx="3.8" ry="2.8" transform="rotate(24 93.0 101.6)" fill="#4e2d1a"/><ellipse cx="100.5" cy="103.5" rx="4.2" ry="2.6" transform="rotate(118 100.5 103.5)" fill="#7a4a2c"/><ellipse cx="104.3" cy="101.2" rx="4.1" ry="2.9" transform="rotate(126 104.3 101.2)" fill="#693d22"/><ellipse cx="110.2" cy="101.6" rx="4.2" ry="3.0" transform="rotate(20 110.2 101.6)" fill="#5e3822"/><ellipse cx="119.4" cy="103.5" rx="3.7" ry="2.5" transform="rotate(173 119.4 103.5)" fill="#86573a"/><ellipse cx="126.5" cy="101.1" rx="3.5" ry="2.4" transform="rotate(49 126.5 101.1)" fill="#86573a"/><ellipse cx="129.2" cy="101.6" rx="3.9" ry="2.4" transform="rotate(141 129.2 101.6)" fill="#5e3822"/><ellipse cx="137.1" cy="102.3" rx="3.5" ry="2.6" transform="rotate(70 137.1 102.3)" fill="#7a4a2c"/><ellipse cx="143.5" cy="103.4" rx="4.3" ry="2.7" transform="rotate(66 143.5 103.4)" fill="#693d22"/><ellipse cx="150.7" cy="102.2" rx="3.6" ry="2.3" transform="rotate(109 150.7 102.2)" fill="#693d22"/><ellipse cx="154.1" cy="100.0" rx="3.3" ry="2.1" transform="rotate(50 154.1 100.0)" fill="#86573a"/><ellipse cx="163.7" cy="100.3" rx="4.0" ry="2.5" transform="rotate(87 163.7 100.3)" fill="#693d22"/><ellipse cx="169.2" cy="101.9" rx="4.0" ry="2.5" transform="rotate(101 169.2 101.9)" fill="#6b4026"/><ellipse cx="174.9" cy="103.0" rx="3.8" ry="2.6" transform="rotate(27 174.9 103.0)" fill="#925f3e"/><ellipse cx="183.0" cy="103.8" rx="3.4" ry="2.4" transform="rotate(123 183.0 103.8)" fill="#4e2d1a"/><ellipse cx="188.2" cy="100.7" rx="4.0" ry="2.8" transform="rotate(121 188.2 100.7)" fill="#693d22"/><ellipse cx="-2.2" cy="106.4" rx="3.3" ry="2.2" transform="rotate(148 -2.2 106.4)" fill="#693d22"/><ellipse cx="5.2" cy="107.8" rx="4.1" ry="3.1" transform="rotate(10 5.2 107.8)" fill="#693d22"/><ellipse cx="10.4" cy="106.9" rx="3.3" ry="2.1" transform="rotate(12 10.4 106.9)" fill="#86573a"/><ellipse cx="18.4" cy="106.4" rx="4.0" ry="2.9" transform="rotate(165 18.4 106.4)" fill="#7a4a2c"/><ellipse cx="26.5" cy="108.9" rx="4.2" ry="2.9" transform="rotate(105 26.5 108.9)" fill="#925f3e"/><ellipse cx="29.8" cy="108.2" rx="3.6" ry="2.4" transform="rotate(51 29.8 108.2)" fill="#4e2d1a"/><ellipse cx="38.2" cy="106.0" rx="3.8" ry="2.4" transform="rotate(108 38.2 106.0)" fill="#86573a"/><ellipse cx="43.1" cy="107.1" rx="3.8" ry="2.5" transform="rotate(66 43.1 107.1)" fill="#5e3822"/><ellipse cx="53.7" cy="109.2" rx="3.6" ry="2.4" transform="rotate(91 53.7 109.2)" fill="#925f3e"/><ellipse cx="56.5" cy="109.8" rx="4.0" ry="2.9" transform="rotate(123 56.5 109.8)" fill="#925f3e"/><ellipse cx="63.3" cy="110.0" rx="3.3" ry="2.2" transform="rotate(14 63.3 110.0)" fill="#693d22"/><ellipse cx="72.7" cy="107.8" rx="3.9" ry="2.4" transform="rotate(41 72.7 107.8)" fill="#6b4026"/><ellipse cx="76.5" cy="107.2" rx="3.7" ry="2.7" transform="rotate(38 76.5 107.2)" fill="#5e3822"/><ellipse cx="80.7" cy="106.7" rx="3.4" ry="2.1" transform="rotate(20 80.7 106.7)" fill="#693d22"/><ellipse cx="90.8" cy="108.3" rx="3.5" ry="2.2" transform="rotate(33 90.8 108.3)" fill="#5e3822"/><ellipse cx="94.9" cy="106.2" rx="4.0" ry="2.7" transform="rotate(14 94.9 106.2)" fill="#86573a"/><ellipse cx="100.1" cy="108.6" rx="3.8" ry="2.8" transform="rotate(142 100.1 108.6)" fill="#6b4026"/><ellipse cx="110.4" cy="109.6" rx="3.5" ry="2.3" transform="rotate(55 110.4 109.6)" fill="#4e2d1a"/><ellipse cx="113.7" cy="108.6" rx="3.4" ry="2.5" transform="rotate(171 113.7 108.6)" fill="#86573a"/><ellipse cx="120.0" cy="106.2" rx="3.7" ry="2.7" transform="rotate(175 120.0 106.2)" fill="#925f3e"/><ellipse cx="128.0" cy="106.6" rx="3.8" ry="2.9" transform="rotate(156 128.0 106.6)" fill="#6b4026"/><ellipse cx="132.8" cy="108.1" rx="4.2" ry="2.9" transform="rotate(47 132.8 108.1)" fill="#6b4026"/><ellipse cx="140.0" cy="107.7" rx="4.0" ry="2.8" transform="rotate(83 140.0 107.7)" fill="#5e3822"/><ellipse cx="147.2" cy="106.9" rx="3.5" ry="2.3" transform="rotate(152 147.2 106.9)" fill="#4e2d1a"/><ellipse cx="152.9" cy="107.5" rx="3.5" ry="2.6" transform="rotate(109 152.9 107.5)" fill="#6b4026"/><ellipse cx="157.9" cy="108.0" rx="3.8" ry="2.9" transform="rotate(149 157.9 108.0)" fill="#925f3e"/><ellipse cx="168.3" cy="109.9" rx="3.7" ry="2.6" transform="rotate(67 168.3 109.9)" fill="#4e2d1a"/><ellipse cx="174.2" cy="106.5" rx="3.6" ry="2.4" transform="rotate(101 174.2 106.5)" fill="#7a4a2c"/><ellipse cx="180.7" cy="108.7" rx="4.1" ry="2.7" transform="rotate(116 180.7 108.7)" fill="#7a4a2c"/><ellipse cx="185.0" cy="108.3" rx="4.3" ry="2.7" transform="rotate(164 185.0 108.3)" fill="#86573a"/><ellipse cx="2.4" cy="112.5" rx="3.4" ry="2.4" transform="rotate(161 2.4 112.5)" fill="#5e3822"/><ellipse cx="9.6" cy="115.1" rx="3.8" ry="2.3" transform="rotate(12 9.6 115.1)" fill="#693d22"/><ellipse cx="15.7" cy="112.8" rx="3.6" ry="2.4" transform="rotate(50 15.7 112.8)" fill="#693d22"/><ellipse cx="22.1" cy="112.8" rx="3.9" ry="2.8" transform="rotate(89 22.1 112.8)" fill="#5e3822"/><ellipse cx="26.7" cy="112.3" rx="4.1" ry="2.8" transform="rotate(3 26.7 112.3)" fill="#4e2d1a"/><ellipse cx="34.8" cy="114.0" rx="3.6" ry="2.5" transform="rotate(79 34.8 114.0)" fill="#7a4a2c"/><ellipse cx="43.8" cy="113.4" rx="4.2" ry="3.1" transform="rotate(103 43.8 113.4)" fill="#6b4026"/><ellipse cx="47.0" cy="114.5" rx="3.5" ry="2.4" transform="rotate(91 47.0 114.5)" fill="#6b4026"/><ellipse cx="53.8" cy="112.6" rx="4.3" ry="2.9" transform="rotate(161 53.8 112.6)" fill="#5e3822"/><ellipse cx="61.9" cy="114.6" rx="3.8" ry="2.7" transform="rotate(120 61.9 114.6)" fill="#6b4026"/><ellipse cx="67.1" cy="115.5" rx="4.1" ry="2.9" transform="rotate(161 67.1 115.5)" fill="#86573a"/><ellipse cx="73.7" cy="115.2" rx="4.1" ry="2.5" transform="rotate(26 73.7 115.2)" fill="#5e3822"/><ellipse cx="81.6" cy="115.8" rx="4.1" ry="2.5" transform="rotate(25 81.6 115.8)" fill="#6b4026"/><ellipse cx="86.5" cy="113.1" rx="4.1" ry="2.7" transform="rotate(152 86.5 113.1)" fill="#925f3e"/><ellipse cx="92.2" cy="114.0" rx="3.7" ry="2.7" transform="rotate(38 92.2 114.0)" fill="#7a4a2c"/><ellipse cx="97.8" cy="115.1" rx="3.9" ry="2.7" transform="rotate(74 97.8 115.1)" fill="#86573a"/><ellipse cx="106.2" cy="113.7" rx="3.3" ry="2.0" transform="rotate(84 106.2 113.7)" fill="#86573a"/><ellipse cx="110.0" cy="112.8" rx="3.8" ry="2.6" transform="rotate(1 110.0 112.8)" fill="#6b4026"/><ellipse cx="119.9" cy="113.5" rx="3.5" ry="2.5" transform="rotate(176 119.9 113.5)" fill="#6b4026"/><ellipse cx="125.6" cy="115.5" rx="3.8" ry="2.6" transform="rotate(116 125.6 115.5)" fill="#7a4a2c"/><ellipse cx="129.3" cy="112.9" rx="4.2" ry="3.1" transform="rotate(85 129.3 112.9)" fill="#6b4026"/><ellipse cx="139.4" cy="112.4" rx="3.6" ry="2.6" transform="rotate(97 139.4 112.4)" fill="#7a4a2c"/><ellipse cx="143.5" cy="113.8" rx="3.8" ry="2.5" transform="rotate(82 143.5 113.8)" fill="#693d22"/><ellipse cx="152.5" cy="115.5" rx="4.3" ry="3.0" transform="rotate(28 152.5 115.5)" fill="#86573a"/><ellipse cx="156.0" cy="113.4" rx="3.3" ry="2.0" transform="rotate(77 156.0 113.4)" fill="#6b4026"/><ellipse cx="164.7" cy="112.1" rx="3.6" ry="2.4" transform="rotate(56 164.7 112.1)" fill="#6b4026"/><ellipse cx="167.2" cy="114.7" rx="3.9" ry="2.5" transform="rotate(33 167.2 114.7)" fill="#7a4a2c"/><ellipse cx="173.4" cy="115.1" rx="3.5" ry="2.5" transform="rotate(142 173.4 115.1)" fill="#5e3822"/><ellipse cx="180.7" cy="113.5" rx="3.8" ry="2.3" transform="rotate(151 180.7 113.5)" fill="#5e3822"/><ellipse cx="188.4" cy="113.4" rx="3.8" ry="2.7" transform="rotate(47 188.4 113.4)" fill="#925f3e"/><ellipse cx="-2.2" cy="119.2" rx="3.6" ry="2.5" transform="rotate(17 -2.2 119.2)" fill="#925f3e"/><ellipse cx="8.9" cy="118.8" rx="4.1" ry="2.5" transform="rotate(54 8.9 118.8)" fill="#4e2d1a"/><ellipse cx="10.7" cy="120.3" rx="3.6" ry="2.2" transform="rotate(75 10.7 120.3)" fill="#925f3e"/><ellipse cx="19.2" cy="118.2" rx="3.6" ry="2.3" transform="rotate(75 19.2 118.2)" fill="#5e3822"/><ellipse cx="26.1" cy="121.3" rx="3.4" ry="2.1" transform="rotate(132 26.1 121.3)" fill="#7a4a2c"/><ellipse cx="31.7" cy="120.0" rx="4.1" ry="2.6" transform="rotate(49 31.7 120.0)" fill="#7a4a2c"/><ellipse cx="37.9" cy="120.3" rx="3.6" ry="2.2" transform="rotate(121 37.9 120.3)" fill="#7a4a2c"/><ellipse cx="45.2" cy="121.2" rx="3.4" ry="2.4" transform="rotate(1 45.2 121.2)" fill="#925f3e"/><ellipse cx="50.2" cy="118.5" rx="3.3" ry="2.2" transform="rotate(4 50.2 118.5)" fill="#5e3822"/><ellipse cx="56.9" cy="119.8" rx="3.8" ry="2.3" transform="rotate(18 56.9 119.8)" fill="#925f3e"/><ellipse cx="65.7" cy="120.6" rx="3.4" ry="2.2" transform="rotate(49 65.7 120.6)" fill="#4e2d1a"/><ellipse cx="71.9" cy="121.3" rx="4.2" ry="3.0" transform="rotate(121 71.9 121.3)" fill="#4e2d1a"/><ellipse cx="79.1" cy="121.6" rx="4.1" ry="2.8" transform="rotate(178 79.1 121.6)" fill="#5e3822"/><ellipse cx="84.9" cy="121.3" rx="3.8" ry="2.6" transform="rotate(160 84.9 121.3)" fill="#86573a"/><ellipse cx="89.5" cy="119.5" rx="4.2" ry="2.7" transform="rotate(101 89.5 119.5)" fill="#6b4026"/><ellipse cx="98.0" cy="121.0" rx="3.4" ry="2.4" transform="rotate(148 98.0 121.0)" fill="#4e2d1a"/><ellipse cx="99.9" cy="118.9" rx="4.0" ry="3.0" transform="rotate(140 99.9 118.9)" fill="#7a4a2c"/><ellipse cx="111.1" cy="119.6" rx="3.8" ry="2.8" transform="rotate(106 111.1 119.6)" fill="#693d22"/><ellipse cx="115.3" cy="118.1" rx="3.8" ry="2.5" transform="rotate(19 115.3 118.1)" fill="#4e2d1a"/><ellipse cx="123.8" cy="118.5" rx="3.7" ry="2.4" transform="rotate(121 123.8 118.5)" fill="#5e3822"/><ellipse cx="126.4" cy="119.5" rx="3.8" ry="2.6" transform="rotate(24 126.4 119.5)" fill="#7a4a2c"/><ellipse cx="136.6" cy="121.7" rx="4.2" ry="3.0" transform="rotate(41 136.6 121.7)" fill="#6b4026"/><ellipse cx="139.3" cy="121.7" rx="3.8" ry="2.7" transform="rotate(118 139.3 121.7)" fill="#7a4a2c"/><ellipse cx="146.3" cy="118.1" rx="3.4" ry="2.1" transform="rotate(132 146.3 118.1)" fill="#925f3e"/><ellipse cx="155.8" cy="120.6" rx="3.4" ry="2.1" transform="rotate(15 155.8 120.6)" fill="#925f3e"/><ellipse cx="158.8" cy="118.4" rx="4.3" ry="3.2" transform="rotate(129 158.8 118.4)" fill="#4e2d1a"/><ellipse cx="164.5" cy="119.4" rx="4.2" ry="3.0" transform="rotate(172 164.5 119.4)" fill="#86573a"/><ellipse cx="173.6" cy="119.3" rx="3.9" ry="2.5" transform="rotate(175 173.6 119.3)" fill="#6b4026"/><ellipse cx="177.6" cy="121.0" rx="3.4" ry="2.1" transform="rotate(126 177.6 121.0)" fill="#4e2d1a"/><ellipse cx="187.3" cy="121.3" rx="3.9" ry="2.4" transform="rotate(132 187.3 121.3)" fill="#925f3e"/><ellipse cx="4.2" cy="124.2" rx="3.7" ry="2.5" transform="rotate(135 4.2 124.2)" fill="#5e3822"/><ellipse cx="11.4" cy="128.0" rx="3.7" ry="2.6" transform="rotate(120 11.4 128.0)" fill="#693d22"/><ellipse cx="15.5" cy="124.2" rx="4.3" ry="3.1" transform="rotate(68 15.5 124.2)" fill="#693d22"/><ellipse cx="23.7" cy="125.8" rx="3.5" ry="2.3" transform="rotate(123 23.7 125.8)" fill="#86573a"/><ellipse cx="29.7" cy="124.6" rx="4.3" ry="3.2" transform="rotate(150 29.7 124.6)" fill="#6b4026"/><ellipse cx="33.6" cy="125.7" rx="4.0" ry="2.9" transform="rotate(122 33.6 125.7)" fill="#5e3822"/><ellipse cx="42.3" cy="126.8" rx="3.5" ry="2.2" transform="rotate(32 42.3 126.8)" fill="#5e3822"/><ellipse cx="47.0" cy="124.3" rx="4.0" ry="2.4" transform="rotate(123 47.0 124.3)" fill="#5e3822"/><ellipse cx="55.0" cy="126.4" rx="4.1" ry="3.1" transform="rotate(146 55.0 126.4)" fill="#4e2d1a"/><ellipse cx="60.4" cy="124.1" rx="3.9" ry="2.7" transform="rotate(155 60.4 124.1)" fill="#86573a"/><ellipse cx="66.3" cy="124.2" rx="3.9" ry="2.6" transform="rotate(88 66.3 124.2)" fill="#4e2d1a"/><ellipse cx="73.9" cy="127.4" rx="4.1" ry="3.0" transform="rotate(83 73.9 127.4)" fill="#693d22"/><ellipse cx="79.3" cy="124.0" rx="3.6" ry="2.4" transform="rotate(179 79.3 124.0)" fill="#4e2d1a"/><ellipse cx="85.3" cy="124.3" rx="4.2" ry="2.9" transform="rotate(134 85.3 124.3)" fill="#693d22"/><ellipse cx="90.7" cy="126.4" rx="3.7" ry="2.7" transform="rotate(61 90.7 126.4)" fill="#693d22"/><ellipse cx="97.5" cy="126.1" rx="3.5" ry="2.1" transform="rotate(54 97.5 126.1)" fill="#693d22"/><ellipse cx="104.4" cy="126.0" rx="3.8" ry="2.4" transform="rotate(96 104.4 126.0)" fill="#5e3822"/><ellipse cx="111.3" cy="127.6" rx="4.3" ry="3.0" transform="rotate(145 111.3 127.6)" fill="#86573a"/><ellipse cx="116.4" cy="125.2" rx="3.7" ry="2.4" transform="rotate(45 116.4 125.2)" fill="#5e3822"/><ellipse cx="126.3" cy="128.0" rx="4.1" ry="2.5" transform="rotate(102 126.3 128.0)" fill="#86573a"/><ellipse cx="130.7" cy="125.9" rx="3.7" ry="2.4" transform="rotate(174 130.7 125.9)" fill="#5e3822"/><ellipse cx="139.8" cy="125.5" rx="3.4" ry="2.4" transform="rotate(47 139.8 125.5)" fill="#6b4026"/><ellipse cx="142.2" cy="125.8" rx="3.7" ry="2.7" transform="rotate(176 142.2 125.8)" fill="#86573a"/><ellipse cx="152.7" cy="127.6" rx="4.2" ry="2.7" transform="rotate(148 152.7 127.6)" fill="#5e3822"/><ellipse cx="157.1" cy="127.2" rx="3.8" ry="2.6" transform="rotate(124 157.1 127.2)" fill="#6b4026"/><ellipse cx="164.1" cy="126.1" rx="3.3" ry="2.4" transform="rotate(11 164.1 126.1)" fill="#925f3e"/><ellipse cx="171.0" cy="126.0" rx="3.7" ry="2.3" transform="rotate(126 171.0 126.0)" fill="#5e3822"/><ellipse cx="176.5" cy="124.0" rx="3.8" ry="2.8" transform="rotate(59 176.5 124.0)" fill="#6b4026"/><ellipse cx="183.2" cy="125.3" rx="4.1" ry="2.8" transform="rotate(74 183.2 125.3)" fill="#86573a"/><ellipse cx="190.3" cy="127.5" rx="4.0" ry="2.6" transform="rotate(15 190.3 127.5)" fill="#4e2d1a"/><ellipse cx="-0.7" cy="130.8" rx="3.3" ry="2.5" transform="rotate(135 -0.7 130.8)" fill="#925f3e"/><ellipse cx="6.8" cy="130.2" rx="3.5" ry="2.1" transform="rotate(110 6.8 130.2)" fill="#86573a"/><ellipse cx="12.2" cy="134.0" rx="3.6" ry="2.2" transform="rotate(3 12.2 134.0)" fill="#925f3e"/><ellipse cx="16.8" cy="132.0" rx="3.7" ry="2.4" transform="rotate(171 16.8 132.0)" fill="#7a4a2c"/><ellipse cx="24.6" cy="130.8" rx="3.7" ry="2.5" transform="rotate(64 24.6 130.8)" fill="#86573a"/><ellipse cx="33.9" cy="130.2" rx="4.0" ry="2.5" transform="rotate(124 33.9 130.2)" fill="#925f3e"/><ellipse cx="39.9" cy="130.8" rx="3.6" ry="2.4" transform="rotate(89 39.9 130.8)" fill="#5e3822"/><ellipse cx="46.9" cy="132.2" rx="3.4" ry="2.2" transform="rotate(164 46.9 132.2)" fill="#5e3822"/><ellipse cx="49.6" cy="132.7" rx="3.3" ry="2.4" transform="rotate(156 49.6 132.7)" fill="#925f3e"/><ellipse cx="56.9" cy="130.8" rx="3.7" ry="2.6" transform="rotate(118 56.9 130.8)" fill="#5e3822"/><ellipse cx="63.3" cy="131.2" rx="3.4" ry="2.1" transform="rotate(133 63.3 131.2)" fill="#4e2d1a"/><ellipse cx="72.0" cy="131.0" rx="3.7" ry="2.7" transform="rotate(1 72.0 131.0)" fill="#86573a"/><ellipse cx="76.2" cy="131.0" rx="3.7" ry="2.3" transform="rotate(87 76.2 131.0)" fill="#6b4026"/><ellipse cx="81.3" cy="133.4" rx="3.5" ry="2.6" transform="rotate(92 81.3 133.4)" fill="#7a4a2c"/><ellipse cx="89.2" cy="130.2" rx="3.4" ry="2.5" transform="rotate(153 89.2 130.2)" fill="#693d22"/><ellipse cx="95.4" cy="133.9" rx="3.5" ry="2.5" transform="rotate(170 95.4 133.9)" fill="#6b4026"/><ellipse cx="104.9" cy="131.0" rx="3.8" ry="2.5" transform="rotate(153 104.9 131.0)" fill="#925f3e"/><ellipse cx="108.7" cy="130.5" rx="3.9" ry="2.4" transform="rotate(24 108.7 130.5)" fill="#86573a"/><ellipse cx="114.0" cy="133.6" rx="4.3" ry="3.0" transform="rotate(105 114.0 133.6)" fill="#4e2d1a"/><ellipse cx="119.8" cy="132.0" rx="3.3" ry="2.4" transform="rotate(123 119.8 132.0)" fill="#925f3e"/><ellipse cx="128.8" cy="133.5" rx="3.5" ry="2.4" transform="rotate(131 128.8 133.5)" fill="#925f3e"/><ellipse cx="133.0" cy="131.4" rx="3.4" ry="2.4" transform="rotate(85 133.0 131.4)" fill="#6b4026"/><ellipse cx="139.7" cy="131.7" rx="4.2" ry="3.1" transform="rotate(136 139.7 131.7)" fill="#925f3e"/><ellipse cx="149.3" cy="131.1" rx="3.9" ry="2.4" transform="rotate(122 149.3 131.1)" fill="#86573a"/><ellipse cx="153.6" cy="130.6" rx="3.9" ry="2.4" transform="rotate(83 153.6 130.6)" fill="#5e3822"/><ellipse cx="161.3" cy="131.9" rx="3.5" ry="2.1" transform="rotate(68 161.3 131.9)" fill="#86573a"/><ellipse cx="166.1" cy="130.2" rx="4.1" ry="2.8" transform="rotate(73 166.1 130.2)" fill="#6b4026"/><ellipse cx="173.7" cy="132.9" rx="3.4" ry="2.3" transform="rotate(118 173.7 132.9)" fill="#5e3822"/><ellipse cx="177.4" cy="133.3" rx="3.9" ry="2.9" transform="rotate(100 177.4 133.3)" fill="#6b4026"/><ellipse cx="187.2" cy="133.7" rx="3.9" ry="2.9" transform="rotate(103 187.2 133.7)" fill="#86573a"/><ellipse cx="0.7" cy="136.8" rx="3.7" ry="2.7" transform="rotate(170 0.7 136.8)" fill="#86573a"/><ellipse cx="7.2" cy="136.6" rx="3.5" ry="2.3" transform="rotate(152 7.2 136.6)" fill="#86573a"/><ellipse cx="14.3" cy="136.8" rx="3.3" ry="2.0" transform="rotate(145 14.3 136.8)" fill="#925f3e"/><ellipse cx="21.7" cy="138.6" rx="3.7" ry="2.4" transform="rotate(33 21.7 138.6)" fill="#6b4026"/><ellipse cx="30.7" cy="139.0" rx="3.6" ry="2.5" transform="rotate(52 30.7 139.0)" fill="#925f3e"/><ellipse cx="33.5" cy="139.0" rx="4.1" ry="2.6" transform="rotate(99 33.5 139.0)" fill="#6b4026"/><ellipse cx="43.7" cy="138.3" rx="3.6" ry="2.5" transform="rotate(56 43.7 138.3)" fill="#5e3822"/><ellipse cx="49.2" cy="138.3" rx="3.5" ry="2.2" transform="rotate(34 49.2 138.3)" fill="#693d22"/><ellipse cx="52.4" cy="139.0" rx="3.6" ry="2.3" transform="rotate(168 52.4 139.0)" fill="#925f3e"/><ellipse cx="61.2" cy="138.9" rx="3.5" ry="2.4" transform="rotate(44 61.2 138.9)" fill="#6b4026"/><ellipse cx="67.4" cy="137.3" rx="3.7" ry="2.5" transform="rotate(44 67.4 137.3)" fill="#693d22"/><ellipse cx="72.9" cy="136.7" rx="4.2" ry="2.9" transform="rotate(44 72.9 136.7)" fill="#5e3822"/><ellipse cx="79.5" cy="139.4" rx="3.8" ry="2.6" transform="rotate(109 79.5 139.4)" fill="#86573a"/><ellipse cx="83.9" cy="136.7" rx="4.1" ry="2.8" transform="rotate(53 83.9 136.7)" fill="#86573a"/><ellipse cx="92.3" cy="139.5" rx="4.2" ry="2.7" transform="rotate(103 92.3 139.5)" fill="#86573a"/><ellipse cx="101.1" cy="137.9" rx="4.3" ry="2.9" transform="rotate(125 101.1 137.9)" fill="#693d22"/><ellipse cx="104.3" cy="136.8" rx="3.5" ry="2.1" transform="rotate(94 104.3 136.8)" fill="#6b4026"/><ellipse cx="112.2" cy="138.7" rx="4.1" ry="2.9" transform="rotate(85 112.2 138.7)" fill="#6b4026"/><ellipse cx="117.2" cy="137.9" rx="4.0" ry="2.5" transform="rotate(132 117.2 137.9)" fill="#86573a"/><ellipse cx="126.8" cy="137.2" rx="3.6" ry="2.5" transform="rotate(38 126.8 137.2)" fill="#7a4a2c"/><ellipse cx="130.4" cy="137.7" rx="4.0" ry="2.9" transform="rotate(33 130.4 137.7)" fill="#6b4026"/><ellipse cx="139.8" cy="138.0" rx="4.3" ry="3.0" transform="rotate(69 139.8 138.0)" fill="#5e3822"/><ellipse cx="141.9" cy="137.3" rx="4.1" ry="2.9" transform="rotate(41 141.9 137.3)" fill="#925f3e"/><ellipse cx="149.9" cy="139.0" rx="3.9" ry="2.7" transform="rotate(99 149.9 139.0)" fill="#693d22"/><ellipse cx="158.3" cy="137.1" rx="4.2" ry="2.8" transform="rotate(9 158.3 137.1)" fill="#4e2d1a"/><ellipse cx="165.3" cy="137.9" rx="3.5" ry="2.3" transform="rotate(64 165.3 137.9)" fill="#6b4026"/><ellipse cx="167.0" cy="136.6" rx="4.1" ry="2.6" transform="rotate(102 167.0 136.6)" fill="#6b4026"/><ellipse cx="178.3" cy="136.4" rx="4.2" ry="2.5" transform="rotate(176 178.3 136.4)" fill="#4e2d1a"/><ellipse cx="180.1" cy="139.1" rx="4.3" ry="3.1" transform="rotate(66 180.1 139.1)" fill="#7a4a2c"/><ellipse cx="190.4" cy="136.5" rx="3.8" ry="2.6" transform="rotate(100 190.4 136.5)" fill="#925f3e"/><rect width="181" height="139" fill="url(#cofg)"/><defs><linearGradient id="cofg" x1="0" y1="0" x2="1" y2="1"><stop offset="0" stop-color="#000" stop-opacity="0.08"/><stop offset="1" stop-color="#000" stop-opacity="0.22"/></linearGradient></defs></svg>
<svg class="a" style="left:659.5px;top:722.7px" width="182" height="82" viewBox="0 0 182 82">
<defs>
<linearGradient id="sky" x1="0" y1="0" x2="1" y2="1"><stop offset="0" stop-color="#5b9cd8"/><stop offset="1" stop-color="#74addf"/></linearGradient>
</defs>
<rect width="182" height="82" fill="url(#sky)"/>
<defs><filter id="blr" x="-20%" y="-20%" width="140%" height="140%"><feGaussianBlur stdDeviation="1.6"/></filter></defs>
<g fill="#eef5fc" opacity=".9" filter="url(#blr)">
<path d="M134 36c4-4 9-3 12-1c3-5 9-7 14-6c3-6 8-9 16-8h6v61h-34c2-4 6-6 10-5c-2-5 0-9 5-10c-4-3-6-8-3-12c-6 0-11-4-14-8c-4 1-8 0-10-3c0-2 2-4 4-4z" opacity=".85"/>
<path d="M160 12c6-2 14-3 22-2v6c-8 0-15 0-22-1z" opacity=".5"/>
<ellipse cx="166" cy="48" rx="10" ry="7"/>
</g>
<path d="M8 18c10-4 25-4 35-1c-10 2-25 3-35 1z" fill="#cfe2f3" opacity=".5"/>
<g fill="#1c2330">
<path d="M94.7 17.5c3.6 0 6.2 4 6.2 9v45c0 5-1.5 10.5-5.7 10.5h-1c-4 0-5.5-5.5-5.5-10.5v-45c0-5 2.6-9 6-9z"/>
<path d="M88.7 49l-62.5 7.5v1.5l63 3z M100.8 49l52.8 9v1.5l-53.3 1.5z"/>
<ellipse cx="74" cy="50.5" rx="3.6" ry="4.8"/><ellipse cx="110.5" cy="50.5" rx="3.6" ry="4.8"/>
<path d="M68 80l26-4l26 4v2h-52z"/>
</g>
<path d="M91 20c1.5-2 5-2 6.5 0" stroke="#c8d0d8" stroke-width="1.2" fill="none"/>
</svg>
<div class="a" style="left:659.5px;top:722.7px;width:182.5px;height:90px;border:1px solid #9a9a9a"></div>
<svg class="a" style="left:650px;top:695px" width="200" height="109" viewBox="650 695 200 109">
 <path d="M750.8 709.5v12" stroke="#888" stroke-width="1"/>
 <circle cx="750.8" cy="704.4" r="5" fill="#fff" stroke="#8a8a8a" stroke-width="1"/>
 <path d="M753 702.5a2.8 2.8 0 1 0 .6 3" fill="none" stroke="#666" stroke-width="1"/>
 <path d="M753.6 700.8v2.5h-2.5" fill="none" stroke="#666" stroke-width="0.9"/>
 <g fill="#fff" stroke="#8a8a8a" stroke-width="1">
  <rect x="655.5" y="719.4" width="6.6" height="6.6" rx="1"/>
  <rect x="747.5" y="719.4" width="6.6" height="6.6" rx="1"/>
  <rect x="838.8" y="719.4" width="6.6" height="6.6" rx="1"/>
  <rect x="655.5" y="770.8" width="6.6" height="6.6" rx="1"/>
  <rect x="838.8" y="770.8" width="6.6" height="6.6" rx="1"/>
 </g>
</svg>
</body></html>
